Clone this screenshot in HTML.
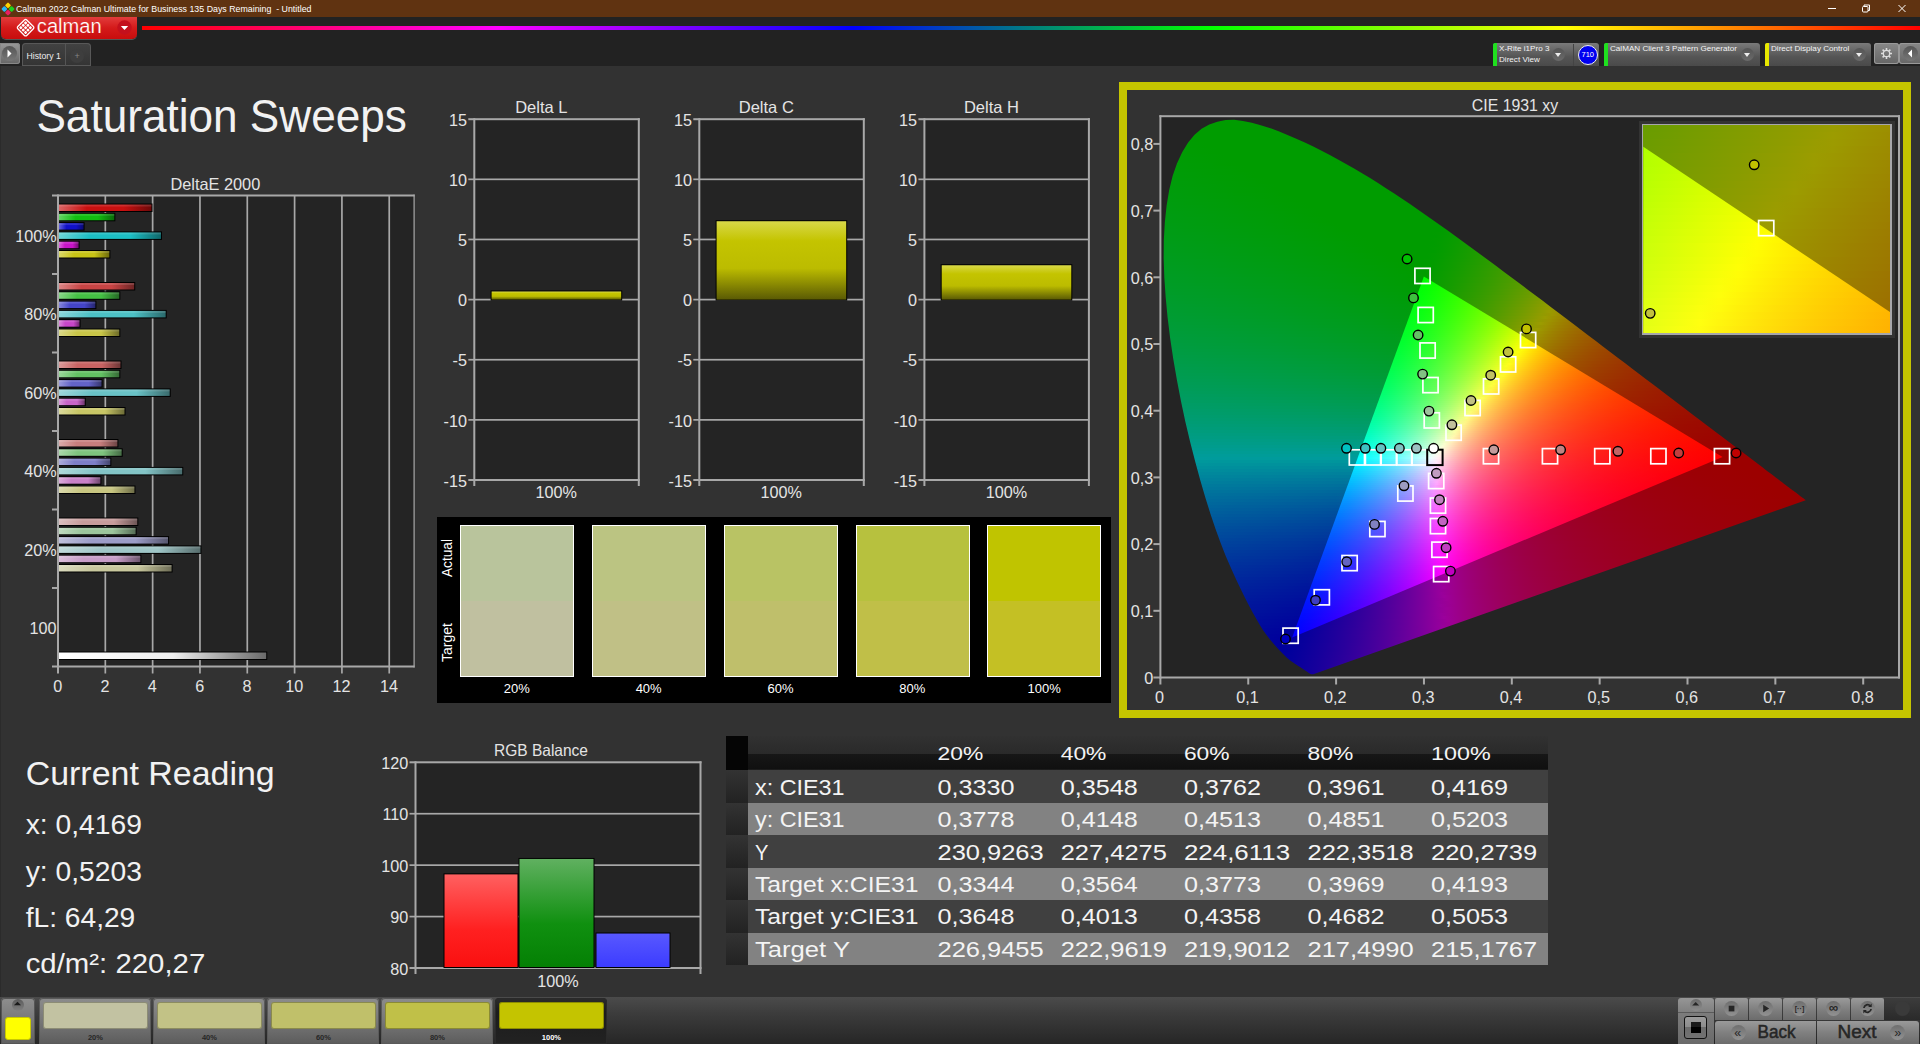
<!DOCTYPE html>
<html lang="en"><head><meta charset="utf-8"><title>Calman 2022 - Saturation Sweeps</title>
<style>
*{box-sizing:border-box;margin:0;padding:0}
html,body{width:1920px;height:1044px;overflow:hidden;background:#323232}
body{position:relative;font-family:"Liberation Sans",sans-serif;color:#eee}
.a{position:absolute}
.t{position:absolute;white-space:nowrap;line-height:1}
svg{position:absolute;left:0;top:0;overflow:visible}
svg text{font-family:"Liberation Sans",sans-serif}
#titlebar{left:0;top:0;width:1920px;height:17px;background:#603311}
#toolbar{left:0;top:17px;width:1920px;height:49px;background:#222}
#rainbow{left:142px;top:26px;width:1778px;height:4px;background:linear-gradient(90deg,#f00,#f0f,#00f,#0f0,#ff0,#f00)}
#calbtn{left:1px;top:17px;width:136px;height:22px;border-radius:0 0 5px 5px;background:linear-gradient(#e23c3c,#d41a1a 50%,#c80d0d);box-shadow:0 1px 0 #555}
.dd{position:absolute;top:43px;height:23px;border-radius:3px 3px 0 0;background:linear-gradient(#7a7a7a,#555 60%,#4a4a4a)}
.dd i{position:absolute;left:0;top:0;bottom:0;width:4px;border-radius:2px 0 0 0}
.dd b{position:absolute;top:5px;width:13px;height:13px;border-radius:7px;background:linear-gradient(#555,#6a6a6a)}
.dd b:after{content:"";position:absolute;left:3px;top:5px;border:3.5px solid transparent;border-top:4px solid #eee;border-bottom:0}
.dd span{position:absolute;left:6px;font-size:8.1px;color:#f4f4f4;white-space:nowrap;line-height:1}

.cl{position:absolute;overflow:hidden}
.cl i{display:block;height:3px}
.cl+.cl i{height:2px}
.cl.ins i{height:6.924px}</style></head>
<body>

<div class="a" id="titlebar"></div>
<svg width="14" height="14" style="left:1px;top:2px" viewBox="0 0 14 14"><g transform="rotate(45 7 7)"><rect x="2.2" y="2.2" width="4.5" height="4.5" rx="1" fill="#ffd400"/><rect x="7.3" y="2.2" width="4.5" height="4.500" rx="1" fill="#1fd11f"/><rect x="2.2" y="7.3" width="4.5" height="4.5" rx="1" fill="#29b6f6"/><rect x="7.3" y="7.3" width="4.5" height="4.5" rx="1" fill="#e91e63"/></g></svg>
<svg width="400" height="17"><text x="16" y="12" font-size="9.300" fill="#fff" textLength="295.500" lengthAdjust="spacingAndGlyphs" xml:space="preserve">Calman 2022 Calman Ultimate for Business 135 Days Remaining  - Untitled</text></svg>
<svg width="1920" height="17"><g stroke="#fff" stroke-width="1" fill="none"><path d="M1828 8.5h8"/><rect x="1862.500" y="6.500" width="5.500" height="5.500" rx="1"/><path d="M1864 6.500v-1.500h5.500v5.500h-1.500"/><path d="M1898.500 5l7 7m0-7l-7 7"/></g></svg>
<div class="a" id="toolbar"></div>
<div class="a" style="left:0;top:66px;width:1.300px;height:931px;background:#2b2b2b"></div>
<div class="a" id="rainbow"></div>
<div class="a" id="calbtn"></div>
<svg width="140" height="40"><g transform="translate(25.600 27.700) rotate(45)" fill="#fff"><rect x="-6.300" y="-6.300" width="12.600" height="12.600" rx="1.600" fill="none" stroke="#fff" stroke-width="1.300"/><rect x="-4.7" y="-4.7" width="2.700" height="2.700" rx=".9"/><rect x="-1.35" y="-4.7" width="2.700" height="2.700" rx=".9"/><rect x="2" y="-4.7" width="2.700" height="2.700" rx=".9"/><rect x="-4.7" y="-1.35" width="2.700" height="2.700" rx=".9"/><rect x="-1.35" y="-1.35" width="2.700" height="2.700" rx=".9"/><rect x="2" y="-1.35" width="2.700" height="2.700" rx=".9"/><rect x="-4.7" y="2" width="2.700" height="2.700" rx=".9"/><rect x="-1.35" y="2" width="2.700" height="2.700" rx=".9"/><rect x="2" y="2" width="2.700" height="2.700" rx=".9"/></g>
<text x="36.800" y="32.700" font-size="20" fill="#fff" stroke="#dc2222" stroke-width=".22" textLength="65" lengthAdjust="spacingAndGlyphs">calman</text>
<circle cx="124.500" cy="27.500" r="7.200" fill="#c4101c"/><path d="M120.800 26h7.400l-3.700 4z" fill="#fff"/></svg>
<div class="a" style="left:0;top:43px;width:20px;height:21px;border-radius:0 3px 3px 0;background:linear-gradient(#999,#666);box-shadow:0 0 0 1px #888 inset"></div>
<div class="a" style="left:2px;top:46px;width:15px;height:15px;border-radius:8px;background:linear-gradient(#555,#777)"></div>
<svg width="30" height="70"><path d="M7.500 49.500v8l4-4z" fill="#fff"/></svg>
<div class="a" style="left:22px;top:43px;width:69px;height:23px;border-radius:4px 4px 0 0;background:linear-gradient(#424242,#343434);box-shadow:0 0 0 1px #585858 inset"></div>
<div class="a" style="left:65px;top:44px;width:1px;height:22px;background:#555"></div>
<div class="a" style="left:70px;top:49px;width:14px;height:14px;border-radius:7px;background:#3e3e3e"></div>
<div class="t" style="left:74.600px;top:52.300px;font-size:9px;color:#858585">+</div>
<div class="t" style="left:26.500px;top:51.700px;font-size:8.700px;color:#eee">History 1</div>

<div class="dd" style="left:1493px;width:106px"><i style="background:#1fe01f"></i><span style="top:2px">X-Rite i1Pro 3</span><span style="top:13px">Direct View</span><b style="left:59px"></b><em style="position:absolute;left:80px;top:1px;width:1px;height:22px;background:#444"></em></div>
<div class="a" style="left:1578px;top:45px;width:20px;height:20px;border-radius:10px;background:#0000f0;border:1px solid #eee"></div>
<div class="t" style="left:1581.500px;top:51px;font-size:7.500px;color:#fff">710</div>
<div class="dd" style="left:1604px;width:156px"><i style="background:#1fe01f"></i><span style="top:2px">CalMAN Client 3 Pattern Generator</span><b style="left:137px"></b></div>
<div class="dd" style="left:1765px;width:106px"><i style="background:#e8e800"></i><span style="top:2px">Direct Display Control</span><b style="left:88px"></b></div>
<div class="a" style="left:1874px;top:43px;width:25px;height:21px;border-radius:3px;background:linear-gradient(#888,#666);box-shadow:0 0 0 1px #999 inset"></div>
<div class="a" style="left:1899px;top:43px;width:22px;height:21px;border-radius:3px 0 0 3px;background:linear-gradient(#888,#666);box-shadow:0 0 0 1px #999 inset"></div>
<div class="a" style="left:1903px;top:46px;width:15px;height:15px;border-radius:8px;background:linear-gradient(#555,#777)"></div>
<svg width="1920" height="70"><path d="M1912 49.500v8l-4-4z" fill="#fff"/><g transform="translate(1886.500 53.500)" fill="none" stroke="#ddd"><circle r="3.200" stroke-width="1.300"/><g stroke-width="1.600"><path d="M0 -5.500v2M0 5.500v-2M-5.500 0h2M5.500 0h-2M-3.900 -3.900l1.400 1.400M3.900 3.900l-1.400 -1.400M-3.900 3.900l1.400 -1.400M3.900 -3.900l-1.400 1.400"/></g></g></svg>

<svg width="440" height="1000"><text x="36.4" y="132" font-size="46.6" fill="#f2f2f2" textLength="370.5" lengthAdjust="spacingAndGlyphs">Saturation Sweeps</text><text x="25.7" y="785" font-size="33.6" fill="#f2f2f2" textLength="249" lengthAdjust="spacingAndGlyphs">Current Reading</text><text x="25.7" y="834.2" font-size="28" fill="#f2f2f2" textLength="116.2" lengthAdjust="spacingAndGlyphs">x: 0,4169</text><text x="25.7" y="880.6" font-size="28" fill="#f2f2f2" textLength="116.2" lengthAdjust="spacingAndGlyphs">y: 0,5203</text><text x="25.7" y="927" font-size="28" fill="#f2f2f2" textLength="109.6" lengthAdjust="spacingAndGlyphs">fL: 64,29</text><text x="25.7" y="973.3" font-size="28" fill="#f2f2f2" textLength="179.6" lengthAdjust="spacingAndGlyphs">cd/m²: 220,27</text></svg>
<svg width="440" height="720"><defs><linearGradient id="b00"><stop offset="0" stop-color="#db6464"/><stop offset=".3" stop-color="#c81010"/><stop offset=".7" stop-color="#c81010"/><stop offset="1" stop-color="#6e0909"/></linearGradient><linearGradient id="b01"><stop offset="0" stop-color="#64d564"/><stop offset=".3" stop-color="#10be10"/><stop offset=".7" stop-color="#10be10"/><stop offset="1" stop-color="#096909"/></linearGradient><linearGradient id="b02"><stop offset="0" stop-color="#6464db"/><stop offset=".3" stop-color="#1010c8"/><stop offset=".7" stop-color="#1010c8"/><stop offset="1" stop-color="#09096e"/></linearGradient><linearGradient id="b03"><stop offset="0" stop-color="#6bd5d9"/><stop offset=".3" stop-color="#1cbec4"/><stop offset=".7" stop-color="#1cbec4"/><stop offset="1" stop-color="#0f696c"/></linearGradient><linearGradient id="b04"><stop offset="0" stop-color="#db66db"/><stop offset=".3" stop-color="#c814c8"/><stop offset=".7" stop-color="#c814c8"/><stop offset="1" stop-color="#6e0b6e"/></linearGradient><linearGradient id="b05"><stop offset="0" stop-color="#dbd968"/><stop offset=".3" stop-color="#c8c416"/><stop offset=".7" stop-color="#c8c416"/><stop offset="1" stop-color="#6e6c0c"/></linearGradient><linearGradient id="b10"><stop offset="0" stop-color="#db8585"/><stop offset=".3" stop-color="#c84444"/><stop offset=".7" stop-color="#c84444"/><stop offset="1" stop-color="#6e2525"/></linearGradient><linearGradient id="b11"><stop offset="0" stop-color="#85d785"/><stop offset=".3" stop-color="#44c144"/><stop offset=".7" stop-color="#44c144"/><stop offset="1" stop-color="#256a25"/></linearGradient><linearGradient id="b12"><stop offset="0" stop-color="#8585db"/><stop offset=".3" stop-color="#4444c8"/><stop offset=".7" stop-color="#4444c8"/><stop offset="1" stop-color="#25256e"/></linearGradient><linearGradient id="b13"><stop offset="0" stop-color="#8bd7d9"/><stop offset=".3" stop-color="#4cc1c5"/><stop offset=".7" stop-color="#4cc1c5"/><stop offset="1" stop-color="#2a6a6c"/></linearGradient><linearGradient id="b14"><stop offset="0" stop-color="#db87db"/><stop offset=".3" stop-color="#c846c8"/><stop offset=".7" stop-color="#c846c8"/><stop offset="1" stop-color="#6e266e"/></linearGradient><linearGradient id="b15"><stop offset="0" stop-color="#dbd988"/><stop offset=".3" stop-color="#c8c548"/><stop offset=".7" stop-color="#c8c548"/><stop offset="1" stop-color="#6e6c28"/></linearGradient><linearGradient id="b20"><stop offset="0" stop-color="#db9a9a"/><stop offset=".3" stop-color="#c86363"/><stop offset=".7" stop-color="#c86363"/><stop offset="1" stop-color="#6e3636"/></linearGradient><linearGradient id="b21"><stop offset="0" stop-color="#9ad79a"/><stop offset=".3" stop-color="#63c263"/><stop offset=".7" stop-color="#63c263"/><stop offset="1" stop-color="#366b36"/></linearGradient><linearGradient id="b22"><stop offset="0" stop-color="#9a9adb"/><stop offset=".3" stop-color="#6363c8"/><stop offset=".7" stop-color="#6363c8"/><stop offset="1" stop-color="#36366e"/></linearGradient><linearGradient id="b23"><stop offset="0" stop-color="#9ed7da"/><stop offset=".3" stop-color="#69c2c6"/><stop offset=".7" stop-color="#69c2c6"/><stop offset="1" stop-color="#3a6b6d"/></linearGradient><linearGradient id="b24"><stop offset="0" stop-color="#db9bdb"/><stop offset=".3" stop-color="#c865c8"/><stop offset=".7" stop-color="#c865c8"/><stop offset="1" stop-color="#6e386e"/></linearGradient><linearGradient id="b25"><stop offset="0" stop-color="#dbda9c"/><stop offset=".3" stop-color="#c8c666"/><stop offset=".7" stop-color="#c8c666"/><stop offset="1" stop-color="#6e6d38"/></linearGradient><linearGradient id="b30"><stop offset="0" stop-color="#dbabab"/><stop offset=".3" stop-color="#c87e7e"/><stop offset=".7" stop-color="#c87e7e"/><stop offset="1" stop-color="#6e4545"/></linearGradient><linearGradient id="b31"><stop offset="0" stop-color="#abd9ab"/><stop offset=".3" stop-color="#7ec47e"/><stop offset=".7" stop-color="#7ec47e"/><stop offset="1" stop-color="#456c45"/></linearGradient><linearGradient id="b32"><stop offset="0" stop-color="#ababdb"/><stop offset=".3" stop-color="#7e7ec8"/><stop offset=".7" stop-color="#7e7ec8"/><stop offset="1" stop-color="#45456e"/></linearGradient><linearGradient id="b33"><stop offset="0" stop-color="#aed9da"/><stop offset=".3" stop-color="#83c4c6"/><stop offset=".7" stop-color="#83c4c6"/><stop offset="1" stop-color="#486c6d"/></linearGradient><linearGradient id="b34"><stop offset="0" stop-color="#dbacdb"/><stop offset=".3" stop-color="#c880c8"/><stop offset=".7" stop-color="#c880c8"/><stop offset="1" stop-color="#6e466e"/></linearGradient><linearGradient id="b35"><stop offset="0" stop-color="#dbdaad"/><stop offset=".3" stop-color="#c8c681"/><stop offset=".7" stop-color="#c8c681"/><stop offset="1" stop-color="#6e6d47"/></linearGradient><linearGradient id="b40"><stop offset="0" stop-color="#dbbfbf"/><stop offset=".3" stop-color="#c89c9c"/><stop offset=".7" stop-color="#c89c9c"/><stop offset="1" stop-color="#6e5656"/></linearGradient><linearGradient id="b41"><stop offset="0" stop-color="#bfdabf"/><stop offset=".3" stop-color="#9cc69c"/><stop offset=".7" stop-color="#9cc69c"/><stop offset="1" stop-color="#566d56"/></linearGradient><linearGradient id="b42"><stop offset="0" stop-color="#bfbfdb"/><stop offset=".3" stop-color="#9c9cc8"/><stop offset=".7" stop-color="#9c9cc8"/><stop offset="1" stop-color="#56566e"/></linearGradient><linearGradient id="b43"><stop offset="0" stop-color="#c1dadb"/><stop offset=".3" stop-color="#9fc6c7"/><stop offset=".7" stop-color="#9fc6c7"/><stop offset="1" stop-color="#576d6d"/></linearGradient><linearGradient id="b44"><stop offset="0" stop-color="#dbbfdb"/><stop offset=".3" stop-color="#c89dc8"/><stop offset=".7" stop-color="#c89dc8"/><stop offset="1" stop-color="#6e566e"/></linearGradient><linearGradient id="b45"><stop offset="0" stop-color="#dbdbbf"/><stop offset=".3" stop-color="#c8c79d"/><stop offset=".7" stop-color="#c8c79d"/><stop offset="1" stop-color="#6e6d56"/></linearGradient><linearGradient id="bw"><stop offset="0" stop-color="#fff"/><stop offset=".55" stop-color="#eee"/><stop offset="1" stop-color="#6a6a6a"/></linearGradient></defs><rect x="58" y="195.5" width="356.1" height="471" fill="#242424"/><rect x="104.47" y="195.5" width="1.700" height="478" fill="#a8a8a8"/><rect x="151.79" y="195.5" width="1.700" height="478" fill="#a8a8a8"/><rect x="199.11" y="195.5" width="1.700" height="478" fill="#a8a8a8"/><rect x="246.43" y="195.5" width="1.700" height="478" fill="#a8a8a8"/><rect x="293.75" y="195.5" width="1.700" height="478" fill="#a8a8a8"/><rect x="341.07" y="195.5" width="1.700" height="478" fill="#a8a8a8"/><rect x="388.39" y="195.5" width="1.700" height="478" fill="#a8a8a8"/><rect x="57" y="194.5" width="2" height="479" fill="#a8a8a8"/><rect x="413.5" y="194.5" width="1.200" height="473" fill="#a8a8a8"/><rect x="52" y="194.5" width="362.6" height="2" fill="#a8a8a8"/><rect x="52" y="665.5" width="362.6" height="2" fill="#a8a8a8"/><rect x="52" y="273" width="6" height="2" fill="#a8a8a8"/><rect x="52" y="351.5" width="6" height="2" fill="#a8a8a8"/><rect x="52" y="430" width="6" height="2" fill="#a8a8a8"/><rect x="52" y="508.5" width="6" height="2" fill="#a8a8a8"/><rect x="52" y="587" width="6" height="2" fill="#a8a8a8"/><text x="57.7" y="692.200" font-size="16.200" fill="#e4e4e4" text-anchor="middle">0</text><text x="105.02" y="692.200" font-size="16.200" fill="#e4e4e4" text-anchor="middle">2</text><text x="152.34" y="692.200" font-size="16.200" fill="#e4e4e4" text-anchor="middle">4</text><text x="199.66" y="692.200" font-size="16.200" fill="#e4e4e4" text-anchor="middle">6</text><text x="246.98" y="692.200" font-size="16.200" fill="#e4e4e4" text-anchor="middle">8</text><text x="294.3" y="692.200" font-size="16.200" fill="#e4e4e4" text-anchor="middle">10</text><text x="341.62" y="692.200" font-size="16.200" fill="#e4e4e4" text-anchor="middle">12</text><text x="388.94" y="692.200" font-size="16.200" fill="#e4e4e4" text-anchor="middle">14</text><text x="56.600" y="241.95" font-size="16.200" fill="#e4e4e4" text-anchor="end">100%</text><text x="56.600" y="320.45" font-size="16.200" fill="#e4e4e4" text-anchor="end">80%</text><text x="56.600" y="398.95" font-size="16.200" fill="#e4e4e4" text-anchor="end">60%</text><text x="56.600" y="477.45" font-size="16.200" fill="#e4e4e4" text-anchor="end">40%</text><text x="56.600" y="555.95" font-size="16.200" fill="#e4e4e4" text-anchor="end">20%</text><text x="56.600" y="634.45" font-size="16.200" fill="#e4e4e4" text-anchor="end">100</text><text x="170.400" y="190" font-size="16.500" fill="#e4e4e4" textLength="89.900" lengthAdjust="spacingAndGlyphs">DeltaE 2000</text><rect x="59" y="203.5" width="93.48" height="8.500" fill="#000"/><rect x="59" y="204.5" width="92.48" height="6.500" fill="url(#b00)"/><rect x="59" y="204.5" width="92.48" height="2" fill="#fff" opacity=".13"/><rect x="59" y="212.8" width="56.34" height="8.500" fill="#000"/><rect x="59" y="213.8" width="55.34" height="6.500" fill="url(#b01)"/><rect x="59" y="213.8" width="55.34" height="2" fill="#fff" opacity=".13"/><rect x="59" y="222.1" width="25.58" height="8.500" fill="#000"/><rect x="59" y="223.1" width="24.58" height="6.500" fill="url(#b02)"/><rect x="59" y="223.1" width="24.58" height="2" fill="#fff" opacity=".13"/><rect x="59" y="231.4" width="102.95" height="8.500" fill="#000"/><rect x="59" y="232.4" width="101.95" height="6.500" fill="url(#b03)"/><rect x="59" y="232.4" width="101.95" height="2" fill="#fff" opacity=".13"/><rect x="59" y="240.7" width="20.61" height="8.500" fill="#000"/><rect x="59" y="241.7" width="19.61" height="6.500" fill="url(#b04)"/><rect x="59" y="241.7" width="19.61" height="2" fill="#fff" opacity=".13"/><rect x="59" y="250" width="51.37" height="8.500" fill="#000"/><rect x="59" y="251" width="50.37" height="6.500" fill="url(#b05)"/><rect x="59" y="251" width="50.37" height="2" fill="#fff" opacity=".13"/><rect x="59" y="282" width="76.21" height="8.500" fill="#000"/><rect x="59" y="283" width="75.21" height="6.500" fill="url(#b10)"/><rect x="59" y="283" width="75.21" height="2" fill="#fff" opacity=".13"/><rect x="59" y="291.3" width="61.31" height="8.500" fill="#000"/><rect x="59" y="292.3" width="60.31" height="6.500" fill="url(#b11)"/><rect x="59" y="292.3" width="60.31" height="2" fill="#fff" opacity=".13"/><rect x="59" y="300.6" width="37.41" height="8.500" fill="#000"/><rect x="59" y="301.6" width="36.41" height="6.500" fill="url(#b12)"/><rect x="59" y="301.6" width="36.41" height="2" fill="#fff" opacity=".13"/><rect x="59" y="309.9" width="107.68" height="8.500" fill="#000"/><rect x="59" y="310.9" width="106.68" height="6.500" fill="url(#b13)"/><rect x="59" y="310.9" width="106.68" height="2" fill="#fff" opacity=".13"/><rect x="59" y="319.2" width="21.56" height="8.500" fill="#000"/><rect x="59" y="320.2" width="20.56" height="6.500" fill="url(#b14)"/><rect x="59" y="320.2" width="20.56" height="2" fill="#fff" opacity=".13"/><rect x="59" y="328.5" width="61.31" height="8.500" fill="#000"/><rect x="59" y="329.5" width="60.31" height="6.500" fill="url(#b15)"/><rect x="59" y="329.5" width="60.31" height="2" fill="#fff" opacity=".13"/><rect x="59" y="360.5" width="62.49" height="8.500" fill="#000"/><rect x="59" y="361.5" width="61.49" height="6.500" fill="url(#b20)"/><rect x="59" y="361.5" width="61.49" height="2" fill="#fff" opacity=".13"/><rect x="59" y="369.8" width="61.31" height="8.500" fill="#000"/><rect x="59" y="370.8" width="60.31" height="6.500" fill="url(#b21)"/><rect x="59" y="370.8" width="60.31" height="2" fill="#fff" opacity=".13"/><rect x="59" y="379.1" width="43.56" height="8.500" fill="#000"/><rect x="59" y="380.1" width="42.56" height="6.500" fill="url(#b22)"/><rect x="59" y="380.1" width="42.56" height="2" fill="#fff" opacity=".13"/><rect x="59" y="388.4" width="111.7" height="8.500" fill="#000"/><rect x="59" y="389.4" width="110.7" height="6.500" fill="url(#b23)"/><rect x="59" y="389.4" width="110.7" height="2" fill="#fff" opacity=".13"/><rect x="59" y="397.7" width="26.76" height="8.500" fill="#000"/><rect x="59" y="398.7" width="25.76" height="6.500" fill="url(#b24)"/><rect x="59" y="398.7" width="25.76" height="2" fill="#fff" opacity=".13"/><rect x="59" y="407" width="66.51" height="8.500" fill="#000"/><rect x="59" y="408" width="65.51" height="6.500" fill="url(#b25)"/><rect x="59" y="408" width="65.51" height="2" fill="#fff" opacity=".13"/><rect x="59" y="439" width="59.41" height="8.500" fill="#000"/><rect x="59" y="440" width="58.41" height="6.500" fill="url(#b30)"/><rect x="59" y="440" width="58.41" height="2" fill="#fff" opacity=".13"/><rect x="59" y="448.3" width="63.67" height="8.500" fill="#000"/><rect x="59" y="449.3" width="62.67" height="6.500" fill="url(#b31)"/><rect x="59" y="449.3" width="62.67" height="2" fill="#fff" opacity=".13"/><rect x="59" y="457.6" width="52.32" height="8.500" fill="#000"/><rect x="59" y="458.6" width="51.32" height="6.500" fill="url(#b32)"/><rect x="59" y="458.6" width="51.32" height="2" fill="#fff" opacity=".13"/><rect x="59" y="466.9" width="124.24" height="8.500" fill="#000"/><rect x="59" y="467.9" width="123.24" height="6.500" fill="url(#b33)"/><rect x="59" y="467.9" width="123.24" height="2" fill="#fff" opacity=".13"/><rect x="59" y="476.2" width="42.38" height="8.500" fill="#000"/><rect x="59" y="477.2" width="41.38" height="6.500" fill="url(#b34)"/><rect x="59" y="477.2" width="41.38" height="2" fill="#fff" opacity=".13"/><rect x="59" y="485.5" width="76.45" height="8.500" fill="#000"/><rect x="59" y="486.5" width="75.45" height="6.500" fill="url(#b35)"/><rect x="59" y="486.5" width="75.45" height="2" fill="#fff" opacity=".13"/><rect x="59" y="517.5" width="79.29" height="8.500" fill="#000"/><rect x="59" y="518.5" width="78.29" height="6.500" fill="url(#b40)"/><rect x="59" y="518.5" width="78.29" height="2" fill="#fff" opacity=".13"/><rect x="59" y="526.8" width="77.63" height="8.500" fill="#000"/><rect x="59" y="527.8" width="76.63" height="6.500" fill="url(#b41)"/><rect x="59" y="527.8" width="76.63" height="2" fill="#fff" opacity=".13"/><rect x="59" y="536.1" width="110.05" height="8.500" fill="#000"/><rect x="59" y="537.1" width="109.05" height="6.500" fill="url(#b42)"/><rect x="59" y="537.1" width="109.05" height="2" fill="#fff" opacity=".13"/><rect x="59" y="545.4" width="142.46" height="8.500" fill="#000"/><rect x="59" y="546.4" width="141.46" height="6.500" fill="url(#b43)"/><rect x="59" y="546.4" width="141.46" height="2" fill="#fff" opacity=".13"/><rect x="59" y="554.7" width="82.36" height="8.500" fill="#000"/><rect x="59" y="555.7" width="81.36" height="6.500" fill="url(#b44)"/><rect x="59" y="555.7" width="81.36" height="2" fill="#fff" opacity=".13"/><rect x="59" y="564" width="113.59" height="8.500" fill="#000"/><rect x="59" y="565" width="112.59" height="6.500" fill="url(#b45)"/><rect x="59" y="565" width="112.59" height="2" fill="#fff" opacity=".13"/><rect x="59" y="651.500" width="208.23" height="8.500" fill="#000"/><rect x="59" y="652.500" width="207.23" height="6.500" fill="url(#bw)"/></svg>
<svg width="1120" height="520"><defs><linearGradient id="yb" x1="0" y1="0" x2="0" y2="1"><stop offset="0" stop-color="#d8d848"/><stop offset=".25" stop-color="#c4c400"/><stop offset=".6" stop-color="#bcbc00"/><stop offset="1" stop-color="#5a5a04"/></linearGradient></defs><rect x="474.3" y="119.2" width="164.5" height="360.8" fill="#242424"/><rect x="468.3" y="178.48" width="170.5" height="1.700" fill="#a8a8a8"/><rect x="468.3" y="238.62" width="170.5" height="1.700" fill="#a8a8a8"/><rect x="468.3" y="298.75" width="170.5" height="1.700" fill="#a8a8a8"/><rect x="468.3" y="358.88" width="170.5" height="1.700" fill="#a8a8a8"/><rect x="468.3" y="419.02" width="170.5" height="1.700" fill="#a8a8a8"/><rect x="468.3" y="118.2" width="171.5" height="2" fill="#a8a8a8"/><rect x="468.3" y="479" width="171.5" height="2" fill="#a8a8a8"/><rect x="473.3" y="118.2" width="2" height="367.8" fill="#a8a8a8"/><rect x="637.8" y="118.2" width="2" height="367.8" fill="#a8a8a8"/><text x="467" y="125.9" font-size="16.200" fill="#e4e4e4" text-anchor="end">15</text><text x="467" y="186.03" font-size="16.200" fill="#e4e4e4" text-anchor="end">10</text><text x="467" y="246.17" font-size="16.200" fill="#e4e4e4" text-anchor="end">5</text><text x="467" y="306.3" font-size="16.200" fill="#e4e4e4" text-anchor="end">0</text><text x="467" y="366.43" font-size="16.200" fill="#e4e4e4" text-anchor="end">-5</text><text x="467" y="426.57" font-size="16.200" fill="#e4e4e4" text-anchor="end">-10</text><text x="467" y="486.7" font-size="16.200" fill="#e4e4e4" text-anchor="end">-15</text><text x="541.3" y="112.500" font-size="16.500" fill="#e4e4e4" text-anchor="middle">Delta L</text><text x="556.25" y="498" font-size="16.200" fill="#e4e4e4" text-anchor="middle">100%</text><rect x="490.6" y="290.46" width="131.6" height="10.14" fill="#000"/><rect x="491.6" y="291.46" width="129.6" height="8.14" fill="url(#yb)"/><rect x="699.3" y="119.2" width="164.5" height="360.8" fill="#242424"/><rect x="693.3" y="178.48" width="170.5" height="1.700" fill="#a8a8a8"/><rect x="693.3" y="238.62" width="170.5" height="1.700" fill="#a8a8a8"/><rect x="693.3" y="298.75" width="170.5" height="1.700" fill="#a8a8a8"/><rect x="693.3" y="358.88" width="170.5" height="1.700" fill="#a8a8a8"/><rect x="693.3" y="419.02" width="170.5" height="1.700" fill="#a8a8a8"/><rect x="693.3" y="118.2" width="171.5" height="2" fill="#a8a8a8"/><rect x="693.3" y="479" width="171.5" height="2" fill="#a8a8a8"/><rect x="698.3" y="118.2" width="2" height="367.8" fill="#a8a8a8"/><rect x="862.8" y="118.2" width="2" height="367.8" fill="#a8a8a8"/><text x="692" y="125.9" font-size="16.200" fill="#e4e4e4" text-anchor="end">15</text><text x="692" y="186.03" font-size="16.200" fill="#e4e4e4" text-anchor="end">10</text><text x="692" y="246.17" font-size="16.200" fill="#e4e4e4" text-anchor="end">5</text><text x="692" y="306.3" font-size="16.200" fill="#e4e4e4" text-anchor="end">0</text><text x="692" y="366.43" font-size="16.200" fill="#e4e4e4" text-anchor="end">-5</text><text x="692" y="426.57" font-size="16.200" fill="#e4e4e4" text-anchor="end">-10</text><text x="692" y="486.7" font-size="16.200" fill="#e4e4e4" text-anchor="end">-15</text><text x="766.3" y="112.500" font-size="16.500" fill="#e4e4e4" text-anchor="middle">Delta C</text><text x="781.25" y="498" font-size="16.200" fill="#e4e4e4" text-anchor="middle">100%</text><rect x="715.6" y="220.22" width="131.6" height="80.38" fill="#000"/><rect x="716.6" y="221.22" width="129.6" height="78.38" fill="url(#yb)"/><rect x="924.4" y="119.2" width="164.5" height="360.8" fill="#242424"/><rect x="918.4" y="178.48" width="170.5" height="1.700" fill="#a8a8a8"/><rect x="918.4" y="238.62" width="170.5" height="1.700" fill="#a8a8a8"/><rect x="918.4" y="298.75" width="170.5" height="1.700" fill="#a8a8a8"/><rect x="918.4" y="358.88" width="170.5" height="1.700" fill="#a8a8a8"/><rect x="918.4" y="419.02" width="170.5" height="1.700" fill="#a8a8a8"/><rect x="918.4" y="118.2" width="171.5" height="2" fill="#a8a8a8"/><rect x="918.4" y="479" width="171.5" height="2" fill="#a8a8a8"/><rect x="923.4" y="118.2" width="2" height="367.8" fill="#a8a8a8"/><rect x="1087.9" y="118.2" width="2" height="367.8" fill="#a8a8a8"/><text x="917.1" y="125.9" font-size="16.200" fill="#e4e4e4" text-anchor="end">15</text><text x="917.1" y="186.03" font-size="16.200" fill="#e4e4e4" text-anchor="end">10</text><text x="917.1" y="246.17" font-size="16.200" fill="#e4e4e4" text-anchor="end">5</text><text x="917.1" y="306.3" font-size="16.200" fill="#e4e4e4" text-anchor="end">0</text><text x="917.1" y="366.43" font-size="16.200" fill="#e4e4e4" text-anchor="end">-5</text><text x="917.1" y="426.57" font-size="16.200" fill="#e4e4e4" text-anchor="end">-10</text><text x="917.1" y="486.7" font-size="16.200" fill="#e4e4e4" text-anchor="end">-15</text><text x="991.4" y="112.500" font-size="16.500" fill="#e4e4e4" text-anchor="middle">Delta H</text><text x="1006.35" y="498" font-size="16.200" fill="#e4e4e4" text-anchor="middle">100%</text><rect x="940.7" y="264.24" width="131.6" height="36.36" fill="#000"/><rect x="941.7" y="265.24" width="129.6" height="34.36" fill="url(#yb)"/></svg>
<div class="a" style="left:436.500px;top:516.500px;width:674.500px;height:186px;background:#000"></div><div class="a" style="left:460px;top:524.500px;width:114px;height:152px;border:1px solid #fff;background:linear-gradient(rgb(185,196,156) 50%,rgb(192,192,160) 50%)"></div><div class="a" style="left:591.85px;top:524.500px;width:114px;height:152px;border:1px solid #fff;background:linear-gradient(rgb(187,196,130) 50%,rgb(192,192,134) 50%)"></div><div class="a" style="left:723.7px;top:524.500px;width:114px;height:152px;border:1px solid #fff;background:linear-gradient(rgb(185,195,100) 50%,rgb(191,191,107) 50%)"></div><div class="a" style="left:855.55px;top:524.500px;width:114px;height:152px;border:1px solid #fff;background:linear-gradient(rgb(183,193,62) 50%,rgb(192,191,72) 50%)"></div><div class="a" style="left:987.4px;top:524.500px;width:114px;height:152px;border:1px solid #fff;background:linear-gradient(rgb(192,196,0) 50%,rgb(196,192,36) 50%)"></div><svg width="1120" height="710"><text x="516.8" y="692.8" font-size="13" fill="#fff" text-anchor="middle">20%</text><text x="648.65" y="692.8" font-size="13" fill="#fff" text-anchor="middle">40%</text><text x="780.5" y="692.8" font-size="13" fill="#fff" text-anchor="middle">60%</text><text x="912.35" y="692.8" font-size="13" fill="#fff" text-anchor="middle">80%</text><text x="1044.2" y="692.8" font-size="13" fill="#fff" text-anchor="middle">100%</text><text transform="translate(451.600 558) rotate(-90)" font-size="14" fill="#fff" text-anchor="middle" textLength="38" lengthAdjust="spacingAndGlyphs">Actual</text><text transform="translate(451.600 642.500) rotate(-90)" font-size="14" fill="#fff" text-anchor="middle" textLength="39" lengthAdjust="spacingAndGlyphs">Target</text></svg>
<svg width="720" height="1000"><defs><linearGradient id="gr" x1="0" y1="0" x2="0" y2="1"><stop offset="0" stop-color="#ff6060"/><stop offset=".6" stop-color="#ff2020"/><stop offset="1" stop-color="#fa1010"/></linearGradient><linearGradient id="gg" x1="0" y1="0" x2="0" y2="1"><stop offset="0" stop-color="#60b060"/><stop offset=".6" stop-color="#109010"/><stop offset="1" stop-color="#048004"/></linearGradient><linearGradient id="gb" x1="0" y1="0" x2="0" y2="1"><stop offset="0" stop-color="#5858ff"/><stop offset="1" stop-color="#3c3cff"/></linearGradient></defs><rect x="415.5" y="762.3" width="285" height="205.7" fill="#242424"/><rect x="409.5" y="812.87" width="291" height="1.700" fill="#a8a8a8"/><rect x="409.5" y="864.3" width="291" height="1.700" fill="#a8a8a8"/><rect x="409.5" y="915.73" width="291" height="1.700" fill="#a8a8a8"/><rect x="409.5" y="761.3" width="292" height="2" fill="#a8a8a8"/><rect x="409.5" y="967" width="292" height="2" fill="#a8a8a8"/><rect x="414.5" y="761.3" width="2" height="212.7" fill="#a8a8a8"/><rect x="699.5" y="761.3" width="2" height="212.7" fill="#a8a8a8"/><text x="408.2" y="769" font-size="16.200" fill="#e4e4e4" text-anchor="end">120</text><text x="408.2" y="820.42" font-size="16.200" fill="#e4e4e4" text-anchor="end">110</text><text x="408.2" y="871.85" font-size="16.200" fill="#e4e4e4" text-anchor="end">100</text><text x="408.2" y="923.28" font-size="16.200" fill="#e4e4e4" text-anchor="end">90</text><text x="408.2" y="974.7" font-size="16.200" fill="#e4e4e4" text-anchor="end">80</text><text x="541" y="756.100" font-size="16.500" fill="#e4e4e4" text-anchor="middle" textLength="94" lengthAdjust="spacingAndGlyphs">RGB Balance</text><text x="558" y="986.500" font-size="16.200" fill="#e4e4e4" text-anchor="middle">100%</text><rect x="443.5" y="873.38" width="75" height="94.62" fill="#000"/><rect x="444.5" y="874.38" width="73" height="92.62" fill="url(#gr)"/><rect x="518.5" y="857.95" width="76" height="110.05" fill="#000"/><rect x="519.5" y="858.95" width="74" height="108.05" fill="url(#gg)"/><rect x="595.5" y="932.52" width="75" height="35.48" fill="#000"/><rect x="596.5" y="933.52" width="73" height="33.48" fill="url(#gb)"/></svg>
<div class="a" style="left:725.6px;top:735.6px;width:22.3px;height:34.6px;background:#050505"></div><div class="a" style="left:747.9px;top:735.6px;width:799.7px;height:34.6px;background:linear-gradient(#313131 0,#2a2a2a 52%,#171717 52%,#101010 96%,#222 100%)"></div><div class="a" style="left:747.9px;top:770.2px;width:799.7px;height:32.47px;background:#404040"></div><div class="a" style="left:725.6px;top:770.2px;width:22.3px;height:32.47px;background:linear-gradient(#333,#222)"></div><div class="a" style="left:747.9px;top:802.67px;width:799.7px;height:32.47px;background:#828282"></div><div class="a" style="left:725.6px;top:802.67px;width:22.3px;height:32.47px;background:linear-gradient(#333,#222)"></div><div class="a" style="left:747.9px;top:835.14px;width:799.7px;height:32.47px;background:#404040"></div><div class="a" style="left:725.6px;top:835.14px;width:22.3px;height:32.47px;background:linear-gradient(#333,#222)"></div><div class="a" style="left:747.9px;top:867.61px;width:799.7px;height:32.47px;background:#828282"></div><div class="a" style="left:725.6px;top:867.61px;width:22.3px;height:32.47px;background:linear-gradient(#333,#222)"></div><div class="a" style="left:747.9px;top:900.08px;width:799.7px;height:32.47px;background:#404040"></div><div class="a" style="left:725.6px;top:900.08px;width:22.3px;height:32.47px;background:linear-gradient(#333,#222)"></div><div class="a" style="left:747.9px;top:932.55px;width:799.7px;height:32.47px;background:#828282"></div><div class="a" style="left:725.6px;top:932.55px;width:22.3px;height:32.47px;background:linear-gradient(#333,#222)"></div><svg width="1600" height="1000"><text x="937.5" y="760" font-size="18.6" fill="#f4f4f4" textLength="45.7" lengthAdjust="spacingAndGlyphs">20%</text><text x="1060.7" y="760" font-size="18.6" fill="#f4f4f4" textLength="45.7" lengthAdjust="spacingAndGlyphs">40%</text><text x="1183.9" y="760" font-size="18.6" fill="#f4f4f4" textLength="45.7" lengthAdjust="spacingAndGlyphs">60%</text><text x="1307.5" y="760" font-size="18.6" fill="#f4f4f4" textLength="45.7" lengthAdjust="spacingAndGlyphs">80%</text><text x="1431" y="760" font-size="18.6" fill="#f4f4f4" textLength="59.7" lengthAdjust="spacingAndGlyphs">100%</text><text x="755" y="794.6" font-size="21.5" fill="#f4f4f4" textLength="89.6" lengthAdjust="spacingAndGlyphs">x: CIE31</text><text x="937.5" y="794.6" font-size="21.5" fill="#f4f4f4" textLength="77" lengthAdjust="spacingAndGlyphs">0,3330</text><text x="1060.7" y="794.6" font-size="21.5" fill="#f4f4f4" textLength="77" lengthAdjust="spacingAndGlyphs">0,3548</text><text x="1183.9" y="794.6" font-size="21.5" fill="#f4f4f4" textLength="77" lengthAdjust="spacingAndGlyphs">0,3762</text><text x="1307.5" y="794.6" font-size="21.5" fill="#f4f4f4" textLength="77" lengthAdjust="spacingAndGlyphs">0,3961</text><text x="1431" y="794.6" font-size="21.5" fill="#f4f4f4" textLength="77" lengthAdjust="spacingAndGlyphs">0,4169</text><text x="755" y="827.07" font-size="21.5" fill="#f4f4f4" textLength="89.6" lengthAdjust="spacingAndGlyphs">y: CIE31</text><text x="937.5" y="827.07" font-size="21.5" fill="#f4f4f4" textLength="77" lengthAdjust="spacingAndGlyphs">0,3778</text><text x="1060.7" y="827.07" font-size="21.5" fill="#f4f4f4" textLength="77" lengthAdjust="spacingAndGlyphs">0,4148</text><text x="1183.9" y="827.07" font-size="21.5" fill="#f4f4f4" textLength="77" lengthAdjust="spacingAndGlyphs">0,4513</text><text x="1307.5" y="827.07" font-size="21.5" fill="#f4f4f4" textLength="77" lengthAdjust="spacingAndGlyphs">0,4851</text><text x="1431" y="827.07" font-size="21.5" fill="#f4f4f4" textLength="77" lengthAdjust="spacingAndGlyphs">0,5203</text><text x="755" y="859.54" font-size="21.5" fill="#f4f4f4" textLength="13.4" lengthAdjust="spacingAndGlyphs">Y</text><text x="937.5" y="859.54" font-size="21.5" fill="#f4f4f4" textLength="106.2" lengthAdjust="spacingAndGlyphs">230,9263</text><text x="1060.7" y="859.54" font-size="21.5" fill="#f4f4f4" textLength="106.2" lengthAdjust="spacingAndGlyphs">227,4275</text><text x="1183.9" y="859.54" font-size="21.5" fill="#f4f4f4" textLength="106.2" lengthAdjust="spacingAndGlyphs">224,6113</text><text x="1307.5" y="859.54" font-size="21.5" fill="#f4f4f4" textLength="106.2" lengthAdjust="spacingAndGlyphs">222,3518</text><text x="1431" y="859.54" font-size="21.5" fill="#f4f4f4" textLength="106.2" lengthAdjust="spacingAndGlyphs">220,2739</text><text x="755" y="892.01" font-size="21.5" fill="#f4f4f4" textLength="163.5" lengthAdjust="spacingAndGlyphs">Target x:CIE31</text><text x="937.5" y="892.01" font-size="21.5" fill="#f4f4f4" textLength="77" lengthAdjust="spacingAndGlyphs">0,3344</text><text x="1060.7" y="892.01" font-size="21.5" fill="#f4f4f4" textLength="77" lengthAdjust="spacingAndGlyphs">0,3564</text><text x="1183.9" y="892.01" font-size="21.5" fill="#f4f4f4" textLength="77" lengthAdjust="spacingAndGlyphs">0,3773</text><text x="1307.5" y="892.01" font-size="21.5" fill="#f4f4f4" textLength="77" lengthAdjust="spacingAndGlyphs">0,3969</text><text x="1431" y="892.01" font-size="21.5" fill="#f4f4f4" textLength="77" lengthAdjust="spacingAndGlyphs">0,4193</text><text x="755" y="924.48" font-size="21.5" fill="#f4f4f4" textLength="163.5" lengthAdjust="spacingAndGlyphs">Target y:CIE31</text><text x="937.5" y="924.48" font-size="21.5" fill="#f4f4f4" textLength="77" lengthAdjust="spacingAndGlyphs">0,3648</text><text x="1060.7" y="924.48" font-size="21.5" fill="#f4f4f4" textLength="77" lengthAdjust="spacingAndGlyphs">0,4013</text><text x="1183.9" y="924.48" font-size="21.5" fill="#f4f4f4" textLength="77" lengthAdjust="spacingAndGlyphs">0,4358</text><text x="1307.5" y="924.48" font-size="21.5" fill="#f4f4f4" textLength="77" lengthAdjust="spacingAndGlyphs">0,4682</text><text x="1431" y="924.48" font-size="21.5" fill="#f4f4f4" textLength="77" lengthAdjust="spacingAndGlyphs">0,5053</text><text x="755" y="956.95" font-size="21.5" fill="#f4f4f4" textLength="95" lengthAdjust="spacingAndGlyphs">Target Y</text><text x="937.5" y="956.95" font-size="21.5" fill="#f4f4f4" textLength="106.2" lengthAdjust="spacingAndGlyphs">226,9455</text><text x="1060.7" y="956.95" font-size="21.5" fill="#f4f4f4" textLength="106.2" lengthAdjust="spacingAndGlyphs">222,9619</text><text x="1183.9" y="956.95" font-size="21.5" fill="#f4f4f4" textLength="106.2" lengthAdjust="spacingAndGlyphs">219,9012</text><text x="1307.5" y="956.95" font-size="21.5" fill="#f4f4f4" textLength="106.2" lengthAdjust="spacingAndGlyphs">217,4990</text><text x="1431" y="956.95" font-size="21.5" fill="#f4f4f4" textLength="106.2" lengthAdjust="spacingAndGlyphs">215,1767</text></svg>
<div class="a" style="left:1119px;top:82px;width:791.500px;height:636px;border:8px solid #c4c400;background:#323232"></div><div class="a" style="left:1160.400px;top:116.200px;width:738.600px;height:561.300px;background:#242424"></div><div class="cl" style="left:1162px;top:118px;width:645px;height:558px;clip-path:polygon(151.31px 556.16px,151.27px 556.17px,151.21px 556.19px,151.13px 556.21px,151.05px 556.22px,150.96px 556.24px,150.85px 556.26px,150.74px 556.28px,150.61px 556.29px,150.48px 556.3px,150.34px 556.31px,150.18px 556.31px,149.99px 556.29px,149.79px 556.28px,149.57px 556.27px,149.29px 556.22px,148.94px 556.09px,148.51px 555.89px,148.02px 555.64px,147.44px 555.32px,146.74px 554.89px,145.95px 554.37px,145.06px 553.76px,144.03px 553.05px,142.79px 552.21px,141.38px 551.29px,139.81px 550.27px,138.02px 549.09px,135.94px 547.67px,133.62px 546.16px,131.07px 544.55px,128.19px 542.49px,124.88px 539.65px,120.85px 535.72px,116.24px 530.96px,111.58px 525.85px,107.4px 520.86px,103.96px 516.32px,100.94px 511.91px,97.97px 507.13px,94.66px 501.47px,90.97px 494.94px,87.07px 487.76px,82.95px 479.76px,78.59px 470.79px,73.91px 460.88px,68.94px 450.08px,63.83px 438.28px,58.74px 425.33px,53.64px 411.17px,48.47px 395.89px,43.32px 379.56px,38.27px 362.29px,33.24px 343.85px,28.22px 324.26px,23.41px 304.02px,19.04px 283.61px,15.05px 262.83px,11.35px 241.54px,8.15px 220.28px,5.6px 199.58px,3.68px 179.36px,2.32px 159.41px,1.66px 140.09px,1.83px 121.77px,2.83px 104.31px,4.61px 87.6px,7.19px 72.03px,10.61px 57.99px,14.96px 45.46px,20.19px 34.26px,26.13px 24.6px,32.57px 16.68px,39.6px 10.69px,47.29px 6.49px,55.39px 3.74px,63.66px 2.1px,72.13px 1.79px,80.9px 2.89px,89.81px 4.86px,98.7px 7.19px,107.6px 9.92px,116.58px 13.27px,125.51px 16.98px,134.27px 20.76px,142.83px 24.58px,151.26px 28.59px,159.58px 32.74px,167.82px 37px,175.99px 41.38px,184.05px 45.89px,192.06px 50.51px,200.06px 55.25px,208.05px 60.11px,216px 65.08px,223.94px 70.16px,231.85px 75.31px,239.74px 80.54px,247.6px 85.86px,255.45px 91.25px,263.3px 96.7px,271.14px 102.2px,278.97px 107.76px,286.81px 113.37px,294.65px 119.03px,302.51px 124.72px,310.38px 130.46px,318.24px 136.23px,326.09px 142.02px,333.93px 147.83px,341.75px 153.67px,349.56px 159.51px,357.36px 165.35px,365.16px 171.19px,372.96px 177.03px,380.73px 182.87px,388.45px 188.68px,396.14px 194.48px,403.78px 200.27px,411.39px 206.03px,418.93px 211.75px,426.42px 217.43px,433.86px 223.07px,441.24px 228.67px,448.53px 234.21px,455.75px 239.69px,462.89px 245.11px,469.95px 250.47px,476.9px 255.73px,483.75px 260.91px,490.5px 266.02px,497.13px 271.02px,503.6px 275.92px,509.92px 280.73px,516.11px 285.44px,522.12px 290.02px,527.93px 294.44px,533.5px 298.67px,538.87px 302.74px,544.06px 306.67px,549.09px 310.48px,554px 314.2px,558.76px 317.81px,563.34px 321.28px,567.71px 324.59px,571.87px 327.72px,575.82px 330.69px,579.59px 333.52px,583.17px 336.22px,586.58px 338.8px,589.79px 341.25px,592.84px 343.58px,595.73px 345.78px,598.46px 347.86px,601.02px 349.81px,603.44px 351.65px,605.74px 353.4px,607.92px 355.05px,609.97px 356.58px,611.9px 358.03px,613.74px 359.42px,615.48px 360.74px,617.11px 361.98px,618.66px 363.16px,620.15px 364.3px,621.58px 365.39px,622.95px 366.43px,624.26px 367.43px,625.51px 368.38px,626.69px 369.28px,627.82px 370.14px,628.88px 370.95px,629.9px 371.72px,630.86px 372.44px,631.76px 373.11px,632.61px 373.73px,633.41px 374.33px,634.11px 374.85px,634.73px 375.32px,635.35px 375.8px,636.05px 376.33px,636.9px 376.98px,637.86px 377.71px,638.78px 378.41px,639.56px 379px,640.13px 379.44px,640.58px 379.78px,640.95px 380.07px,641.32px 380.34px,641.66px 380.61px,641.97px 380.84px,642.26px 381.06px,642.55px 381.28px,642.86px 381.52px,643.19px 381.77px,643.48px 381.99px,643.69px 382.15px)"><i style="margin-left:57px;width:27px;background:linear-gradient(90deg,#009c00,#009c00,#009c00)"></i><i style="margin-left:46px;width:51px;background:linear-gradient(90deg,#009c00,#009c00,#009c00,#009c00,#009c00)"></i><i style="margin-left:40px;width:67px;background:linear-gradient(90deg,#009c00,#009c00,#009c00,#009c00,#009c00,#009c00,#009c00)"></i><i style="margin-left:36px;width:80px;background:linear-gradient(90deg,#009c00,#009c00,#009c00,#009c00,#009c00,#009c00,#009c00,#009c00)"></i><i style="margin-left:32px;width:91px;background:linear-gradient(90deg,#009c00,#009c00,#009c00,#009c00,#009c00,#009c00,#009c00,#009c00,#009c00)"></i><i style="margin-left:29px;width:101px;background:linear-gradient(90deg,#009c00,#009c00,#009c00,#009c00,#009c00,#009c00,#009c00,#009c00,#009c00)"></i><i style="margin-left:27px;width:110px;background:linear-gradient(90deg,#009c00,#009c00,#009c00,#009c00,#009c00,#009c00,#009c00,#009c00,#009c00,#009c00)"></i><i style="margin-left:24px;width:120px;background:linear-gradient(90deg,#009c01,#009c00,#009c00,#009c00,#009c00,#009c00,#009c00,#009c00,#009c00,#009c00,#009c00)"></i><i style="margin-left:22px;width:128px;background:linear-gradient(90deg,#009c02,#009c01,#009c00,#009c00,#009c00,#009c00,#009c00,#009c00,#009c00,#009c00,#009c00,#009c00)"></i><i style="margin-left:20px;width:137px;background:linear-gradient(90deg,#009c02,#009c01,#009c00,#009c00,#009c00,#009c00,#009c00,#009c00,#009c00,#009c00,#009c00,#009c00)"></i><i style="margin-left:18px;width:145px;background:linear-gradient(90deg,#009c03,#009c02,#009c01,#009c00,#009c00,#009c00,#009c00,#009c00,#009c00,#009c00,#009c00,#009c00,#009c00)"></i><i style="margin-left:17px;width:151px;background:linear-gradient(90deg,#009c03,#009c02,#009c01,#009c00,#009c00,#009c00,#009c00,#009c00,#009c00,#009c00,#009c00,#009c00,#009c00,#009c00)"></i><i style="margin-left:15px;width:159px;background:linear-gradient(90deg,#009c04,#009c03,#009c02,#009c01,#009c00,#009c00,#009c00,#009c00,#009c00,#009c00,#009c00,#009c00,#009c00,#009c00)"></i><i style="margin-left:14px;width:166px;background:linear-gradient(90deg,#009c05,#009c04,#009c03,#009c01,#009c00,#009c00,#009c00,#009c00,#009c00,#009c00,#009c00,#009c00,#009c00,#009c00,#009c00)"></i><i style="margin-left:13px;width:172px;background:linear-gradient(90deg,#009c05,#009c04,#009c03,#009c02,#009c01,#009c00,#009c00,#009c00,#009c00,#009c00,#009c00,#009c00,#009c00,#009c00,#009c00)"></i><i style="margin-left:12px;width:178px;background:linear-gradient(90deg,#009c06,#009c05,#009c04,#009c03,#009c01,#009c00,#009c00,#009c00,#009c00,#009c00,#009c00,#009c00,#009c00,#009c00,#009c00,#009c00)"></i><i style="margin-left:11px;width:184px;background:linear-gradient(90deg,#009c07,#009c05,#009c04,#009c03,#009c02,#009c01,#009c00,#009c00,#009c00,#009c00,#009c00,#009c00,#009c00,#009c00,#009c00,#009c00)"></i><i style="margin-left:9px;width:191px;background:linear-gradient(90deg,#009c07,#009c06,#009c05,#009c04,#009c03,#009c02,#009c00,#009c00,#009c00,#009c00,#009c00,#009c00,#009c00,#009c00,#009c00,#009c00,#009c00)"></i><i style="margin-left:8px;width:197px;background:linear-gradient(90deg,#009c08,#009c07,#009c06,#009c04,#009c03,#009c02,#009c01,#009c00,#009c00,#009c00,#009c00,#009c00,#009c00,#009c00,#009c00,#009c00,#009c00)"></i><i style="margin-left:8px;width:202px;background:linear-gradient(90deg,#009c09,#009c07,#009c06,#009c05,#009c04,#009c03,#009c02,#009c00,#009c00,#009c00,#009c00,#009c00,#009c00,#009c00,#009c00,#009c00,#009c00,#009c00)"></i><i style="margin-left:7px;width:208px;background:linear-gradient(90deg,#009c09,#009c08,#009c07,#009c06,#009c04,#009c03,#009c02,#009c01,#009c00,#009c00,#009c00,#009c00,#009c00,#009c00,#009c00,#009c00,#009c00,#009c00)"></i><i style="margin-left:6px;width:214px;background:linear-gradient(90deg,#009c0a,#009c09,#009c08,#009c06,#009c05,#009c04,#009c03,#009c02,#009c00,#009c00,#009c00,#009c00,#009c00,#009c00,#009c00,#009c00,#009c00,#009c00,#009c00)"></i><i style="margin-left:5px;width:220px;background:linear-gradient(90deg,#009c0b,#009c09,#009c08,#009c07,#009c06,#009c04,#009c03,#009c02,#009c01,#009c00,#009c00,#009c00,#009c00,#009c00,#009c00,#009c00,#009c00,#009c00,#009c00)"></i><i style="margin-left:5px;width:224px;background:linear-gradient(90deg,#009c0b,#009c0a,#009c09,#009c08,#009c06,#009c05,#009c04,#009c03,#009c02,#009c00,#009c00,#009c00,#009c00,#009c00,#009c00,#009c00,#009c00,#009c00,#009c00,#009c00)"></i><i style="margin-left:4px;width:230px;background:linear-gradient(90deg,#009c0c,#009c0b,#009c0a,#009c08,#009c07,#009c06,#009c04,#009c03,#009c02,#009c01,#009c00,#009c00,#009c00,#009c00,#009c00,#009c00,#009c00,#009c00,#009c00,#009c00)"></i><i style="margin-left:4px;width:234px;background:linear-gradient(90deg,#009c0d,#009c0c,#009c0a,#009c09,#009c08,#009c07,#009c05,#009c04,#009c03,#009c02,#009c00,#009c00,#009c00,#009c00,#009c00,#009c00,#009c00,#009c00,#009c00,#009c00,#009c00)"></i><i style="margin-left:3px;width:240px;background:linear-gradient(90deg,#009c0e,#009c0c,#009c0b,#009c0a,#009c08,#009c07,#009c06,#009c05,#009c03,#009c02,#009c01,#009c00,#009c00,#009c00,#009c00,#009c00,#009c00,#009c00,#009c00,#009c00,#009c00)"></i><i style="margin-left:3px;width:244px;background:linear-gradient(90deg,#009c0e,#009c0d,#009c0c,#009c0a,#009c09,#009c08,#009c06,#009c05,#009c04,#009c02,#009c01,#009c00,#009c00,#009c00,#009c00,#009c00,#009c00,#009c00,#009c00,#009c00,#009c00)"></i><i style="margin-left:2px;width:250px;background:linear-gradient(90deg,#009c0f,#009c0e,#009c0c,#009c0b,#009c0a,#009c09,#009c07,#009c06,#009c05,#009c03,#009c02,#009c01,#009c00,#009c00,#009c00,#009c00,#009c00,#009c00,#009c00,#009c00,#009c00,#009c00)"></i><i style="margin-left:2px;width:254px;background:linear-gradient(90deg,#009c10,#009c0e,#009c0d,#009c0c,#009c0a,#009c09,#009c08,#009c06,#009c05,#009c04,#009c02,#009c01,#009c00,#009c00,#009c00,#009c00,#009c00,#009c00,#009c00,#009c00,#009c00,#009c00)"></i><i style="margin-left:2px;width:258px;background:linear-gradient(90deg,#009c10,#009c0f,#009c0e,#009c0d,#009c0b,#009c0a,#009c09,#009c07,#009c06,#009c05,#009c03,#009c02,#009c01,#009c00,#009c00,#009c00,#009c00,#009c00,#009c00,#009c00,#009c00,#009c00,#009c00)"></i><i style="margin-left:1px;width:264px;background:linear-gradient(90deg,#009c11,#009c10,#009c0f,#009c0d,#009c0c,#009c0b,#009c09,#009c08,#009c07,#009c05,#009c04,#009c02,#009c01,#009c00,#009c00,#009c00,#009c00,#009c00,#009c00,#009c00,#009c00,#009c00,#009c00)"></i><i style="margin-left:1px;width:268px;background:linear-gradient(90deg,#009c12,#009c11,#009c0f,#009c0e,#009c0d,#009c0b,#009c0a,#009c08,#009c07,#009c06,#009c04,#009c03,#009c01,#009c00,#009c00,#009c00,#009c00,#009c00,#009c00,#009c00,#009c00,#009c00,#009c00)"></i><i style="margin-left:1px;width:272px;background:linear-gradient(90deg,#009c13,#009c11,#009c10,#009c0f,#009c0d,#009c0c,#009c0b,#009c09,#009c08,#009c07,#009c05,#009c04,#009c02,#009c01,#009c00,#009c00,#009c00,#009c00,#009c00,#009c00,#009c00,#009c00,#009c00,#009c00)"></i><i style="margin-left:0px;width:278px;background:linear-gradient(90deg,#009c14,#009c12,#009c11,#009c10,#009c0e,#009c0d,#009c0b,#009c0a,#009c09,#009c07,#009c06,#009c04,#009c03,#009c01,#009c00,#009c00,#009c00,#009c00,#009c00,#009c00,#009c00,#009c00,#009c00,#009c00)"></i><i style="margin-left:0px;width:282px;background:linear-gradient(90deg,#009c14,#009c13,#009c12,#009c10,#009c0f,#009c0e,#009c0c,#009c0b,#009c0a,#009c08,#009c07,#009c05,#009c04,#009c03,#009c01,#009c00,#009c00,#009c00,#009c00,#009c00,#009c00,#009c00,#009c00,#009c00,#009c00)"></i><i style="margin-left:0px;width:286px;background:linear-gradient(90deg,#009c15,#009c14,#009c12,#009c11,#009c10,#009c0e,#009c0d,#009c0c,#009c0a,#009c09,#009c07,#009c06,#009c04,#009c03,#009c02,#009c00,#009c00,#009c00,#009c00,#009c00,#009c00,#009c00,#009c00,#009c00,#039c00)"></i><i style="margin-left:0px;width:290px;background:linear-gradient(90deg,#009c16,#009c15,#009c13,#009c12,#009c10,#009c0f,#009c0e,#009c0c,#009c0b,#009c09,#009c08,#009c06,#009c05,#009c03,#009c02,#009c00,#009c00,#009c00,#009c00,#009c00,#009c00,#009c00,#009c00,#009c00,#069c00)"></i><i style="margin-left:0px;width:294px;background:linear-gradient(90deg,#009c17,#009c15,#009c14,#009c13,#009c11,#009c10,#009c0e,#009c0d,#009c0b,#009c0a,#009c08,#009c07,#009c05,#009c04,#009c02,#009c01,#009c00,#009c00,#009c00,#009c00,#009c00,#009c00,#009c00,#029c00,#099c00)"></i><i style="margin-left:0px;width:298px;background:linear-gradient(90deg,#009c17,#009c16,#009c15,#009c14,#009c12,#009c11,#009c0f,#009c0e,#009c0c,#009c0b,#009c0a,#009c08,#009c06,#009c05,#009c03,#009c02,#009c01,#009c00,#009c00,#009c00,#009c00,#009c00,#009c00,#009c00,#059c00,#0d9c00)"></i><i style="margin-left:0px;width:303px;background:linear-gradient(90deg,#009c18,#009c17,#009c16,#009c14,#009c13,#009c11,#009c10,#009c0f,#009c0d,#009c0c,#009c0a,#009c08,#009c07,#009c05,#009c04,#009c02,#009c01,#009c00,#009c00,#009c00,#009c00,#009c00,#009c00,#029c00,#099c00,#119c00)"></i><i style="margin-left:0px;width:307px;background:linear-gradient(90deg,#009c19,#009c18,#009c17,#009c15,#009c14,#009c12,#009c11,#009c10,#009c0e,#009c0d,#009c0b,#009c0a,#009c08,#009c07,#009c05,#009c04,#009c02,#009c01,#009c00,#009c00,#009c00,#009c00,#009c00,#009c00,#059c00,#0c9c00,#159c00)"></i><i style="margin-left:0px;width:311px;background:linear-gradient(90deg,#009c1a,#009c19,#009c17,#009c16,#009c15,#009c13,#009c12,#009c10,#009c0f,#009c0d,#009c0c,#009c0a,#009c09,#009c07,#009c06,#009c04,#009c02,#009c01,#009c00,#009c00,#009c00,#009c00,#009c00,#019c00,#089c00,#109c00,#189c00)"></i><i style="margin-left:0px;width:315px;background:linear-gradient(90deg,#009c1b,#009c1a,#009c18,#009c17,#009c15,#009c14,#009c13,#009c11,#009c10,#009c0e,#009c0c,#009c0b,#009c09,#009c08,#009c06,#009c04,#009c03,#009c01,#009c00,#009c00,#009c00,#009c00,#009c00,#039c00,#0b9c00,#149c00,#1d9c00)"></i><i style="margin-left:0px;width:319px;background:linear-gradient(90deg,#009c1c,#009c1a,#009c19,#009c18,#009c16,#009c15,#009c14,#009c12,#009c11,#009c0f,#009c0e,#009c0c,#009c0b,#009c09,#009c07,#009c06,#009c04,#009c02,#009c01,#009c00,#009c00,#009c00,#009c00,#009c00,#079c00,#0f9c00,#189c00,#219c00)"></i><i style="margin-left:0px;width:323px;background:linear-gradient(90deg,#009c1d,#009c1b,#009c1a,#009c19,#009c17,#009c16,#009c14,#009c13,#009c11,#009c10,#009c0e,#009c0d,#009c0b,#009c09,#009c08,#009c06,#009c05,#009c03,#009c01,#009c00,#009c00,#009c00,#009c00,#039c00,#0a9c00,#139c00,#1c9c00,#259c00)"></i><i style="margin-left:0px;width:327px;background:linear-gradient(90deg,#009c1e,#009c1c,#009c1b,#009c19,#009c18,#009c17,#009c15,#009c14,#009c12,#009c11,#009c0f,#009c0d,#009c0c,#009c0a,#009c08,#009c07,#009c05,#009c03,#009c02,#009c00,#009c00,#009c00,#009c00,#059c00,#0e9c00,#169c00,#209c00,#2a9c00)"></i><i style="margin-left:0px;width:331px;background:linear-gradient(90deg,#009c1f,#009c1d,#009c1c,#009c1b,#009c19,#009c18,#009c16,#009c15,#009c13,#009c12,#009c10,#009c0f,#009c0d,#009c0b,#009c0a,#009c08,#009c06,#009c05,#009c03,#009c01,#009c00,#009c00,#009c00,#029c00,#0a9c00,#129c00,#1b9c00,#259c00,#2f9c00)"></i><i style="margin-left:0px;width:335px;background:linear-gradient(90deg,#009c1f,#009c1e,#009c1d,#009c1b,#009c1a,#009c19,#009c17,#009c16,#009c14,#009c13,#009c11,#009c0f,#009c0e,#009c0c,#009c0a,#009c09,#009c07,#009c05,#009c03,#009c02,#009c00,#009c00,#009c00,#059c00,#0d9c00,#169c00,#1f9c00,#299c00,#349c00)"></i><i style="margin-left:0px;width:339px;background:linear-gradient(90deg,#009c20,#009c1f,#009c1e,#009c1c,#009c1b,#009c19,#009c18,#009c16,#009c15,#009c13,#009c12,#009c10,#009c0e,#009c0d,#009c0b,#009c09,#009c07,#009c06,#009c04,#009c02,#009c00,#009c00,#009c00,#089c00,#109c00,#1a9c00,#249c00,#2e9c00,#399c00)"></i><i style="margin-left:0px;width:343px;background:linear-gradient(90deg,#009c21,#009c20,#009c1f,#009c1d,#009c1c,#009c1b,#009c19,#009c18,#009c16,#009c15,#009c13,#009c11,#009c10,#009c0e,#009c0c,#009c0b,#009c09,#009c07,#009c05,#009c04,#009c02,#009c00,#009c00,#049c00,#0c9c00,#159c00,#1f9c00,#299c00,#349c00,#3f9c00)"></i><i style="margin-left:0px;width:347px;background:linear-gradient(90deg,#009c22,#009c21,#009c20,#009c1e,#009c1d,#009c1b,#009c1a,#009c18,#009c17,#009c15,#009c14,#009c12,#009c10,#009c0f,#009c0d,#009c0b,#009c09,#009c08,#009c06,#009c04,#009c02,#009c01,#009c00,#079c00,#109c00,#199c00,#239c00,#2e9c00,#399c00,#459c00)"></i><i style="margin-left:0px;width:351px;background:linear-gradient(90deg,#009c23,#009c22,#009c21,#009c1f,#009c1e,#009c1c,#009c1b,#009c19,#009c18,#009c16,#009c15,#009c13,#009c11,#009c0f,#009c0e,#009c0c,#009c0a,#009c08,#009c06,#009c04,#009c03,#009c01,#029c00,#0a9c00,#139c00,#1d9c00,#279c00,#329c00,#3e9c00,#4b9c00)"></i><i style="margin-left:0px;width:355px;background:linear-gradient(90deg,#009c24,#009c23,#009c22,#009c20,#009c1f,#009c1e,#009c1c,#009c1b,#009c19,#009c18,#009c16,#009c14,#009c13,#009c11,#009c0f,#009c0d,#009c0c,#009c0a,#009c08,#009c06,#009c04,#009c02,#009c01,#079c00,#0f9c00,#199c00,#239c00,#2d9c00,#389c00,#449c00,#519c00)"></i><i style="margin-left:0px;width:359px;background:linear-gradient(90deg,#009c26,#009c24,#009c23,#009c21,#009c20,#009c1f,#009c1d,#009c1c,#009c1a,#009c18,#009c17,#009c15,#009c13,#009c12,#009c10,#009c0e,#009c0c,#009c0a,#009c09,#009c07,#009c05,#009c03,#029c01,#0a9c00,#139c00,#1c9c00,#279c00,#329c00,#3e9c00,#4a9c00,#579c00)"></i><i style="margin-left:0px;width:363px;background:linear-gradient(90deg,#009c27,#009c25,#009c24,#009c22,#009c21,#009c20,#009c1e,#009c1c,#009c1b,#009c19,#009c18,#009c16,#009c14,#009c12,#009c11,#009c0f,#009c0d,#009c0b,#009c09,#009c07,#009c05,#009c03,#049c01,#0d9c00,#169c00,#219c00,#2c9c00,#379c00,#449c00,#519c00,#5e9c00)"></i><i style="margin-left:0px;width:367px;background:linear-gradient(90deg,#009c28,#009c26,#009c25,#009c24,#009c22,#009c21,#009c1f,#009c1e,#009c1c,#009c1b,#009c19,#009c17,#009c16,#009c14,#009c12,#009c10,#009c0f,#009c0d,#009c0b,#009c09,#009c07,#009c05,#019c03,#099c01,#129c00,#1c9c00,#279c00,#329c00,#3e9c00,#4a9c00,#579c00,#659c00)"></i><i style="margin-left:1px;width:370px;background:linear-gradient(90deg,#009c29,#009c27,#009c26,#009c25,#009c23,#009c22,#009c20,#009c1f,#009c1d,#009c1c,#009c1a,#009c18,#009c16,#009c15,#009c13,#009c11,#009c0f,#009c0d,#009c0b,#009c09,#009c07,#009c05,#049c03,#0d9c01,#169c00,#209c00,#2b9c00,#379c00,#439c00,#519c00,#5e9c00,#6d9c00)"></i><i style="margin-left:1px;width:374px;background:linear-gradient(90deg,#009c2a,#009c28,#009c27,#009c26,#009c24,#009c23,#009c21,#009c20,#009c1e,#009c1c,#009c1b,#009c19,#009c17,#009c16,#009c14,#009c12,#009c10,#009c0e,#009c0c,#009c0a,#009c08,#009c06,#079c04,#109c02,#1a9c00,#259c00,#309c00,#3c9c00,#499c00,#579c00,#659c00,#759c00)"></i><i style="margin-left:1px;width:378px;background:linear-gradient(90deg,#009c2b,#009c2a,#009c28,#009c27,#009c25,#009c24,#009c23,#009c21,#009c1f,#009c1e,#009c1c,#009c1b,#009c19,#009c17,#009c15,#009c14,#009c12,#009c10,#009c0e,#009c0c,#009c0a,#009c08,#049c06,#0c9c04,#169c02,#209c00,#2b9c00,#379c00,#449c00,#519c00,#5f9c00,#6d9c00,#7d9c00)"></i><i style="margin-left:1px;width:382px;background:linear-gradient(90deg,#009c2c,#009c2b,#009c29,#009c28,#009c27,#009c25,#009c24,#009c22,#009c21,#009c1f,#009c1d,#009c1c,#009c1a,#009c18,#009c16,#009c14,#009c13,#009c11,#009c0f,#009c0d,#009c0a,#009c08,#079c06,#109c04,#1a9c02,#259c00,#309c00,#3c9c00,#499c00,#579c00,#669c00,#759c00,#859c00)"></i><i style="margin-left:2px;width:385px;background:linear-gradient(90deg,#009c2d,#009c2c,#009c2a,#009c29,#009c28,#009c26,#009c25,#009c23,#009c21,#009c20,#009c1e,#009c1c,#009c1b,#009c19,#009c17,#009c15,#009c13,#009c11,#009c0f,#009c0d,#009c0b,#019c09,#0a9c07,#139c05,#1e9c02,#299c00,#359c00,#429c00,#509c00,#5e9c00,#6d9c00,#7d9c00,#8e9c00)"></i><i style="margin-left:2px;width:389px;background:linear-gradient(90deg,#009c2e,#009c2d,#009c2c,#009c2a,#009c29,#009c27,#009c26,#009c24,#009c23,#009c21,#009c1f,#009c1d,#009c1c,#009c1a,#009c18,#009c16,#009c14,#009c12,#009c10,#009c0e,#009c0c,#049c0a,#0d9c07,#179c05,#229c03,#2e9c01,#3a9c00,#489c00,#569c00,#659c00,#759c00,#869c00,#989c00)"></i><i style="margin-left:2px;width:393px;background:linear-gradient(90deg,#009c30,#009c2e,#009c2d,#009c2c,#009c2a,#009c29,#009c27,#009c26,#009c24,#009c22,#009c21,#009c1f,#009c1d,#009c1c,#009c1a,#009c18,#009c16,#009c14,#009c12,#009c10,#009c0e,#019c0c,#0a9c09,#139c07,#1e9c05,#299c03,#359c01,#429c00,#509c00,#5f9c00,#6e9c00,#7e9c00,#8f9c00,#9c9700)"></i><i style="margin-left:2px;width:397px;background:linear-gradient(90deg,#009c31,#009c30,#009c2e,#009c2d,#009c2b,#009c2a,#009c28,#009c27,#009c25,#009c24,#009c22,#009c20,#009c1e,#009c1d,#009c1b,#009c19,#009c17,#009c15,#009c13,#009c11,#009c0f,#039c0c,#0d9c0a,#179c08,#229c05,#2e9c03,#3b9c01,#489c00,#569c00,#669c00,#769c00,#879c00,#999c00,#9c8e00)"></i><i style="margin-left:3px;width:400px;background:linear-gradient(90deg,#009c32,#009c31,#009c2f,#009c2e,#009c2c,#009c2b,#009c29,#009c28,#009c26,#009c25,#009c23,#009c21,#009c1f,#009c1e,#009c1c,#009c1a,#009c18,#009c16,#009c14,#009c11,#009c0f,#069c0d,#109c0b,#1b9c08,#279c06,#339c03,#409c01,#4e9c00,#5d9c00,#6d9c00,#7e9c00,#909c00,#9c9600,#9c8500)"></i><i style="margin-left:3px;width:404px;background:linear-gradient(90deg,#009c33,#009c32,#009c31,#009c2f,#009c2e,#009c2c,#009c2b,#009c29,#009c28,#009c26,#009c25,#009c23,#009c21,#009c1f,#009c1d,#009c1c,#009c1a,#009c18,#009c16,#009c13,#009c11,#049c0f,#0d9c0d,#179c0b,#229c08,#2e9c06,#3b9c03,#499c01,#579c00,#679c00,#779c00,#889c00,#9a9c00,#9c8c00,#9c7e00)"></i><i style="margin-left:3px;width:408px;background:linear-gradient(90deg,#009c35,#009c33,#009c32,#009c31,#009c2f,#009c2e,#009c2c,#009c2b,#009c29,#009c27,#009c26,#009c24,#009c22,#009c20,#009c1f,#009c1d,#009c1b,#009c19,#009c17,#009c14,#009c12,#069c10,#109c0e,#1b9c0b,#279c09,#339c06,#419c04,#4f9c01,#5e9c00,#6e9c00,#7f9c00,#919c00,#9c9400,#9c8400,#9c7600)"></i><i style="margin-left:4px;width:411px;background:linear-gradient(90deg,#009c36,#009c35,#009c33,#009c32,#009c30,#009c2f,#009c2d,#009c2c,#009c2a,#009c29,#009c27,#009c25,#009c23,#009c21,#009c20,#009c1e,#009c1c,#009c1a,#009c17,#009c15,#019c13,#099c11,#149c0e,#1f9c0c,#2b9c09,#399c07,#479c04,#559c02,#659c00,#769c00,#889c00,#9b9c00,#9c8b00,#9c7c00,#9c6f00)"></i><i style="margin-left:4px;width:415px;background:linear-gradient(90deg,#009c37,#009c36,#009c35,#009c33,#009c32,#009c30,#009c2f,#009c2d,#009c2c,#009c2a,#009c29,#009c27,#009c25,#009c23,#009c21,#009c20,#009c1e,#009c1c,#009c1a,#009c17,#009c15,#079c13,#109c11,#1b9c0e,#279c0c,#349c09,#429c07,#509c04,#5f9c02,#6f9c00,#819c00,#939c00,#9c9200,#9c8200,#9c7500,#9c6900)"></i><i style="margin-left:4px;width:419px;background:linear-gradient(90deg,#009c39,#009c37,#009c36,#009c35,#009c33,#009c32,#009c30,#009c2f,#009c2d,#009c2c,#009c2a,#009c28,#009c26,#009c25,#009c23,#009c21,#009c1f,#009c1d,#009c1b,#009c18,#019c16,#099c14,#149c11,#1f9c0f,#2c9c0d,#399c0a,#479c07,#569c05,#669c02,#779c00,#899c00,#9c9c00,#9c8a00,#9c7b00,#9c6e00,#9c6300)"></i><i style="margin-left:5px;width:422px;background:linear-gradient(90deg,#009c3a,#009c39,#009c37,#009c36,#009c35,#009c33,#009c32,#009c30,#009c2e,#009c2d,#009c2b,#009c29,#009c28,#009c26,#009c24,#009c22,#009c20,#009c1e,#009c1c,#009c19,#039c17,#0d9c15,#189c12,#249c10,#319c0d,#3f9c0b,#4e9c08,#5d9c05,#6e9c03,#809c00,#939c00,#9c9200,#9c8100,#9c7300,#9c6800,#9c5d00)"></i><i style="margin-left:5px;width:426px;background:linear-gradient(90deg,#009c3b,#009c3a,#009c39,#009c37,#009c36,#009c35,#009c33,#009c32,#009c30,#009c2f,#009c2d,#009c2b,#009c29,#009c28,#009c26,#009c24,#009c22,#009c20,#009c1e,#009c1c,#019c19,#0a9c17,#159c15,#209c12,#2d9c10,#3a9c0d,#489c0b,#589c08,#689c05,#799c02,#8c9c00,#9c9900,#9c8700,#9c7900,#9c6c00,#9c6100,#9c5800)"></i><i style="margin-left:5px;width:430px;background:linear-gradient(90deg,#009c3d,#009c3c,#009c3a,#009c39,#009c38,#009c36,#009c35,#009c33,#009c32,#009c30,#009c2e,#009c2d,#009c2b,#009c29,#009c27,#009c25,#009c23,#009c21,#009c1f,#009c1d,#039c1b,#0d9c18,#189c16,#249c13,#319c11,#409c0e,#4f9c0b,#5e9c09,#6f9c06,#829c03,#959c00,#9c9000,#9c8000,#9c7200,#9c6600,#9c5c00,#9c5300)"></i><i style="margin-left:6px;width:433px;background:linear-gradient(90deg,#009c3e,#009c3d,#009c3c,#009c3a,#009c39,#009c38,#009c36,#009c34,#009c33,#009c31,#009c30,#009c2e,#009c2c,#009c2a,#009c28,#009c26,#009c24,#009c22,#009c20,#009c1e,#069c1c,#119c19,#1c9c17,#299c14,#379c12,#469c0f,#559c0c,#669c09,#789c06,#8b9c03,#9c9901,#9c8700,#9c7800,#9c6b00,#9c6000,#9c5700,#9c4e00)"></i><i style="margin-left:6px;width:437px;background:linear-gradient(90deg,#009c40,#009c3f,#009c3d,#009c3c,#009c3a,#009c39,#009c38,#009c36,#009c34,#009c33,#009c31,#009c2f,#009c2e,#009c2c,#009c2a,#009c28,#009c26,#009c24,#009c21,#009c1f,#099c1d,#149c1a,#209c18,#2e9c15,#3c9c13,#4b9c10,#5c9c0d,#6d9c0a,#809c07,#949c04,#9c9001,#9c7f00,#9c7100,#9c6500,#9c5b00,#9c5200,#9c4a00)"></i><i style="margin-left:7px;width:440px;background:linear-gradient(90deg,#009c41,#009c40,#009c3f,#009c3d,#009c3c,#009c3b,#009c39,#009c38,#009c36,#009c35,#009c33,#009c31,#009c2f,#009c2e,#009c2c,#009c2a,#009c28,#009c26,#009c24,#009c21,#079c1f,#119c1d,#1d9c1a,#2a9c18,#389c15,#479c13,#579c10,#689c0d,#7a9c0a,#8d9c07,#9c9704,#9c8501,#9c7600,#9c6900,#9c5e00,#9c5500,#9c4d00,#9c4600)"></i><i style="margin-left:7px;width:444px;background:linear-gradient(90deg,#009c43,#009c42,#009c40,#009c3f,#009c3e,#009c3c,#009c3b,#009c39,#009c38,#009c36,#009c34,#009c33,#009c31,#009c2f,#009c2d,#009c2b,#009c29,#009c27,#009c25,#009c23,#0a9c20,#159c1e,#219c1c,#2f9c19,#3d9c16,#4d9c14,#5e9c11,#6f9c0e,#829c0b,#979c08,#9c8e04,#9c7d01,#9c6f00,#9c6300,#9c5900,#9c5000,#9c4800,#9c4200)"></i><i style="margin-left:8px;width:447px;background:linear-gradient(90deg,#009c44,#009c43,#009c42,#009c41,#009c3f,#009c3e,#009c3c,#009c3b,#009c39,#009c38,#009c36,#009c34,#009c32,#009c31,#009c2f,#009c2d,#009c2b,#009c29,#009c26,#039c24,#0d9c22,#199c1f,#269c1d,#349c1a,#439c17,#549c15,#659c12,#789c0f,#8c9c0b,#9c9808,#9c8504,#9c7501,#9c6800,#9c5d00,#9c5400,#9c4b00,#9c4400,#9c3e00)"></i><i style="margin-left:8px;width:451px;background:linear-gradient(90deg,#009c46,#009c45,#009c44,#009c42,#009c41,#009c40,#009c3e,#009c3d,#009c3b,#009c3a,#009c38,#009c36,#009c35,#009c33,#009c31,#009c2f,#009c2d,#009c2b,#009c29,#019c27,#0a9c24,#169c22,#239c20,#309c1d,#3f9c1a,#4f9c18,#609c15,#729c12,#859c0f,#9a9c0c,#9c8a07,#9c7a04,#9c6c01,#9c6100,#9c5700,#9c4e00,#9c4700,#9c4000,#9c3a00)"></i><i style="margin-left:9px;width:454px;background:linear-gradient(90deg,#009c48,#009c47,#009c45,#009c44,#009c43,#009c41,#009c40,#009c3e,#009c3d,#009c3b,#009c3a,#009c38,#009c36,#009c34,#009c33,#009c31,#009c2f,#009c2c,#009c2a,#039c28,#0e9c26,#1a9c23,#279c21,#369c1e,#459c1c,#569c19,#689c16,#7a9c13,#8f9c10,#9c940c,#9c8207,#9c7304,#9c6601,#9c5b00,#9c5200,#9c4a00,#9c4300,#9c3c00,#9c3700)"></i><i style="margin-left:9px;width:458px;background:linear-gradient(90deg,#009c4a,#009c48,#009c47,#009c46,#009c44,#009c43,#009c42,#009c40,#009c3f,#009c3d,#009c3b,#009c3a,#009c38,#009c36,#009c34,#009c32,#009c30,#009c2e,#009c2c,#069c2a,#119c27,#1e9c25,#2c9c22,#3b9c20,#4b9c1d,#5c9c1a,#6f9c17,#839c14,#989c11,#9c8b0c,#9c7a08,#9c6c04,#9c6002,#9c5600,#9c4d00,#9c4500,#9c3f00,#9c3900,#9c3300)"></i><i style="margin-left:10px;width:461px;background:linear-gradient(90deg,#009c4b,#009c4a,#009c49,#009c47,#009c46,#009c45,#009c43,#009c42,#009c40,#009c3f,#009c3d,#009c3b,#009c3a,#009c38,#009c36,#009c34,#009c32,#009c30,#009c2d,#099c2b,#159c29,#239c26,#319c24,#419c21,#529c1e,#649c1b,#779c18,#8c9c15,#9c9611,#9c830c,#9c7308,#9c6604,#9c5a02,#9c5100,#9c4900,#9c4100,#9c3b00,#9c3500,#9c3000)"></i><i style="margin-left:10px;width:464px;background:linear-gradient(90deg,#009c4d,#009c4c,#009c4b,#009c49,#009c48,#009c47,#009c45,#009c44,#009c42,#009c41,#009c3f,#009c3e,#009c3c,#009c3a,#009c38,#009c36,#009c34,#009c32,#009c30,#069c2e,#129c2c,#1f9c29,#2d9c27,#3c9c24,#4c9c22,#5e9c1f,#719c1c,#859c19,#9b9c15,#9c8910,#9c780b,#9c6a07,#9c5e04,#9c5402,#9c4c00,#9c4400,#9c3d00,#9c3800,#9c3200,#9c2e00)"></i><i style="margin-left:11px;width:467px;background:linear-gradient(90deg,#009c4f,#009c4e,#009c4c,#009c4b,#009c4a,#009c48,#009c47,#009c46,#009c44,#009c43,#009c41,#009c3f,#009c3e,#009c3c,#009c3a,#009c38,#009c36,#009c34,#009c32,#0a9c30,#169c2d,#239c2b,#329c28,#429c26,#539c23,#669c20,#7a9c1d,#8f9c1a,#9c9315,#9c8010,#9c710b,#9c6408,#9c5905,#9c4f02,#9c4700,#9c4000,#9c3a00,#9c3400,#9c2f00,#9c2b00)"></i><i style="margin-left:11px;width:471px;background:linear-gradient(90deg,#009c51,#009c4f,#009c4e,#009c4d,#009c4c,#009c4a,#009c49,#009c48,#009c46,#009c45,#009c43,#009c41,#009c40,#009c3e,#009c3c,#009c3a,#009c38,#009c36,#029c34,#0d9c32,#1a9c2f,#289c2d,#379c2a,#489c27,#5a9c25,#6d9c22,#829c1f,#989c1b,#9c8a15,#9c7910,#9c6a0b,#9c5e08,#9c5405,#9c4b02,#9c4300,#9c3c00,#9c3600,#9c3100,#9c2c00,#9c2800)"></i><i style="margin-left:12px;width:474px;background:linear-gradient(90deg,#009c52,#009c51,#009c50,#009c4f,#009c4e,#009c4c,#009c4b,#009c4a,#009c48,#009c47,#009c45,#009c44,#009c42,#009c40,#009c3f,#009c3d,#009c3b,#009c39,#009c37,#0b9c34,#179c32,#259c30,#349c2d,#459c2b,#569c28,#699c25,#7d9c22,#939c1f,#9c8f19,#9c7d13,#9c6e0f,#9c610b,#9c5607,#9c4d04,#9c4502,#9c3e00,#9c3800,#9c3300,#9c2e00,#9c2900,#9c2500)"></i><i style="margin-left:12px;width:478px;background:linear-gradient(90deg,#009c54,#009c53,#009c52,#009c51,#009c50,#009c4e,#009c4d,#009c4c,#009c4a,#009c49,#009c47,#009c46,#009c44,#009c42,#009c41,#009c3f,#009c3d,#009c3b,#029c39,#0e9c36,#1b9c34,#2a9c32,#399c2f,#4b9c2d,#5d9c2a,#719c27,#869c24,#9c9b21,#9c8619,#9c7513,#9c670f,#9c5b0b,#9c5107,#9c4905,#9c4102,#9c3a00,#9c3500,#9c2f00,#9c2b00,#9c2700,#9c2300)"></i><i style="margin-left:13px;width:481px;background:linear-gradient(90deg,#009c56,#009c55,#009c54,#009c53,#009c52,#009c50,#009c4f,#009c4e,#009c4c,#009c4b,#009c49,#009c48,#009c46,#009c44,#009c43,#009c41,#009c3f,#009c3d,#069c3b,#129c38,#209c36,#2f9c34,#409c31,#519c2e,#659c2c,#799c29,#909c26,#9c9120,#9c7e19,#9c6e13,#9c610f,#9c560b,#9c4c07,#9c4405,#9c3d02,#9c3701,#9c3100,#9c2c00,#9c2800,#9c2400,#9c2100)"></i><i style="margin-left:13px;width:485px;background:linear-gradient(90deg,#009c58,#009c57,#009c56,#009c55,#009c54,#009c53,#009c51,#009c50,#009c4e,#009c4d,#009c4b,#009c4a,#009c48,#009c47,#009c45,#009c43,#009c41,#009c3f,#099c3d,#169c3b,#249c38,#349c36,#459c33,#589c30,#6c9c2e,#829c2b,#999c27,#9c8820,#9c7619,#9c6713,#9c5b0f,#9c510b,#9c4808,#9c4005,#9c3903,#9c3301,#9c2e00,#9c2a00,#9c2500,#9c2200,#9c1e00)"></i><i style="margin-left:14px;width:488px;background:linear-gradient(90deg,#009c5b,#009c59,#009c58,#009c57,#009c56,#009c55,#009c54,#009c52,#009c51,#009c4f,#009c4e,#009c4c,#009c4b,#009c49,#009c48,#009c46,#009c44,#009c42,#079c40,#139c3e,#229c3b,#319c39,#429c37,#559c34,#689c31,#7e9c2e,#959c2b,#9c8d24,#9c7a1d,#9c6a17,#9c5e12,#9c530e,#9c4a0a,#9c4207,#9c3b05,#9c3503,#9c3001,#9c2b00,#9c2700,#9c2300,#9c1f00,#9c1c00)"></i><i style="margin-left:15px;width:491px;background:linear-gradient(90deg,#009c5d,#009c5c,#009c5a,#009c59,#009c58,#009c57,#009c56,#009c54,#009c53,#009c52,#009c50,#009c4f,#009c4d,#009c4b,#009c4a,#009c48,#009c46,#009c44,#0a9c42,#189c40,#279c3e,#379c3b,#499c39,#5c9c36,#719c33,#879c31,#9c992d,#9c8324,#9c721c,#9c6417,#9c5812,#9c4e0e,#9c450a,#9c3e07,#9c3705,#9c3203,#9c2d01,#9c2800,#9c2400,#9c2000,#9c1d00,#9c1a00)"></i><i style="margin-left:15px;width:495px;background:linear-gradient(90deg,#009c5f,#009c5e,#009c5d,#009c5c,#009c5a,#009c59,#009c58,#009c57,#009c55,#009c54,#009c53,#009c51,#009c50,#009c4e,#009c4c,#009c4a,#009c49,#019c47,#0e9c45,#1c9c42,#2b9c40,#3d9c3e,#4f9c3b,#639c39,#799c36,#919c33,#9c8f2c,#9c7b23,#9c6b1c,#9c5e16,#9c5312,#9c490e,#9c410a,#9c3a07,#9c3405,#9c2e03,#9c2a01,#9c2500,#9c2200,#9c1e00,#9c1b00,#9c1800)"></i><i style="margin-left:16px;width:498px;background:linear-gradient(90deg,#009c61,#009c60,#009c5f,#009c5e,#009c5d,#009c5c,#009c5a,#009c59,#009c58,#009c57,#009c55,#009c54,#009c52,#009c51,#009c4f,#009c4d,#009c4c,#009c4a,#0c9c48,#1a9c46,#299c44,#3a9c41,#4c9c3f,#609c3c,#759c3a,#8c9c37,#9c9331,#9c7f28,#9c6e20,#9c601a,#9c5515,#9c4b10,#9c430d,#9c3c0a,#9c3507,#9c3005,#9c2b03,#9c2601,#9c2200,#9c1f00,#9c1c00,#9c1900,#9c1600)"></i><i style="margin-left:16px;width:502px;background:linear-gradient(90deg,#009c63,#009c62,#009c61,#009c60,#009c5f,#009c5e,#009c5d,#009c5c,#009c5a,#009c59,#009c58,#009c56,#009c55,#009c53,#009c52,#009c50,#009c4e,#029c4c,#0f9c4a,#1e9c48,#2e9c46,#3f9c44,#539c42,#679c3f,#7e9c3c,#969c3a,#9c8a30,#9c7727,#9c6720,#9c5b1a,#9c5015,#9c4710,#9c3f0d,#9c380a,#9c3207,#9c2d05,#9c2803,#9c2401,#9c2000,#9c1d00,#9c1a00,#9c1700,#9c1400)"></i><i style="margin-left:17px;width:505px;background:linear-gradient(90deg,#009c66,#009c65,#009c64,#009c63,#009c62,#009c61,#009c5f,#009c5e,#009c5d,#009c5c,#009c5a,#009c59,#009c57,#009c56,#009c54,#009c53,#009c51,#069c4f,#139c4d,#239c4b,#349c49,#469c47,#5a9c44,#709c42,#889c3f,#9c973a,#9c812f,#9c6f26,#9c611f,#9c5519,#9c4b15,#9c4210,#9c3b0d,#9c340a,#9c2f07,#9c2a05,#9c2503,#9c2101,#9c1e00,#9c1a00,#9c1800,#9c1500,#9c1300)"></i><i style="margin-left:17px;width:509px;background:linear-gradient(90deg,#009c68,#009c67,#009c66,#009c65,#009c64,#009c63,#009c62,#009c61,#009c60,#009c5e,#009c5d,#009c5c,#009c5a,#009c59,#009c57,#009c55,#009c54,#099c52,#179c50,#279c4e,#399c4c,#4c9c4a,#629c47,#789c45,#919c42,#9c8d39,#9c792f,#9c6826,#9c5b1f,#9c5019,#9c4615,#9c3e10,#9c370d,#9c310a,#9c2c07,#9c2705,#9c2303,#9c1f01,#9c1b00,#9c1800,#9c1600,#9c1300,#9c1100)"></i><i style="margin-left:18px;width:512px;background:linear-gradient(90deg,#009c6a,#009c6a,#009c69,#009c68,#009c67,#009c66,#009c65,#009c64,#009c62,#009c61,#009c60,#009c5f,#009c5d,#009c5c,#009c5a,#009c59,#009c57,#079c56,#159c54,#259c52,#379c50,#4a9c4e,#5e9c4b,#759c49,#8d9c46,#9c913f,#9c7c33,#9c6b2a,#9c5d23,#9c511d,#9c4818,#9c3f13,#9c380f,#9c320c,#9c2d09,#9c2807,#9c2305,#9c2003,#9c1c01,#9c1900,#9c1600,#9c1400,#9c1100,#9c0f00)"></i><i style="margin-left:19px;width:515px;background:linear-gradient(90deg,#009c6d,#009c6c,#009c6b,#009c6a,#009c69,#009c68,#009c67,#009c66,#009c65,#009c64,#009c63,#009c62,#009c60,#009c5f,#009c5d,#009c5c,#009c5a,#0b9c59,#1a9c57,#2b9c55,#3d9c53,#519c51,#679c4f,#7f9c4c,#989c4a,#9c873d,#9c7432,#9c642a,#9c5722,#9c4c1c,#9c4317,#9c3b13,#9c350f,#9c2f0c,#9c2a09,#9c2507,#9c2105,#9c1d03,#9c1a02,#9c1700,#9c1400,#9c1200,#9c1000,#9c0e00)"></i><i style="margin-left:19px;width:519px;background:linear-gradient(90deg,#009c70,#009c6f,#009c6e,#009c6d,#009c6c,#009c6b,#009c6a,#009c69,#009c68,#009c67,#009c66,#009c65,#009c63,#009c62,#009c60,#009c5f,#019c5d,#0e9c5c,#1e9c5a,#309c58,#439c56,#589c54,#6f9c52,#889c50,#9c954a,#9c7e3c,#9c6c32,#9c5e29,#9c5222,#9c471c,#9c3f17,#9c3813,#9c310f,#9c2c0c,#9c270a,#9c2207,#9c1e05,#9c1b03,#9c1802,#9c1500,#9c1300,#9c1000,#9c0e00,#9c0c00)"></i><i style="margin-left:20px;width:522px;background:linear-gradient(90deg,#009c72,#009c71,#009c71,#009c70,#009c6f,#009c6e,#009c6d,#009c6c,#009c6b,#009c6a,#009c69,#009c68,#009c67,#009c65,#009c64,#009c63,#009c61,#0d9c60,#1c9c5e,#2e9c5c,#419c5b,#559c59,#6c9c57,#859c54,#9c9950,#9c8142,#9c6f36,#9c602d,#9c5326,#9c4920,#9c401a,#9c3916,#9c3212,#9c2c0f,#9c270c,#9c2309,#9c1f07,#9c1c05,#9c1803,#9c1602,#9c1300,#9c1100,#9c0e00,#9c0d00,#9c0b00)"></i><i style="margin-left:21px;width:525px;background:linear-gradient(90deg,#009c75,#009c74,#009c73,#009c73,#009c72,#009c71,#009c70,#009c6f,#009c6e,#009c6d,#009c6c,#009c6b,#009c6a,#009c69,#009c67,#009c66,#039c65,#119c63,#229c62,#349c60,#489c5e,#5e9c5c,#759c5a,#8f9c58,#9c8e4e,#9c7840,#9c6735,#9c592c,#9c4e25,#9c441f,#9c3c1a,#9c3516,#9c2f12,#9c290f,#9c250c,#9c2009,#9c1d07,#9c1905,#9c1603,#9c1402,#9c1100,#9c0f00,#9c0d00,#9c0b00,#9c0900)"></i><i style="margin-left:21px;width:529px;background:linear-gradient(90deg,#009c78,#009c77,#009c76,#009c76,#009c75,#009c74,#009c73,#009c72,#009c71,#009c70,#009c6f,#009c6e,#009c6d,#009c6c,#009c6b,#009c6a,#069c68,#159c67,#269c65,#399c64,#4e9c62,#659c60,#7e9c5e,#9a9c5c,#9c854c,#9c713f,#9c6135,#9c542c,#9c4925,#9c401f,#9c381a,#9c3116,#9c2c12,#9c260f,#9c220c,#9c1e09,#9c1a07,#9c1705,#9c1403,#9c1202,#9c1001,#9c0d00,#9c0b00,#9c0a00,#9c0800)"></i><i style="margin-left:22px;width:532px;background:linear-gradient(90deg,#009c7b,#009c7a,#009c79,#009c79,#009c78,#009c77,#009c76,#009c76,#009c75,#009c74,#009c73,#009c72,#009c71,#009c70,#009c6f,#009c6d,#0a9c6c,#1a9c6b,#2c9c69,#409c68,#569c66,#6e9c64,#899c62,#9c935b,#9c7b4a,#9c693e,#9c5a34,#9c4e2b,#9c4424,#9c3b1f,#9c341a,#9c2e15,#9c2812,#9c240f,#9c1f0c,#9c1c09,#9c1807,#9c1505,#9c1303,#9c1002,#9c0e01,#9c0c00,#9c0a00,#9c0800,#9c0700)"></i><i style="margin-left:23px;width:535px;background:linear-gradient(90deg,#009c7e,#009c7d,#009c7c,#009c7c,#009c7b,#009c7a,#009c7a,#009c79,#009c78,#009c77,#009c77,#009c76,#009c75,#009c74,#009c73,#009c71,#099c70,#189c6f,#2a9c6e,#3e9c6c,#549c6b,#6c9c69,#869c68,#9c9662,#9c7e50,#9c6b43,#9c5c38,#9c4f2f,#9c4528,#9c3c22,#9c351d,#9c2f18,#9c2914,#9c2411,#9c200e,#9c1c0b,#9c1909,#9c1607,#9c1305,#9c1003,#9c0e02,#9c0c01,#9c0a00,#9c0900,#9c0700,#9c0600)"></i><i style="margin-left:24px;width:538px;background:linear-gradient(90deg,#009c81,#009c80,#009c80,#009c7f,#009c7e,#009c7e,#009c7d,#009c7c,#009c7c,#009c7b,#009c7a,#009c79,#009c78,#009c77,#009c77,#009c75,#0d9c74,#1e9c73,#309c72,#459c71,#5c9c6f,#769c6e,#919c6c,#9c8b5f,#9c754e,#9c6341,#9c5537,#9c4a2e,#9c4027,#9c3821,#9c311c,#9c2b18,#9c2614,#9c2111,#9c1d0e,#9c1a0b,#9c1709,#9c1407,#9c1105,#9c0f03,#9c0d02,#9c0b01,#9c0900,#9c0700,#9c0600,#9c0400)"></i><i style="margin-left:24px;width:541px;background:linear-gradient(90deg,#009c84,#009c83,#009c83,#009c82,#009c82,#009c81,#009c81,#009c80,#009c7f,#009c7f,#009c7e,#009c7d,#009c7c,#009c7c,#009c7b,#019c7a,#109c79,#229c78,#359c77,#4b9c75,#639c74,#7e9c73,#9b9c71,#9c835d,#9c6e4d,#9c5e41,#9c5037,#9c462e,#9c3c27,#9c3521,#9c2e1c,#9c2918,#9c2414,#9c1f11,#9c1b0e,#9c180b,#9c1509,#9c1207,#9c1005,#9c0d04,#9c0b02,#9c0901,#9c0800,#9c0600,#9c0500,#9c0300)"></i><i style="margin-left:25px;width:544px;background:linear-gradient(90deg,#009c87,#009c87,#009c86,#009c86,#009c85,#009c85,#009c84,#009c84,#009c83,#009c82,#009c82,#009c81,#009c80,#009c80,#009c7f,#059c7e,#159c7d,#279c7c,#3c9c7b,#539c7a,#6d9c79,#899c78,#9c916e,#9c795b,#9c664b,#9c573f,#9c4b36,#9c412e,#9c3827,#9c3121,#9c2b1c,#9c2518,#9c2114,#9c1d11,#9c190e,#9c160b,#9c1309,#9c1007,#9c0e05,#9c0c04,#9c0a02,#9c0801,#9c0600,#9c0500,#9c0400,#9c0200)"></i><i style="margin-left:26px;width:547px;background:linear-gradient(90deg,#009c8a,#009c8a,#009c8a,#009c89,#009c89,#009c88,#009c88,#009c88,#009c87,#009c87,#009c86,#009c86,#009c85,#009c84,#009c84,#049c83,#139c82,#269c81,#3b9c81,#529c80,#6b9c7f,#879c7e,#9c9476,#9c7b61,#9c6751,#9c5844,#9c4c3a,#9c4131,#9c392a,#9c3224,#9c2b1f,#9c261a,#9c2116,#9c1d13,#9c1910,#9c160d,#9c130b,#9c1009,#9c0e07,#9c0c05,#9c0a04,#9c0802,#9c0701,#9c0500,#9c0400,#9c0300,#9c0100)"></i><i style="margin-left:26px;width:551px;background:linear-gradient(90deg,#009c8e,#009c8d,#009c8d,#009c8d,#009c8d,#009c8c,#009c8c,#009c8c,#009c8b,#009c8b,#009c8a,#009c8a,#009c89,#009c89,#009c88,#079c88,#189c87,#2b9c87,#419c86,#599c85,#749c84,#919c83,#9c8a73,#9c725f,#9c614f,#9c5243,#9c4739,#9c3d31,#9c352a,#9c2e24,#9c281f,#9c231a,#9c1f16,#9c1b13,#9c1710,#9c140d,#9c110b,#9c0f09,#9c0c07,#9c0a05,#9c0904,#9c0702,#9c0501,#9c0400,#9c0300,#9c0200,#9c0100)"></i><i style="margin-left:27px;width:554px;background:linear-gradient(90deg,#009c91,#009c91,#009c91,#009c91,#009c90,#009c90,#009c90,#009c90,#009c8f,#009c8f,#009c8f,#009c8e,#009c8e,#009c8e,#009c8d,#0b9c8d,#1d9c8c,#329c8c,#499c8b,#629c8b,#7e9c8a,#9c9b88,#9c7f6f,#9c6a5c,#9c5a4e,#9c4c42,#9c4238,#9c3930,#9c3129,#9c2b23,#9c251e,#9c201a,#9c1c16,#9c1813,#9c1510,#9c120d,#9c0f0b,#9c0d09,#9c0b07,#9c0905,#9c0704,#9c0602,#9c0401,#9c0300,#9c0200,#9c0100,#9c0000)"></i><i style="margin-left:28px;width:557px;background:linear-gradient(90deg,#009c95,#009c95,#009c95,#009c95,#009c94,#009c94,#009c94,#009c94,#009c94,#009c94,#009c93,#009c93,#009c93,#009c93,#009c92,#109c92,#239c92,#399c92,#519c91,#6c9c91,#8a9c90,#9c8f84,#9c766c,#9c625a,#9c534c,#9c4740,#9c3d37,#9c342f,#9c2d29,#9c2723,#9c221e,#9c1e1a,#9c1a16,#9c1613,#9c1310,#9c100d,#9c0e0b,#9c0b09,#9c0907,#9c0705,#9c0604,#9c0403,#9c0301,#9c0200,#9c0100,#9c0000,#9c0000)"></i><i style="margin-left:29px;width:560px;background:linear-gradient(90deg,#009c99,#009c99,#009c99,#009c99,#009c99,#009c98,#009c98,#009c98,#009c98,#009c98,#009c98,#009c98,#009c98,#009c98,#009c98,#0f9c98,#229c98,#379c98,#509c97,#6a9c97,#889c97,#9c908c,#9c7773,#9c6360,#9c5451,#9c4745,#9c3d3b,#9c3533,#9c2e2c,#9c2826,#9c2221,#9c1e1c,#9c1a18,#9c1615,#9c1312,#9c100f,#9c0e0d,#9c0b0b,#9c0909,#9c0807,#9c0605,#9c0404,#9c0302,#9c0201,#9c0100,#9c0000,#9c0000,#9c0000)"></i><i style="margin-left:29px;width:564px;background:linear-gradient(90deg,#009c9c,#009c9c,#009b9c,#009b9c,#009b9c,#009b9c,#009b9c,#009b9c,#009b9c,#009b9c,#009b9c,#009b9c,#009b9c,#009b9c,#029b9c,#129b9c,#269a9c,#3d9a9c,#569a9c,#729a9c,#919a9c,#9c8688,#9c6f70,#9c5c5e,#9c4e50,#9c4344,#9c393a,#9c3132,#9c2a2b,#9c2526,#9c2021,#9c1b1c,#9c1718,#9c1415,#9c1112,#9c0e0f,#9c0c0d,#9c0a0b,#9c0809,#9c0607,#9c0505,#9c0304,#9c0203,#9c0101,#9c0000,#9c0000,#9c0000,#9c0000)"></i><i style="margin-left:30px;width:567px;background:linear-gradient(90deg,#00989c,#00989c,#00979c,#00979c,#00979c,#00979c,#00979c,#00979c,#00969c,#00969c,#00969c,#00969c,#00959c,#00959c,#05959c,#17959c,#2b949c,#42949c,#5b949c,#77939c,#97939c,#9c7c84,#9c666d,#9c555c,#9c484e,#9c3e43,#9c3539,#9c2d32,#9c272b,#9c2225,#9c1d20,#9c191c,#9c1518,#9c1215,#9c0f12,#9c0d0f,#9c0a0d,#9c080b,#9c0709,#9c0507,#9c0305,#9c0204,#9c0103,#9c0002,#9c0000,#9c0000,#9c0000,#9c0000)"></i><i style="margin-left:31px;width:570px;background:linear-gradient(90deg,#00949c,#00949c,#00939c,#00939c,#00939c,#00939c,#00929c,#00929c,#00929c,#00919c,#00919c,#00919c,#00909c,#00909c,#04909c,#158f9c,#298f9c,#3e8e9c,#578e9c,#718d9c,#8f8c9c,#9c7c8b,#9c6773,#9c5661,#9c4953,#9c3e47,#9c353d,#9c2d35,#9c272e,#9c2228,#9c1d23,#9c191e,#9c151a,#9c1217,#9c0f14,#9c0d11,#9c0a0f,#9c080c,#9c070a,#9c0508,#9c0307,#9c0205,#9c0104,#9c0003,#9c0001,#9c0001,#9c0000,#9c0000,#9c0000)"></i><i style="margin-left:32px;width:573px;background:linear-gradient(90deg,#00909c,#00909c,#008f9c,#008f9c,#008f9c,#008e9c,#008e9c,#008e9c,#008d9c,#008d9c,#008c9c,#008c9c,#008b9c,#008b9c,#088a9c,#198a9c,#2d899c,#43889c,#5c879c,#77879c,#94869c,#9c7287,#9c5f70,#9c4f5f,#9c4351,#9c3946,#9c313c,#9c2a34,#9c242d,#9c1f28,#9c1a23,#9c161e,#9c131a,#9c1017,#9c0d14,#9c0b11,#9c090f,#9c070c,#9c050a,#9c0408,#9c0207,#9c0105,#9c0004,#9c0003,#9c0002,#9c0001,#9c0000,#9c0000,#9c0000)"></i><i style="margin-left:33px;width:576px;background:linear-gradient(90deg,#008c9c,#008c9c,#008c9c,#008b9c,#008b9c,#008a9c,#008a9c,#00899c,#00899c,#00889c,#00889c,#00879c,#00869c,#00869c,#0c859c,#1e849c,#32839c,#48829c,#61819c,#7c809c,#9a7f9c,#9c6982,#9c576d,#9c495d,#9c3e4f,#9c3544,#9c2d3b,#9c2633,#9c212d,#9c1c27,#9c1822,#9c141e,#9c111a,#9c0e17,#9c0c14,#9c0911,#9c070f,#9c060c,#9c040a,#9c0308,#9c0107,#9c0005,#9c0004,#9c0003,#9c0002,#9c0001,#9c0000,#9c0000,#9c0000)"></i><i style="margin-left:34px;width:579px;background:linear-gradient(90deg,#00899c,#00889c,#00889c,#00879c,#00879c,#00869c,#00869c,#00859c,#00849c,#00849c,#00839c,#00829c,#00819c,#01819c,#10809c,#227f9c,#367e9c,#4d7d9c,#667c9c,#817a9c,#9c7799,#9c617f,#9c506a,#9c435b,#9c394e,#9c3043,#9c293a,#9c2333,#9c1e2c,#9c1927,#9c1522,#9c121e,#9c0f1a,#9c0c17,#9c0a14,#9c0811,#9c060e,#9c040c,#9c030a,#9c0109,#9c0007,#9c0005,#9c0004,#9c0003,#9c0002,#9c0001,#9c0000,#9c0000,#9c0000)"></i><i style="margin-left:34px;width:583px;background:linear-gradient(90deg,#00859c,#00859c,#00849c,#00849c,#00839c,#00829c,#00829c,#00819c,#00809c,#00809c,#007f9c,#007e9c,#007d9c,#007c9c,#0e7b9c,#1f7a9c,#33799c,#48789c,#60769c,#7a759c,#96739c,#9c6286,#9c5171,#9c4460,#9c3953,#9c3147,#9c293e,#9c2336,#9c1e30,#9c192a,#9c1525,#9c1220,#9c0f1c,#9c0c19,#9c0a16,#9c0813,#9c0610,#9c040e,#9c030c,#9c010a,#9c0008,#9c0007,#9c0005,#9c0004,#9c0003,#9c0002,#9c0001,#9c0000,#9c0000,#9c0000)"></i><i style="margin-left:35px;width:586px;background:linear-gradient(90deg,#00829c,#00819c,#00819c,#00809c,#007f9c,#007e9c,#007e9c,#007d9c,#007c9c,#007b9c,#007a9c,#00799c,#00789c,#03779c,#12769c,#23759c,#37749c,#4d729c,#65719c,#7f6f9c,#9b6e9c,#9c5a82,#9c4b6e,#9c3e5e,#9c3551,#9c2c46,#9c263d,#9c2035,#9c1b2f,#9c1729,#9c1324,#9c1020,#9c0d1c,#9c0b19,#9c0815,#9c0613,#9c0510,#9c030e,#9c020c,#9c000a,#9c0008,#9c0007,#9c0005,#9c0004,#9c0003,#9c0002,#9c0001,#9c0000,#9c0000,#9c0000)"></i><i style="margin-left:36px;width:589px;background:linear-gradient(90deg,#007e9c,#007e9c,#007d9c,#007c9c,#007b9c,#007b9c,#007a9c,#00799c,#00789c,#00779c,#00769c,#00759c,#00749c,#06739c,#15719c,#27709c,#3b6f9c,#516d9c,#696b9c,#846a9c,#9c6598,#9c537f,#9c446b,#9c395c,#9c304f,#9c2945,#9c223c,#9c1d35,#9c182e,#9c1429,#9c1124,#9c0e20,#9c0b1c,#9c0918,#9c0715,#9c0513,#9c0310,#9c020e,#9c010c,#9c000a,#9c0008,#9c0007,#9c0005,#9c0004,#9c0003,#9c0002,#9c0001,#9c0000,#9c0000,#9c0000)"></i><i style="margin-left:37px;width:592px;background:linear-gradient(90deg,#007b9c,#007a9c,#00799c,#00799c,#00789c,#00779c,#00769c,#00759c,#00749c,#00739c,#00729c,#00719c,#006f9c,#096e9c,#196d9c,#2b6b9c,#406a9c,#56689c,#6e669c,#89649c,#9c5c93,#9c4c7b,#9c3f69,#9c345a,#9c2c4e,#9c2544,#9c1f3b,#9c1a34,#9c162e,#9c1228,#9c0f24,#9c0c1f,#9c091c,#9c0718,#9c0515,#9c0413,#9c0210,#9c010e,#9c000c,#9c000a,#9c0008,#9c0007,#9c0005,#9c0004,#9c0003,#9c0002,#9c0001,#9c0000,#9c0000,#9c0000)"></i><i style="margin-left:38px;width:595px;background:linear-gradient(90deg,#00789c,#00779c,#00769c,#00759c,#00749c,#00739c,#00729c,#00719c,#00709c,#006f9c,#006e9c,#006d9c,#006b9c,#096a9c,#18689c,#2a679c,#3d659c,#52639c,#6a629c,#83609c,#9c5c9a,#9c4b81,#9c3e6e,#9c345f,#9c2c52,#9c2547,#9c1f3f,#9c1a37,#9c1631,#9c122b,#9c0f26,#9c0c22,#9c091e,#9c071a,#9c0517,#9c0314,#9c0212,#9c0110,#9c000d,#9c000b,#9c000a,#9c0008,#9c0007,#9c0005,#9c0004,#9c0003,#9c0002,#9c0001,#9c0000,#9c0000,#9c0000)"></i><i style="margin-left:39px;width:598px;background:linear-gradient(90deg,#00749c,#00739c,#00739c,#00729c,#00719c,#00709c,#006f9c,#006d9c,#006c9c,#006b9c,#006a9c,#00689c,#00679c,#0c659c,#1c649c,#2e629c,#41609c,#575e9c,#6e5c9c,#885a9c,#9c5495,#9c457e,#9c396b,#9c305d,#9c2850,#9c2146,#9c1c3e,#9c1736,#9c1330,#9c102b,#9c0d26,#9c0a21,#9c081e,#9c061a,#9c0417,#9c0214,#9c0112,#9c000f,#9c000d,#9c000c,#9c000a,#9c0008,#9c0007,#9c0005,#9c0004,#9c0003,#9c0002,#9c0001,#9c0000,#9c0000,#9c0000)"></i><i style="margin-left:39px;width:602px;background:linear-gradient(90deg,#00719c,#00709c,#006f9c,#006e9c,#006d9c,#006c9c,#006b9c,#006a9c,#00699c,#00679c,#00669c,#00649c,#01639c,#0f619c,#1f609c,#305e9c,#445c9c,#5a5a9c,#71589c,#8b559c,#9c4e92,#9c407c,#9c346a,#9c2c5b,#9c2450,#9c1e46,#9c193d,#9c1536,#9c1130,#9c0e2a,#9c0b25,#9c0821,#9c061d,#9c041a,#9c0217,#9c0114,#9c0012,#9c0010,#9c000d,#9c000c,#9c000a,#9c0008,#9c0007,#9c0005,#9c0004,#9c0003,#9c0002,#9c0001,#9c0000,#9c0000,#9c0000)"></i><i style="margin-left:40px;width:605px;background:linear-gradient(90deg,#006e9c,#006d9c,#006c9c,#006b9c,#006a9c,#00699c,#00679c,#00669c,#00659c,#00639c,#00629c,#00609c,#045f9c,#125d9c,#225b9c,#34599c,#48579c,#5e559c,#76539c,#8f509c,#9c478e,#9c3a79,#9c3068,#9c285a,#9c214e,#9c1b45,#9c163c,#9c1235,#9c0f2f,#9c0c2a,#9c0925,#9c0721,#9c051d,#9c031a,#9c0117,#9c0014,#9c0012,#9c000f,#9c000d,#9c000c,#9c000a,#9c0008,#9c0007,#9c0005,#9c0004,#9c0003,#9c0002,#9c0001,#9c0000,#9c0000,#9c0000)"></i><i style="margin-left:41px;width:604px;background:linear-gradient(90deg,#006b9c,#006a9c,#00699c,#00689c,#00669c,#00659c,#00649c,#00639c,#00619c,#00609c,#005e9c,#005d9c,#065b9c,#14599c,#24579c,#36559c,#4a539c,#60519c,#774e9c,#904c9c,#9c428d,#9c3678,#9c2d68,#9c255a,#9c1e4f,#9c1945,#9c143d,#9c1036,#9c0d30,#9c0a2a,#9c0826,#9c0522,#9c041e,#9c021a,#9c0017,#9c0015,#9c0012,#9c0010,#9c000e,#9c000c,#9c000a,#9c0009,#9c0007,#9c0006,#9c0005,#9c0004,#9c0002,#9c0002,#9c0001,#9c0000,#9c0000)"></i><i style="margin-left:42px;width:599px;background:linear-gradient(90deg,#00689c,#00679c,#00669c,#00649c,#00639c,#00629c,#00619c,#005f9c,#005e9c,#005c9c,#005b9c,#00599c,#07579c,#15559c,#25539c,#36519c,#4a4f9c,#5f4d9c,#764a9c,#8e489c,#9c4090,#9c347b,#9c2b6a,#9c235c,#9c1d51,#9c1847,#9c133f,#9c0f38,#9c0c31,#9c092c,#9c0727,#9c0523,#9c031f,#9c011c,#9c0019,#9c0016,#9c0013,#9c0011,#9c000f,#9c000d,#9c000b,#9c000a,#9c0008,#9c0007,#9c0005,#9c0004,#9c0003,#9c0002,#9c0001,#9c0000,#9c0000)"></i><i style="margin-left:43px;width:589px;background:linear-gradient(90deg,#00659c,#00649c,#00629c,#00619c,#00609c,#005f9c,#005d9c,#005c9c,#005a9c,#00599c,#00579c,#00559c,#09539c,#18519c,#284f9c,#3a4d9c,#4d4b9c,#62489c,#79469c,#92439c,#9c3a8d,#9c2f79,#9c2768,#9c205b,#9c1a50,#9c1546,#9c113e,#9c0d37,#9c0a31,#9c082c,#9c0527,#9c0323,#9c021f,#9c001c,#9c0019,#9c0016,#9c0013,#9c0011,#9c000f,#9c000d,#9c000b,#9c000a,#9c0008,#9c0007,#9c0006,#9c0004,#9c0003,#9c0002,#9c0001,#9c0001)"></i><i style="margin-left:44px;width:580px;background:linear-gradient(90deg,#00629c,#00619c,#005f9c,#005e9c,#005d9c,#005b9c,#005a9c,#00589c,#00579c,#00559c,#00539c,#00519c,#0c509c,#1b4d9c,#2b4b9c,#3d499c,#51479c,#66449c,#7d419c,#963f9c,#9c3489,#9c2b76,#9c2366,#9c1c59,#9c174e,#9c1245,#9c0e3d,#9c0b36,#9c0831,#9c062b,#9c0427,#9c0223,#9c001f,#9c001b,#9c0018,#9c0016,#9c0013,#9c0011,#9c000f,#9c000d,#9c000b,#9c000a,#9c0008,#9c0007,#9c0006,#9c0004,#9c0003,#9c0002,#9c0001)"></i><i style="margin-left:45px;width:570px;background:linear-gradient(90deg,#005f9c,#005e9c,#005c9c,#005b9c,#005a9c,#00589c,#00579c,#00559c,#00549c,#00529c,#00509c,#004e9c,#0c4c9c,#1a4a9c,#2a489c,#3b469c,#4e439c,#62419c,#783e9c,#903b9c,#9c3490,#9c2a7c,#9c226b,#9c1c5e,#9c1652,#9c1249,#9c0e41,#9c0b3a,#9c0834,#9c062e,#9c0429,#9c0225,#9c0021,#9c001e,#9c001b,#9c0018,#9c0015,#9c0013,#9c0011,#9c000f,#9c000d,#9c000b,#9c000a,#9c0008,#9c0007,#9c0006,#9c0004,#9c0003,#9c0002)"></i><i style="margin-left:46px;width:561px;background:linear-gradient(90deg,#005c9c,#005b9c,#00599c,#00589c,#00579c,#00559c,#00549c,#00529c,#00509c,#004e9c,#004d9c,#024b9c,#0f499c,#1d479c,#2d449c,#3f429c,#513f9c,#663d9c,#7c3a9c,#94379c,#9c2f8c,#9c2679,#9c1e69,#9c195c,#9c1451,#9c0f48,#9c0c40,#9c0939,#9c0633,#9c042e,#9c0229,#9c0125,#9c0021,#9c001d,#9c001a,#9c0018,#9c0015,#9c0013,#9c0011,#9c000f,#9c000d,#9c000b,#9c000a,#9c0008,#9c0007,#9c0006,#9c0004,#9c0003)"></i><i style="margin-left:47px;width:552px;background:linear-gradient(90deg,#00599c,#00589c,#00569c,#00559c,#00549c,#00529c,#00509c,#004f9c,#004d9c,#004b9c,#00499c,#05479c,#12459c,#20439c,#31419c,#423e9c,#553c9c,#6a399c,#80369c,#98339c,#9c2a89,#9c2276,#9c1b67,#9c155a,#9c1150,#9c0d47,#9c0a3f,#9c0738,#9c0432,#9c022d,#9c0128,#9c0024,#9c0021,#9c001d,#9c001a,#9c0017,#9c0015,#9c0013,#9c0010,#9c000f,#9c000d,#9c000b,#9c000a,#9c0008,#9c0007,#9c0006,#9c0005)"></i><i style="margin-left:48px;width:542px;background:linear-gradient(90deg,#00569c,#00559c,#00549c,#00529c,#00519c,#004f9c,#004d9c,#004c9c,#004a9c,#00489c,#00469c,#07449c,#14429c,#233f9c,#343d9c,#453a9c,#59389c,#6d359c,#84329c,#9c2f9c,#9c2586,#9c1e74,#9c1865,#9c1359,#9c0e4f,#9c0b46,#9c083e,#9c0538,#9c0332,#9c012d,#9c0028,#9c0024,#9c0020,#9c001d,#9c001a,#9c0017,#9c0015,#9c0013,#9c0011,#9c000f,#9c000d,#9c000b,#9c000a,#9c0008,#9c0007,#9c0006)"></i><i style="margin-left:49px;width:533px;background:linear-gradient(90deg,#00549c,#00529c,#00519c,#004f9c,#004e9c,#004c9c,#004a9c,#00489c,#00479c,#00459c,#00439c,#0a409c,#183e9c,#273c9c,#37399c,#49379c,#5c349c,#71319c,#882e9c,#9c2a98,#9c2183,#9c1a71,#9c1463,#9c1057,#9c0c4d,#9c0945,#9c063d,#9c0337,#9c0131,#9c002c,#9c0028,#9c0024,#9c0020,#9c001d,#9c001a,#9c0017,#9c0015,#9c0013,#9c0010,#9c000f,#9c000d,#9c000b,#9c000a,#9c0008,#9c0007)"></i><i style="margin-left:50px;width:523px;background:linear-gradient(90deg,#00519c,#004f9c,#004e9c,#004c9c,#004b9c,#00499c,#00479c,#00469c,#00449c,#00429c,#00409c,#0a3e9c,#173b9c,#25399c,#35379c,#46349c,#59319c,#6c2e9c,#822c9c,#99289c,#9c2189,#9c1a77,#9c1468,#9c0f5c,#9c0b52,#9c0849,#9c0541,#9c033a,#9c0134,#9c002f,#9c002b,#9c0026,#9c0023,#9c001f,#9c001c,#9c0019,#9c0017,#9c0014,#9c0012,#9c0010,#9c000e,#9c000d,#9c000b,#9c000a,#9c0008)"></i><i style="margin-left:51px;width:514px;background:linear-gradient(90deg,#004e9c,#004d9c,#004b9c,#004a9c,#00489c,#00469c,#00459c,#00439c,#00419c,#003f9c,#013d9c,#0c3a9c,#1a389c,#28369c,#38339c,#4a309c,#5c2e9c,#702b9c,#86289c,#9c249b,#9c1c86,#9c1674,#9c1166,#9c0d5a,#9c0950,#9c0648,#9c0440,#9c023a,#9c0034,#9c002f,#9c002a,#9c0026,#9c0022,#9c001f,#9c001c,#9c0019,#9c0017,#9c0014,#9c0012,#9c0010,#9c000e,#9c000d,#9c000b,#9c000a)"></i><i style="margin-left:52px;width:504px;background:linear-gradient(90deg,#004c9c,#004a9c,#00499c,#00479c,#00459c,#00439c,#00429c,#00409c,#003e9c,#003c9c,#03399c,#0f379c,#1c359c,#2b329c,#3b309c,#4d2d9c,#5f2a9c,#74279c,#89249c,#9c2098,#9c1983,#9c1373,#9c0e65,#9c0a59,#9c074f,#9c0447,#9c0240,#9c0039,#9c0033,#9c002e,#9c002a,#9c0026,#9c0022,#9c001f,#9c001c,#9c0019,#9c0017,#9c0014,#9c0012,#9c0010,#9c000e,#9c000d,#9c000b)"></i><i style="margin-left:53px;width:495px;background:linear-gradient(90deg,#00499c,#00489c,#00469c,#00449c,#00429c,#00419c,#003f9c,#003d9c,#003b9c,#00399c,#06369c,#12349c,#20329c,#2f2f9c,#3f2c9c,#502a9c,#63279c,#78249c,#8d219c,#9c1c94,#9c1580,#9c1070,#9c0b63,#9c0858,#9c054e,#9c0246,#9c003f,#9c0038,#9c0033,#9c002e,#9c0029,#9c0025,#9c0022,#9c001f,#9c001c,#9c0019,#9c0016,#9c0014,#9c0012,#9c0010,#9c000e,#9c000d)"></i><i style="margin-left:54px;width:485px;background:linear-gradient(90deg,#00479c,#00459c,#00439c,#00429c,#00409c,#003e9c,#003c9c,#003a9c,#00389c,#00369c,#08339c,#14319c,#222f9c,#312c9c,#42299c,#54269c,#67239c,#7b209c,#911d9c,#9c1891,#9c127e,#9c0d6e,#9c0961,#9c0656,#9c034d,#9c0145,#9c003e,#9c0038,#9c0032,#9c002d,#9c0029,#9c0025,#9c0022,#9c001e,#9c001b,#9c0019,#9c0016,#9c0014,#9c0012,#9c0010,#9c000e)"></i><i style="margin-left:55px;width:476px;background:linear-gradient(90deg,#00449c,#00429c,#00419c,#003f9c,#003d9c,#003b9c,#00399c,#00379c,#00359c,#00339c,#08319c,#142f9c,#212c9c,#302a9c,#3f279c,#50249c,#63219c,#761e9c,#8b1b9c,#9c1797,#9c1183,#9c0c73,#9c0866,#9c055b,#9c0351,#9c0149,#9c0041,#9c003b,#9c0035,#9c0030,#9c002c,#9c0028,#9c0024,#9c0021,#9c001e,#9c001b,#9c0018,#9c0016,#9c0014,#9c0012,#9c0010)"></i><i style="margin-left:57px;width:465px;background:linear-gradient(90deg,#00419c,#00409c,#003e9c,#003c9c,#003a9c,#00399c,#00379c,#00359c,#00329c,#00309c,#0b2e9c,#172c9c,#25299c,#33269c,#43249c,#54219c,#671e9c,#7a1b9c,#8f189c,#9c1393,#9c0e80,#9c0a71,#9c0664,#9c0359,#9c0150,#9c0048,#9c0041,#9c003a,#9c0035,#9c0030,#9c002b,#9c0027,#9c0024,#9c0020,#9c001d,#9c001b,#9c0018,#9c0016,#9c0014,#9c0012)"></i><i style="margin-left:58px;width:456px;background:linear-gradient(90deg,#003f9c,#003d9c,#003c9c,#003a9c,#00389c,#00369c,#00349c,#00329c,#00309c,#022d9c,#0d2b9c,#1a299c,#28269c,#37239c,#47219c,#581e9c,#6a1b9c,#7e189c,#93149c,#9c108f,#9c0b7d,#9c076e,#9c0462,#9c0157,#9c004e,#9c0046,#9c0040,#9c0039,#9c0034,#9c002f,#9c002b,#9c0027,#9c0023,#9c0020,#9c001d,#9c001a,#9c0018,#9c0016,#9c0014)"></i><i style="margin-left:59px;width:446px;background:linear-gradient(90deg,#003d9c,#003b9c,#00399c,#00379c,#00359c,#00339c,#00319c,#002f9c,#002d9c,#052b9c,#10289c,#1d269c,#2b239c,#3a209c,#4a1e9c,#5b1b9c,#6e189c,#82159c,#97119c,#9c0c8c,#9c087b,#9c056d,#9c0261,#9c0056,#9c004d,#9c0046,#9c003f,#9c0039,#9c0034,#9c002f,#9c002a,#9c0027,#9c0023,#9c0020,#9c001d,#9c001a,#9c0018,#9c0016)"></i><i style="margin-left:60px;width:437px;background:linear-gradient(90deg,#003a9c,#00389c,#00379c,#00359c,#00339c,#00319c,#002f9c,#002d9c,#002a9c,#07289c,#13259c,#20239c,#2e209c,#3d1e9c,#4d1b9c,#5f189c,#72159c,#86119c,#9b0e9c,#9c0989,#9c0578,#9c026a,#9c005f,#9c0055,#9c004c,#9c0044,#9c003e,#9c0038,#9c0033,#9c002e,#9c002a,#9c0026,#9c0023,#9c001f,#9c001d,#9c001a,#9c0018)"></i><i style="margin-left:61px;width:427px;background:linear-gradient(90deg,#00389c,#00369c,#00349c,#00339c,#00319c,#002f9c,#002d9c,#002a9c,#00289c,#07269c,#12239c,#1e219c,#2c1e9c,#3a1c9c,#4a199c,#5a169c,#6c139c,#7f109c,#940d9c,#9c0990,#9c057f,#9c0270,#9c0064,#9c005a,#9c0051,#9c0049,#9c0042,#9c003c,#9c0036,#9c0031,#9c002d,#9c0029,#9c0025,#9c0022,#9c001f,#9c001c,#9c001a)"></i><i style="margin-left:63px;width:417px;background:linear-gradient(90deg,#00369c,#00349c,#00329c,#00309c,#002e9c,#002c9c,#002a9c,#00289c,#00259c,#0a239c,#15219c,#221e9c,#2f1c9c,#3e199c,#4e169c,#5f139c,#71109c,#840d9c,#990a9c,#9c068c,#9c027b,#9c006d,#9c0062,#9c0058,#9c004f,#9c0047,#9c0041,#9c003b,#9c0035,#9c0031,#9c002c,#9c0028,#9c0025,#9c0022,#9c001f,#9c001c)"></i><i style="margin-left:64px;width:407px;background:linear-gradient(90deg,#00339c,#00319c,#00309c,#002e9c,#002c9c,#002a9c,#00279c,#00259c,#02239c,#0c219c,#181e9c,#241c9c,#32199c,#41169c,#51139c,#62109c,#740d9c,#870a9c,#9c079c,#9c0389,#9c0179,#9c006c,#9c0060,#9c0056,#9c004e,#9c0046,#9c0040,#9c003a,#9c0035,#9c0030,#9c002c,#9c0028,#9c0025,#9c0021,#9c001f)"></i><i style="margin-left:65px;width:398px;background:linear-gradient(90deg,#00319c,#002f9c,#002d9c,#002b9c,#00299c,#00279c,#00259c,#00239c,#04209c,#0e1e9c,#1a1b9c,#27199c,#35169c,#44139c,#54119c,#660e9c,#780b9c,#8b079c,#9c0498,#9c0186,#9c0076,#9c0069,#9c005e,#9c0055,#9c004c,#9c0045,#9c003f,#9c0039,#9c0034,#9c002f,#9c002b,#9c0028,#9c0024,#9c0021)"></i><i style="margin-left:66px;width:388px;background:linear-gradient(90deg,#002f9c,#002d9c,#002b9c,#00299c,#00279c,#00259c,#00239c,#00209c,#061e9c,#111c9c,#1d199c,#2a169c,#38149c,#47119c,#570e9c,#690b9c,#7b089c,#8f059c,#9c0295,#9c0083,#9c0074,#9c0068,#9c005d,#9c0054,#9c004b,#9c0044,#9c003e,#9c0038,#9c0033,#9c002f,#9c002b,#9c0027,#9c0024)"></i><i style="margin-left:68px;width:378px;background:linear-gradient(90deg,#002d9c,#002b9c,#00299c,#00279c,#00259c,#00239c,#00219c,#001e9c,#061c9c,#111a9c,#1d179c,#29159c,#37129c,#450f9c,#550c9c,#650a9c,#77079c,#89049c,#9c019b,#9c0089,#9c007a,#9c006d,#9c0062,#9c0058,#9c0050,#9c0048,#9c0042,#9c003c,#9c0037,#9c0032,#9c002e,#9c002a,#9c0027)"></i><i style="margin-left:69px;width:368px;background:linear-gradient(90deg,#002a9c,#00299c,#00279c,#00259c,#00239c,#00209c,#001e9c,#001c9c,#081a9c,#13179c,#1f159c,#2c129c,#39109c,#480d9c,#570a9c,#68079c,#7a049c,#8c019c,#9c0098,#9c0086,#9c0078,#9c006b,#9c0060,#9c0057,#9c004f,#9c0047,#9c0041,#9c003b,#9c0036,#9c0032,#9c002d,#9c002a)"></i><i style="margin-left:71px;width:358px;background:linear-gradient(90deg,#00289c,#00269c,#00249c,#00229c,#00209c,#001e9c,#001c9c,#021a9c,#0b179c,#16159c,#22129c,#2f109c,#3d0d9c,#4c0a9c,#5c079c,#6c059c,#7e029c,#91009c,#9c0094,#9c0083,#9c0074,#9c0068,#9c005e,#9c0055,#9c004d,#9c0046,#9c0040,#9c003a,#9c0035,#9c0031,#9c002d)"></i><i style="margin-left:72px;width:348px;background:linear-gradient(90deg,#00269c,#00249c,#00229c,#00209c,#001e9c,#001c9c,#001a9c,#04179c,#0e159c,#19129c,#25109c,#320d9c,#400b9c,#4f089c,#5f059c,#6f029c,#81009c,#94009c,#9c0091,#9c0080,#9c0072,#9c0067,#9c005d,#9c0054,#9c004c,#9c0045,#9c003f,#9c003a,#9c0035,#9c0030)"></i><i style="margin-left:73px;width:339px;background:linear-gradient(90deg,#00249c,#00229c,#00209c,#001e9c,#001c9c,#001a9c,#00179c,#06159c,#10139c,#1b109c,#280e9c,#350b9c,#43089c,#52069c,#62039c,#73009c,#85009c,#99009c,#9c008d,#9c007d,#9c0070,#9c0064,#9c005b,#9c0052,#9c004a,#9c0044,#9c003e,#9c0039,#9c0034)"></i><i style="margin-left:75px;width:328px;background:linear-gradient(90deg,#00229c,#00209c,#001e9c,#001c9c,#001a9c,#00179c,#00159c,#08139c,#13109c,#1f0e9c,#2b0b9c,#38099c,#47069c,#56039c,#66019c,#77009c,#89009c,#9c009b,#9c0089,#9c007a,#9c006d,#9c0062,#9c0059,#9c0051,#9c0049,#9c0043,#9c003d,#9c0038)"></i><i style="margin-left:76px;width:319px;background:linear-gradient(90deg,#00209c,#001e9c,#001c9c,#001a9c,#00189c,#00169c,#00149c,#08119c,#120f9c,#1d0c9c,#290a9c,#36079c,#44059c,#52029c,#61009c,#72009c,#83009c,#95009c,#9c0091,#9c0081,#9c0074,#9c0068,#9c005e,#9c0056,#9c004e,#9c0047,#9c0041,#9c003c)"></i><i style="margin-left:78px;width:308px;background:linear-gradient(90deg,#001e9c,#001c9c,#001a9c,#00189c,#00169c,#00149c,#02119c,#0b0f9c,#150d9c,#200a9c,#2c089c,#39059c,#47039c,#55009c,#65009c,#75009c,#86009c,#99009c,#9c008d,#9c007e,#9c0071,#9c0066,#9c005d,#9c0054,#9c004d,#9c0046,#9c0040)"></i><i style="margin-left:79px;width:299px;background:linear-gradient(90deg,#001c9c,#001a9c,#00189c,#00169c,#00149c,#00129c,#040f9c,#0d0d9c,#180b9c,#23089c,#2f069c,#3c039c,#4a019c,#59009c,#68009c,#79009c,#8b009c,#9c009b,#9c008a,#9c007b,#9c006f,#9c0064,#9c005b,#9c0053,#9c004b,#9c0045)"></i><i style="margin-left:81px;width:288px;background:linear-gradient(90deg,#001a9c,#00189c,#00169c,#00149c,#00129c,#000f9c,#060d9c,#100b9c,#1a089c,#26069c,#32049c,#40019c,#4e009c,#5c009c,#6c009c,#7d009c,#8e009c,#9c0097,#9c0087,#9c0079,#9c006d,#9c0062,#9c0059,#9c0051,#9c004a)"></i><i style="margin-left:82px;width:279px;background:linear-gradient(90deg,#00189c,#00169c,#00149c,#00129c,#00109c,#000e9c,#080b9c,#12099c,#1d079c,#29049c,#35029c,#43009c,#51009c,#60009c,#70009c,#81009c,#93009c,#9c0093,#9c0083,#9c0075,#9c006a,#9c0060,#9c0057,#9c004f)"></i><i style="margin-left:84px;width:268px;background:linear-gradient(90deg,#00169c,#00149c,#00129c,#00109c,#000e9c,#020c9c,#0b099c,#15079c,#20059c,#2c029c,#39009c,#46009c,#55009c,#64009c,#74009c,#85009c,#97009c,#9c008f,#9c0080,#9c0073,#9c0068,#9c005e,#9c0056)"></i><i style="margin-left:85px;width:259px;background:linear-gradient(90deg,#00159c,#00139c,#00119c,#000e9c,#000c9c,#020a9c,#0a089c,#14069c,#1f049c,#2a019c,#36009c,#43009c,#50009c,#5f009c,#6e009c,#7e009c,#8f009c,#9c0098,#9c0088,#9c007a,#9c006f,#9c0064,#9c005c)"></i><i style="margin-left:87px;width:248px;background:linear-gradient(90deg,#00139c,#00119c,#000f9c,#000d9c,#000a9c,#04089c,#0d069c,#17049c,#21029c,#2d009c,#39009c,#46009c,#53009c,#62009c,#71009c,#81009c,#92009c,#9c0094,#9c0085,#9c0078,#9c006d,#9c0063)"></i><i style="margin-left:88px;width:239px;background:linear-gradient(90deg,#00119c,#000f9c,#000d9c,#000b9c,#00099c,#06069c,#0f049c,#19029c,#24009c,#30009c,#3c009c,#49009c,#57009c,#66009c,#75009c,#86009c,#97009c,#9c0090,#9c0081,#9c0075,#9c006a)"></i><i style="margin-left:90px;width:228px;background:linear-gradient(90deg,#000f9c,#000d9c,#000b9c,#00099c,#00079c,#08059c,#12039c,#1c019c,#27009c,#33009c,#3f009c,#4c009c,#5a009c,#69009c,#79009c,#89009c,#9b009c,#9c008d,#9c007f,#9c0072)"></i><i style="margin-left:92px;width:218px;background:linear-gradient(90deg,#000d9c,#000b9c,#00099c,#00079c,#02059c,#0b039c,#15019c,#1f009c,#2a009c,#36009c,#43009c,#51009c,#5f009c,#6e009c,#7e009c,#8e009c,#9c0098,#9c0088,#9c007b)"></i><i style="margin-left:94px;width:207px;background:linear-gradient(90deg,#000c9c,#000a9c,#00079c,#00059c,#05039c,#0d019c,#17009c,#22009c,#2d009c,#3a009c,#46009c,#54009c,#62009c,#72009c,#82009c,#92009c,#9c0094,#9c0085)"></i><i style="margin-left:95px;width:198px;background:linear-gradient(90deg,#000a9c,#00089c,#00069c,#00049c,#06029c,#10009c,#1a009c,#25009c,#30009c,#3d009c,#4a009c,#58009c,#67009c,#76009c,#87009c,#98009c,#9c008f)"></i><i style="margin-left:97px;width:187px;background:linear-gradient(90deg,#00089c,#00069c,#00049c,#00039c,#07019c,#0f009c,#19009c,#23009c,#2e009c,#39009c,#45009c,#52009c,#5f009c,#6e009c,#7c009c,#8c009c,#9c009c)"></i><i style="margin-left:99px;width:177px;background:linear-gradient(90deg,#00079c,#00059c,#00039c,#01019c,#09009c,#12009c,#1c009c,#26009c,#31009c,#3d009c,#49009c,#56009c,#64009c,#72009c,#81009c,#91009c)"></i><i style="margin-left:101px;width:166px;background:linear-gradient(90deg,#00059c,#00039c,#00019c,#03009c,#0b009c,#15009c,#1e009c,#29009c,#34009c,#40009c,#4c009c,#59009c,#67009c,#75009c,#85009c)"></i><i style="margin-left:103px;width:156px;background:linear-gradient(90deg,#00049c,#00029c,#00009c,#06009c,#0e009c,#17009c,#21009c,#2c009c,#37009c,#44009c,#50009c,#5e009c,#6c009c,#7a009c)"></i><i style="margin-left:106px;width:144px;background:linear-gradient(90deg,#00029c,#00009c,#01009c,#08009c,#11009c,#1a009c,#25009c,#2f009c,#3b009c,#47009c,#54009c,#61009c,#6f009c)"></i><i style="margin-left:108px;width:134px;background:linear-gradient(90deg,#00019c,#00009c,#03009c,#0b009c,#14009c,#1e009c,#28009c,#33009c,#3f009c,#4b009c,#58009c,#66009c)"></i><i style="margin-left:111px;width:122px;background:linear-gradient(90deg,#00009c,#00009c,#05009c,#0e009c,#17009c,#21009c,#2b009c,#37009c,#42009c,#4f009c,#5c009c)"></i><i style="margin-left:114px;width:111px;background:linear-gradient(90deg,#00009c,#00009c,#08009c,#11009c,#1a009c,#24009c,#2f009c,#3b009c,#47009c,#54009c)"></i><i style="margin-left:117px;width:100px;background:linear-gradient(90deg,#00009c,#03009c,#0b009c,#14009c,#1e009c,#28009c,#33009c,#3f009c,#4c009c)"></i><i style="margin-left:120px;width:88px;background:linear-gradient(90deg,#00009c,#05009c,#0e009c,#17009c,#21009c,#2c009c,#37009c,#43009c)"></i><i style="margin-left:123px;width:77px;background:linear-gradient(90deg,#00009c,#08009c,#11009c,#1b009c,#25009c,#30009c,#3c009c)"></i><i style="margin-left:126px;width:65px;background:linear-gradient(90deg,#03009c,#0b009c,#14009c,#1e009c,#29009c,#34009c)"></i><i style="margin-left:131px;width:52px;background:linear-gradient(90deg,#06009c,#0f009c,#18009c,#23009c,#2d009c)"></i><i style="margin-left:135px;width:39px;background:linear-gradient(90deg,#09009c,#12009c,#1c009c,#26009c)"></i><i style="margin-left:140px;width:26px;background:linear-gradient(90deg,#0d009c,#17009c,#21009c)"></i><i style="margin-left:144px;width:13px;background:linear-gradient(90deg,#11009c,#1a009c)"></i></div><div class="cl" style="left:1291px;top:275px;width:433px;height:364px;clip-path:polygon(431.51px 181.89px,132.89px 1.4px,1.14px 362.39px)"><i style="margin-left:130px;width:6px;background:linear-gradient(90deg,#00ff00,#03ff00)"></i><i style="margin-left:129px;width:11px;background:linear-gradient(90deg,#00ff01,#02ff00,#07ff00)"></i><i style="margin-left:129px;width:14px;background:linear-gradient(90deg,#00ff02,#04ff01,#0bff00)"></i><i style="margin-left:128px;width:18px;background:linear-gradient(90deg,#00ff03,#03ff02,#09ff00,#10ff00)"></i><i style="margin-left:127px;width:23px;background:linear-gradient(90deg,#00ff05,#04ff03,#0cff01,#16ff00)"></i><i style="margin-left:127px;width:26px;background:linear-gradient(90deg,#00ff05,#04ff04,#0bff02,#12ff00,#1aff00)"></i><i style="margin-left:126px;width:30px;background:linear-gradient(90deg,#00ff07,#05ff05,#0dff03,#16ff01,#1fff00)"></i><i style="margin-left:125px;width:35px;background:linear-gradient(90deg,#00ff08,#04ff06,#0bff04,#14ff02,#1dff01,#26ff00)"></i><i style="margin-left:124px;width:39px;background:linear-gradient(90deg,#00ff09,#03ff07,#0aff06,#12ff04,#1aff02,#22ff00,#2bff00)"></i><i style="margin-left:124px;width:42px;background:linear-gradient(90deg,#00ff0a,#04ff08,#0cff06,#15ff04,#1eff02,#27ff01,#31ff00)"></i><i style="margin-left:123px;width:46px;background:linear-gradient(90deg,#00ff0c,#04ff0a,#0bff08,#13ff06,#1bff04,#24ff02,#2dff01,#37ff00)"></i><i style="margin-left:122px;width:51px;background:linear-gradient(90deg,#00ff0d,#04ff0b,#0cff09,#15ff07,#1fff05,#29ff03,#34ff01,#3fff00)"></i><i style="margin-left:121px;width:55px;background:linear-gradient(90deg,#00ff0e,#03ff0c,#0bff0a,#14ff08,#1cff06,#26ff04,#30ff03,#3aff01,#45ff00)"></i><i style="margin-left:121px;width:58px;background:linear-gradient(90deg,#00ff10,#05ff0e,#0dff0b,#16ff09,#20ff07,#2aff05,#35ff03,#40ff01,#4bff00)"></i><i style="margin-left:120px;width:63px;background:linear-gradient(90deg,#00ff11,#04ff0f,#0cff0d,#15ff0b,#1eff09,#28ff07,#32ff05,#3dff03,#48ff01,#54ff00)"></i><i style="margin-left:119px;width:67px;background:linear-gradient(90deg,#00ff13,#03ff11,#0bff0f,#13ff0d,#1cff0b,#26ff09,#30ff06,#3aff04,#44ff02,#4fff01,#5bff00)"></i><i style="margin-left:118px;width:71px;background:linear-gradient(90deg,#00ff14,#04ff12,#0cff10,#15ff0e,#1eff0c,#29ff09,#33ff07,#3eff05,#4aff03,#56ff01,#62ff00)"></i><i style="margin-left:118px;width:75px;background:linear-gradient(90deg,#00ff15,#04ff13,#0cff11,#15ff0f,#1eff0d,#28ff0b,#32ff09,#3dff07,#48ff05,#53ff03,#5fff01,#6bff00)"></i><i style="margin-left:117px;width:79px;background:linear-gradient(90deg,#00ff17,#04ff15,#0dff13,#16ff10,#20ff0e,#2aff0c,#35ff0a,#41ff07,#4dff05,#59ff03,#66ff01,#73ff00)"></i><i style="margin-left:116px;width:83px;background:linear-gradient(90deg,#00ff19,#04ff17,#0cff14,#15ff12,#1eff10,#28ff0e,#33ff0c,#3eff09,#49ff07,#55ff05,#61ff03,#6eff01,#7bff00)"></i><i style="margin-left:116px;width:87px;background:linear-gradient(90deg,#00ff1a,#05ff18,#0eff16,#17ff13,#21ff11,#2cff0f,#37ff0c,#43ff0a,#4fff08,#5cff05,#69ff03,#77ff01,#85ff00)"></i><i style="margin-left:115px;width:91px;background:linear-gradient(90deg,#00ff1c,#04ff19,#0dff17,#16ff15,#20ff13,#2aff11,#35ff0e,#40ff0c,#4cff0a,#58ff07,#65ff05,#72ff03,#80ff01,#8eff00)"></i><i style="margin-left:114px;width:95px;background:linear-gradient(90deg,#00ff1d,#04ff1b,#0cff19,#15ff17,#1eff15,#28ff13,#33ff10,#3eff0e,#49ff0c,#55ff0a,#61ff07,#6eff05,#7bff03,#89ff01,#97ff00)"></i><i style="margin-left:113px;width:99px;background:linear-gradient(90deg,#00ff1f,#04ff1d,#0cff1b,#16ff18,#20ff16,#2bff14,#36ff12,#41ff0f,#4dff0d,#5aff0a,#67ff08,#74ff06,#82ff03,#91ff01,#a0ff00)"></i><i style="margin-left:113px;width:103px;background:linear-gradient(90deg,#00ff21,#05ff1e,#0dff1c,#16ff1a,#20ff18,#2aff16,#35ff13,#41ff11,#4cff0f,#59ff0c,#65ff0a,#72ff08,#80ff05,#8eff03,#9dff01,#acff00)"></i><i style="margin-left:112px;width:107px;background:linear-gradient(90deg,#00ff22,#05ff20,#0dff1e,#17ff1c,#21ff19,#2cff17,#38ff15,#44ff12,#50ff10,#5dff0d,#6bff0b,#79ff08,#87ff06,#96ff03,#a6ff01,#b6ff00)"></i><i style="margin-left:111px;width:111px;background:linear-gradient(90deg,#00ff24,#04ff22,#0dff20,#16ff1e,#20ff1b,#2bff19,#36ff17,#41ff14,#4eff12,#5aff10,#67ff0d,#75ff0b,#83ff08,#91ff06,#a0ff03,#b0ff01,#c0ff00)"></i><i style="margin-left:110px;width:116px;background:linear-gradient(90deg,#00ff26,#04ff24,#0cff22,#15ff20,#1fff1d,#2aff1b,#35ff19,#40ff16,#4cff14,#58ff12,#65ff0f,#73ff0d,#80ff0a,#8fff08,#9dff05,#adff03,#bdff01,#cdff00)"></i><i style="margin-left:110px;width:119px;background:linear-gradient(90deg,#00ff28,#05ff25,#0eff23,#17ff21,#22ff1f,#2dff1c,#38ff1a,#44ff17,#51ff15,#5dff13,#6bff10,#79ff0e,#87ff0b,#96ff08,#a6ff06,#b6ff03,#c7ff01,#d8ff00)"></i><i style="margin-left:109px;width:123px;background:linear-gradient(90deg,#00ff29,#04ff27,#0dff25,#16ff23,#21ff21,#2bff1e,#36ff1c,#42ff1a,#4eff17,#5bff15,#68ff12,#76ff10,#84ff0d,#92ff0b,#a2ff08,#b1ff06,#c1ff03,#d2ff01,#e4ff00)"></i><i style="margin-left:108px;width:128px;background:linear-gradient(90deg,#00ff2b,#04ff29,#0dff27,#17ff25,#22ff22,#2dff20,#39ff1d,#46ff1b,#52ff19,#60ff16,#6eff13,#7cff11,#8bff0e,#9bff0b,#abff09,#bcff06,#cdff03,#e0ff01,#f2ff00)"></i><i style="margin-left:108px;width:131px;background:linear-gradient(90deg,#00ff2d,#05ff2b,#0eff29,#18ff27,#22ff24,#2dff22,#39ff20,#45ff1d,#51ff1b,#5eff18,#6cff16,#7aff13,#89ff11,#98ff0e,#a7ff0b,#b8ff09,#c8ff06,#daff03,#ecff01,#ffff00)"></i><i style="margin-left:107px;width:135px;background:linear-gradient(90deg,#00ff2f,#05ff2d,#0eff2b,#18ff28,#23ff26,#2fff24,#3bff21,#47ff1f,#55ff1c,#62ff1a,#70ff17,#7fff14,#8fff12,#9fff0f,#afff0c,#c0ff09,#d2ff06,#e5ff04,#f8ff01,#fff300)"></i><i style="margin-left:106px;width:140px;background:linear-gradient(90deg,#00ff31,#04ff2f,#0eff2d,#18ff2a,#22ff28,#2eff26,#3aff23,#46ff21,#53ff1e,#61ff1c,#6fff19,#7dff17,#8cff14,#9cff11,#adff0f,#bdff0c,#cfff09,#e1ff06,#f4ff03,#fff701,#ffe500)"></i><i style="margin-left:105px;width:144px;background:linear-gradient(90deg,#00ff33,#04ff31,#0dff2f,#17ff2d,#21ff2a,#2dff28,#38ff26,#44ff23,#51ff21,#5eff1e,#6cff1c,#7aff19,#89ff17,#99ff14,#a9ff11,#b9ff0f,#caff0c,#dcff09,#efff06,#fffc03,#ffea01,#ffda00)"></i><i style="margin-left:105px;width:147px;background:linear-gradient(90deg,#00ff35,#05ff33,#0fff31,#19ff2e,#24ff2c,#2fff2a,#3bff27,#48ff25,#55ff22,#63ff20,#72ff1d,#80ff1a,#90ff18,#a0ff15,#b1ff12,#c2ff0f,#d4ff0c,#e7ff0a,#faff07,#fff104,#ffdf01,#ffd000)"></i><i style="margin-left:104px;width:152px;background:linear-gradient(90deg,#00ff37,#05ff35,#0eff33,#18ff31,#23ff2e,#2eff2c,#3bff2a,#47ff27,#54ff25,#62ff22,#70ff20,#7fff1d,#8eff1a,#9eff18,#afff15,#c0ff12,#d2ff0f,#e4ff0c,#f7ff09,#fff406,#ffe203,#ffd201,#ffc400)"></i><i style="margin-left:103px;width:156px;background:linear-gradient(90deg,#00ff39,#05ff37,#0eff35,#19ff33,#24ff30,#30ff2e,#3cff2b,#4aff29,#57ff26,#65ff24,#74ff21,#84ff1e,#94ff1c,#a5ff19,#b6ff16,#c8ff13,#dbff10,#eeff0d,#fffc0a,#ffe906,#ffd803,#ffc901,#ffbb00)"></i><i style="margin-left:102px;width:160px;background:linear-gradient(90deg,#00ff3c,#04ff39,#0eff37,#18ff35,#23ff33,#2fff30,#3bff2e,#48ff2b,#55ff29,#63ff26,#72ff24,#81ff21,#91ff1e,#a1ff1c,#b2ff19,#c4ff16,#d6ff13,#e9ff10,#fdff0d,#ffee09,#ffdd06,#ffcd03,#ffbf01,#ffb300)"></i><i style="margin-left:102px;width:163px;background:linear-gradient(90deg,#00ff3e,#05ff3b,#0fff39,#1aff37,#25ff34,#32ff32,#3eff30,#4cff2d,#5aff2a,#68ff28,#77ff25,#87ff22,#97ff20,#a9ff1d,#baff1a,#cdff17,#e0ff14,#f4ff11,#fff60d,#ffe309,#ffd306,#ffc403,#ffb701,#ffab00)"></i><i style="margin-left:101px;width:168px;background:linear-gradient(90deg,#00ff40,#05ff3e,#0fff3b,#19ff39,#25ff37,#31ff34,#3dff32,#4bff30,#58ff2d,#67ff2a,#76ff28,#85ff25,#96ff22,#a7ff20,#b8ff1d,#caff1a,#ddff17,#f1ff14,#fff910,#ffe60c,#ffd509,#ffc606,#ffb903,#ffad01,#ffa100)"></i><i style="margin-left:100px;width:172px;background:linear-gradient(90deg,#00ff42,#04ff40,#0eff3e,#18ff3c,#24ff39,#30ff37,#3cff35,#49ff32,#57ff30,#65ff2d,#74ff2b,#83ff28,#93ff25,#a4ff23,#b5ff20,#c7ff1d,#d9ff1a,#edff17,#fffd14,#ffea0f,#ffd90c,#ffca08,#ffbc05,#ffb003,#ffa401,#ff9a00)"></i><i style="margin-left:100px;width:175px;background:linear-gradient(90deg,#00ff44,#06ff42,#0fff40,#1aff3e,#26ff3b,#32ff39,#3fff36,#4dff34,#5bff32,#6aff2f,#79ff2c,#89ff2a,#9aff27,#abff24,#bdff21,#d0ff1e,#e3ff1b,#f7ff18,#fff214,#ffe00f,#ffd00c,#ffc108,#ffb405,#ffa803,#ff9d01,#ff9300)"></i><i style="margin-left:99px;width:180px;background:linear-gradient(90deg,#00ff47,#05ff44,#0fff42,#1aff40,#25ff3e,#32ff3b,#3eff39,#4cff37,#5aff34,#69ff32,#78ff2f,#88ff2c,#98ff2a,#a9ff27,#bbff24,#ceff21,#e1ff1e,#f5ff1b,#fff417,#ffe212,#ffd20e,#ffc30b,#ffb608,#ffaa05,#ff9f03,#ff9501,#ff8b00)"></i><i style="margin-left:98px;width:184px;background:linear-gradient(90deg,#00ff49,#05ff47,#0fff45,#1aff42,#26ff40,#33ff3e,#40ff3b,#4eff39,#5dff36,#6cff34,#7cff31,#8cff2e,#9dff2b,#afff29,#c2ff26,#d5ff23,#eaff1f,#ffff1c,#ffeb17,#ffd913,#ffc90f,#ffbb0b,#ffae08,#ffa205,#ff9803,#ff8e01,#ff8500)"></i><i style="margin-left:97px;width:188px;background:linear-gradient(90deg,#00ff4c,#05ff49,#0fff47,#1aff45,#25ff43,#32ff40,#3fff3e,#4dff3c,#5bff39,#6aff37,#7aff34,#8aff31,#9bff2f,#adff2c,#bfff29,#d2ff26,#e6ff23,#fbff20,#ffef1b,#ffdd16,#ffcd12,#ffbe0e,#ffb10b,#ffa508,#ff9a05,#ff9103,#ff8801,#ff7f00)"></i><i style="margin-left:97px;width:192px;background:linear-gradient(90deg,#00ff4e,#06ff4c,#10ff49,#1cff47,#28ff45,#35ff42,#43ff40,#51ff3e,#60ff3b,#70ff38,#80ff36,#91ff33,#a3ff30,#b5ff2d,#c8ff2a,#ddff27,#f1ff24,#fff720,#ffe31a,#ffd216,#ffc311,#ffb50e,#ffa80a,#ff9d07,#ff9205,#ff8902,#ff8001,#ff7800)"></i><i style="margin-left:96px;width:196px;background:linear-gradient(90deg,#00ff50,#05ff4e,#10ff4c,#1bff4a,#27ff48,#34ff45,#41ff43,#50ff40,#5eff3e,#6eff3b,#7eff39,#8fff36,#a0ff33,#b2ff30,#c5ff2e,#d9ff2b,#eeff27,#fffb24,#ffe71e,#ffd519,#ffc614,#ffb811,#ffab0d,#ff9f0a,#ff9507,#ff8b05,#ff8302,#ff7a01,#ff7300)"></i><i style="margin-left:95px;width:200px;background:linear-gradient(90deg,#00ff53,#05ff51,#0fff4f,#1aff4d,#26ff4a,#33ff48,#40ff46,#4eff43,#5dff41,#6cff3e,#7cff3c,#8dff39,#9eff37,#b0ff34,#c3ff31,#d6ff2e,#eaff2b,#fffe28,#ffea22,#ffd81c,#ffc818,#ffba14,#ffad10,#ffa20c,#ff970a,#ff8d07,#ff8504,#ff7c02,#ff7501,#ff6e00)"></i><i style="margin-left:94px;width:205px;background:linear-gradient(90deg,#00ff56,#05ff54,#0fff51,#1bff4f,#27ff4d,#34ff4b,#42ff48,#51ff46,#60ff43,#70ff41,#81ff3e,#92ff3b,#a4ff39,#b7ff36,#cbff33,#dfff30,#f5ff2d,#fff428,#ffe022,#ffcf1c,#ffc017,#ffb213,#ffa510,#ff9a0c,#ff9009,#ff8607,#ff7e04,#ff7602,#ff6f00,#ff6800)"></i><i style="margin-left:94px;width:208px;background:linear-gradient(90deg,#00ff58,#06ff56,#10ff54,#1cff52,#28ff50,#35ff4d,#43ff4b,#51ff49,#60ff46,#70ff44,#80ff41,#92ff3e,#a3ff3c,#b6ff39,#c9ff36,#deff33,#f3ff30,#fff62b,#ffe225,#ffd11f,#ffc11b,#ffb416,#ffa712,#ff9c0f,#ff920c,#ff8809,#ff8006,#ff7804,#ff7002,#ff6a01,#ff6300)"></i><i style="margin-left:93px;width:212px;background:linear-gradient(90deg,#00ff5b,#05ff59,#10ff57,#1cff54,#29ff52,#36ff50,#44ff4e,#53ff4b,#63ff49,#73ff46,#84ff43,#96ff41,#a9ff3e,#bcff3b,#d0ff38,#e5ff35,#fbff32,#ffed2c,#ffda25,#ffc920,#ffba1b,#ffad16,#ffa113,#ff960f,#ff8c0c,#ff8309,#ff7a07,#ff7304,#ff6b02,#ff6501,#ff5f00)"></i><i style="margin-left:92px;width:216px;background:linear-gradient(90deg,#00ff5e,#05ff5c,#10ff5a,#1bff57,#28ff55,#35ff53,#43ff51,#52ff4e,#61ff4c,#72ff49,#82ff47,#94ff44,#a6ff41,#b9ff3f,#cdff3c,#e2ff39,#f8ff36,#fff030,#ffdd29,#ffcc23,#ffbd1e,#ffaf1a,#ffa315,#ff9812,#ff8e0e,#ff840b,#ff7c09,#ff7406,#ff6d04,#ff6602,#ff6001,#ff5a00)"></i><i style="margin-left:91px;width:221px;background:linear-gradient(90deg,#00ff61,#05ff5f,#0fff5c,#1bff5a,#27ff58,#35ff56,#43ff54,#51ff51,#61ff4f,#71ff4d,#81ff4a,#93ff47,#a5ff45,#b8ff42,#ccff3f,#e1ff3c,#f7ff39,#fff233,#ffde2c,#ffcd26,#ffbe21,#ffb01c,#ffa418,#ff9814,#ff8e11,#ff850e,#ff7c0b,#ff7508,#ff6d06,#ff6704,#ff6102,#ff5b00,#ff5600)"></i><i style="margin-left:91px;width:224px;background:linear-gradient(90deg,#00ff63,#06ff61,#11ff5f,#1dff5d,#2aff5b,#37ff59,#46ff56,#55ff54,#65ff51,#76ff4f,#87ff4c,#99ff4a,#acff47,#c0ff44,#d5ff41,#eaff3e,#fffd3b,#ffe833,#ffd62c,#ffc526,#ffb621,#ffa91c,#ff9d18,#ff9214,#ff8811,#ff7f0e,#ff770b,#ff7008,#ff6906,#ff6204,#ff5c02,#ff5701,#ff5200)"></i><i style="margin-left:90px;width:228px;background:linear-gradient(90deg,#00ff66,#05ff64,#10ff62,#1cff60,#29ff5e,#37ff5c,#45ff59,#54ff57,#64ff55,#74ff52,#85ff50,#97ff4d,#aaff4b,#beff48,#d2ff45,#e7ff42,#feff3f,#ffeb37,#ffd830,#ffc72a,#ffb824,#ffab1f,#ff9f1b,#ff9417,#ff8a13,#ff8110,#ff790d,#ff710a,#ff6a08,#ff6306,#ff5d04,#ff5802,#ff5301,#ff4e00)"></i><i style="margin-left:89px;width:233px;background:linear-gradient(90deg,#00ff69,#05ff67,#10ff65,#1dff63,#2aff61,#38ff5f,#47ff5c,#56ff5a,#67ff58,#78ff55,#8aff53,#9dff50,#b0ff4d,#c5ff4a,#daff48,#f0ff45,#fff63f,#ffe237,#ffcf30,#ffbf2a,#ffb124,#ffa41f,#ff981b,#ff8d17,#ff8413,#ff7b10,#ff730d,#ff6b0a,#ff6508,#ff5e06,#ff5904,#ff5302,#ff4e00,#ff4900)"></i><i style="margin-left:89px;width:236px;background:linear-gradient(90deg,#00ff6c,#06ff6a,#11ff68,#1eff66,#2bff64,#39ff62,#48ff5f,#57ff5d,#67ff5b,#78ff58,#8aff56,#9dff53,#b0ff51,#c4ff4e,#daff4b,#f0ff48,#fff743,#ffe33b,#ffd034,#ffc02d,#ffb227,#ffa522,#ff991e,#ff8e19,#ff8516,#ff7c12,#ff740f,#ff6c0c,#ff660a,#ff5f08,#ff5906,#ff5404,#ff4f02,#ff4a00,#ff4600)"></i><i style="margin-left:88px;width:240px;background:linear-gradient(90deg,#00ff6f,#06ff6d,#11ff6b,#1eff69,#2cff67,#3aff65,#49ff62,#59ff60,#6aff5e,#7cff5b,#8eff59,#a1ff56,#b5ff54,#caff51,#e0ff4e,#f7ff4b,#fff044,#ffdb3b,#ffc934,#ffba2d,#ffab28,#ff9f22,#ff931e,#ff891a,#ff8016,#ff7712,#ff6f0f,#ff680d,#ff610a,#ff5b08,#ff5606,#ff5004,#ff4b02,#ff4701,#ff4200)"></i><i style="margin-left:87px;width:245px;background:linear-gradient(90deg,#00ff72,#05ff70,#11ff6e,#1eff6c,#2bff6a,#39ff68,#49ff66,#59ff64,#69ff61,#7bff5f,#8dff5d,#a0ff5a,#b4ff57,#c9ff55,#dfff52,#f6ff4f,#fff148,#ffdc3f,#ffca37,#ffba31,#ffac2b,#ff9f25,#ff9420,#ff8a1c,#ff8018,#ff7815,#ff7011,#ff680f,#ff620c,#ff5c09,#ff5607,#ff5005,#ff4c03,#ff4702,#ff4300,#ff3f00)"></i><i style="margin-left:86px;width:249px;background:linear-gradient(90deg,#00ff75,#05ff74,#10ff72,#1dff70,#2aff6e,#39ff6c,#48ff69,#57ff67,#68ff65,#79ff63,#8cff60,#9fff5e,#b3ff5b,#c7ff59,#ddff56,#f4ff53,#fff34c,#ffde43,#ffcc3b,#ffbc34,#ffae2e,#ffa128,#ff9524,#ff8b1f,#ff811b,#ff7917,#ff7114,#ff6911,#ff630e,#ff5c0c,#ff5709,#ff5107,#ff4c05,#ff4803,#ff4302,#ff3f00,#ff3b00)"></i><i style="margin-left:86px;width:252px;background:linear-gradient(90deg,#00ff78,#06ff77,#12ff75,#1fff73,#2dff71,#3cff6f,#4bff6d,#5bff6a,#6dff68,#7fff66,#91ff63,#a5ff61,#baff5e,#cfff5c,#e6ff59,#feff56,#ffea4c,#ffd643,#ffc43b,#ffb534,#ffa72e,#ff9b28,#ff8f23,#ff851f,#ff7c1b,#ff7417,#ff6c14,#ff6511,#ff5e0e,#ff580c,#ff5309,#ff4e07,#ff4905,#ff4403,#ff4002,#ff3c00,#ff3800)"></i><i style="margin-left:85px;width:257px;background:linear-gradient(90deg,#00ff7c,#06ff7a,#12ff78,#1eff76,#2cff74,#3bff72,#4aff70,#5bff6e,#6cff6c,#7eff69,#91ff67,#a4ff65,#b9ff62,#cfff60,#e5ff5d,#fdff5a,#ffea50,#ffd647,#ffc53f,#ffb537,#ffa731,#ff9b2b,#ff9026,#ff8622,#ff7c1d,#ff741a,#ff6c16,#ff6513,#ff5f10,#ff590d,#ff530b,#ff4e09,#ff4907,#ff4405,#ff4003,#ff3c02,#ff3800,#ff3500)"></i><i style="margin-left:84px;width:261px;background:linear-gradient(90deg,#00ff7f,#06ff7d,#12ff7c,#1fff7a,#2dff78,#3cff76,#4cff74,#5dff71,#6fff6f,#81ff6d,#95ff6b,#a9ff68,#beff66,#d5ff63,#ecff60,#fff95b,#ffe351,#ffd047,#ffbe3f,#ffaf38,#ffa231,#ff962c,#ff8b26,#ff8122,#ff781e,#ff6f1a,#ff6816,#ff6113,#ff5b10,#ff550e,#ff4f0b,#ff4a09,#ff4607,#ff4105,#ff3d03,#ff3902,#ff3600,#ff3200)"></i><i style="margin-left:83px;width:265px;background:linear-gradient(90deg,#00ff83,#05ff81,#11ff7f,#1eff7d,#2cff7b,#3bff79,#4bff77,#5cff75,#6dff73,#80ff71,#93ff6f,#a7ff6c,#bdff6a,#d3ff67,#eaff65,#fffc61,#ffe555,#ffd14c,#ffc043,#ffb13c,#ffa335,#ff972f,#ff8c2a,#ff8225,#ff7920,#ff701c,#ff6919,#ff6215,#ff5b12,#ff5510,#ff500d,#ff4b0b,#ff4609,#ff4207,#ff3e05,#ff3a03,#ff3602,#ff3300,#ff2f00)"></i><i style="margin-left:83px;width:268px;background:linear-gradient(90deg,#00ff86,#07ff84,#13ff82,#20ff81,#2fff7f,#3eff7d,#4fff7b,#60ff79,#72ff76,#85ff74,#99ff72,#aeff70,#c4ff6d,#dbff6b,#f3ff68,#fff260,#ffdc55,#ffc94b,#ffb943,#ffaa3b,#ff9d35,#ff912f,#ff8629,#ff7d25,#ff7420,#ff6c1c,#ff6419,#ff5e15,#ff5712,#ff5210,#ff4c0d,#ff470b,#ff4309,#ff3f07,#ff3b05,#ff3703,#ff3302,#ff3001,#ff2d00)"></i><i style="margin-left:82px;width:273px;background:linear-gradient(90deg,#00ff8a,#06ff88,#12ff86,#20ff84,#2eff83,#3eff81,#4eff7f,#5fff7d,#72ff7b,#85ff78,#99ff76,#aeff74,#c4ff71,#dbff6f,#f3ff6c,#fff365,#ffdd59,#ffca4f,#ffb946,#ffaa3f,#ff9d38,#ff9132,#ff862c,#ff7d27,#ff7423,#ff6c1f,#ff641b,#ff5e18,#ff5714,#ff5212,#ff4c0f,#ff470d,#ff430a,#ff3f08,#ff3b06,#ff3705,#ff3303,#ff3002,#ff2d00,#ff2a00)"></i><i style="margin-left:81px;width:277px;background:linear-gradient(90deg,#00ff8d,#06ff8c,#12ff8a,#1fff88,#2eff86,#3dff85,#4dff83,#5eff81,#70ff7f,#83ff7d,#97ff7a,#acff78,#c2ff76,#d9ff73,#f1ff71,#fff46a,#ffde5e,#ffcb54,#ffba4b,#ffab43,#ff9e3b,#ff9235,#ff872f,#ff7d2a,#ff7526,#ff6d21,#ff651d,#ff5e1a,#ff5817,#ff5214,#ff4d11,#ff480e,#ff430c,#ff3f0a,#ff3b08,#ff3706,#ff3405,#ff3003,#ff2d02,#ff2a00,#ff2700)"></i><i style="margin-left:81px;width:280px;background:linear-gradient(90deg,#00ff91,#07ff8f,#14ff8e,#21ff8c,#30ff8a,#40ff88,#51ff86,#63ff84,#75ff82,#89ff80,#9dff7e,#b3ff7c,#caff7a,#e1ff77,#faff75,#ffeb69,#ffd65d,#ffc353,#ffb34a,#ffa542,#ff983b,#ff8c35,#ff822f,#ff782a,#ff7026,#ff6821,#ff611d,#ff5a1a,#ff5417,#ff4f14,#ff4911,#ff450f,#ff400c,#ff3c0a,#ff3808,#ff3406,#ff3105,#ff2e03,#ff2b02,#ff2800,#ff2500)"></i><i style="margin-left:80px;width:285px;background:linear-gradient(90deg,#00ff95,#06ff93,#13ff92,#21ff90,#30ff8e,#40ff8c,#50ff8b,#62ff89,#75ff87,#88ff85,#9dff83,#b3ff80,#c9ff7e,#e1ff7c,#faff79,#ffeb6e,#ffd662,#ffc457,#ffb34e,#ffa546,#ff983e,#ff8c38,#ff8232,#ff782d,#ff7028,#ff6824,#ff6120,#ff5a1c,#ff5419,#ff4f16,#ff4913,#ff4510,#ff400e,#ff3c0c,#ff380a,#ff3408,#ff3106,#ff2e04,#ff2b03,#ff2802,#ff2500,#ff2200)"></i><i style="margin-left:79px;width:289px;background:linear-gradient(90deg,#00ff99,#06ff97,#13ff95,#21ff94,#31ff92,#41ff90,#52ff8f,#64ff8d,#78ff8b,#8cff89,#a1ff87,#b7ff84,#cfff82,#e7ff80,#fffd7c,#ffe56e,#ffd062,#ffbe57,#ffae4e,#ff9f46,#ff933f,#ff8838,#ff7d32,#ff742d,#ff6c28,#ff6424,#ff5d20,#ff571c,#ff5119,#ff4b16,#ff4613,#ff4110,#ff3d0e,#ff390c,#ff350a,#ff3208,#ff2e06,#ff2b04,#ff2803,#ff2502,#ff2300,#ff2000)"></i><i style="margin-left:78px;width:293px;background:linear-gradient(90deg,#00ff9d,#06ff9b,#12ff9a,#21ff98,#30ff96,#40ff95,#51ff93,#63ff91,#77ff8f,#8bff8d,#a0ff8b,#b6ff89,#cdff87,#e6ff85,#fffe82,#ffe674,#ffd167,#ffbf5c,#ffaf52,#ffa04a,#ff9442,#ff883c,#ff7e36,#ff7530,#ff6c2b,#ff6527,#ff5e22,#ff571f,#ff511b,#ff4c18,#ff4715,#ff4212,#ff3d10,#ff390e,#ff350b,#ff3209,#ff2e08,#ff2b06,#ff2804,#ff2603,#ff2302,#ff2000,#ff1e00)"></i><i style="margin-left:78px;width:297px;background:linear-gradient(90deg,#00ffa0,#07ff9f,#14ff9d,#23ff9c,#33ff9a,#44ff99,#55ff97,#68ff95,#7cff93,#91ff91,#a7ff8f,#beff8d,#d6ff8b,#f0ff89,#fff481,#ffdc72,#ffc866,#ffb75b,#ffa751,#ff9949,#ff8d42,#ff823b,#ff7835,#ff6f30,#ff672b,#ff6026,#ff5922,#ff531e,#ff4d1b,#ff4818,#ff4315,#ff3e12,#ff3a10,#ff360d,#ff320b,#ff2f09,#ff2c07,#ff2806,#ff2604,#ff2303,#ff2001,#ff1e00,#ff1c00)"></i><i style="margin-left:77px;width:301px;background:linear-gradient(90deg,#00ffa5,#07ffa3,#14ffa2,#22ffa0,#32ff9f,#43ff9d,#55ff9b,#67ff9a,#7bff98,#90ff96,#a6ff94,#bdff92,#d5ff90,#efff8e,#fff586,#ffdd78,#ffc96b,#ffb760,#ffa856,#ff9a4d,#ff8e45,#ff833e,#ff7938,#ff7033,#ff682e,#ff6029,#ff5925,#ff5321,#ff4d1d,#ff481a,#ff4317,#ff3f14,#ff3a12,#ff360f,#ff330d,#ff2f0b,#ff2c09,#ff2907,#ff2606,#ff2304,#ff2103,#ff1e01,#ff1c00,#ff1a00)"></i><i style="margin-left:76px;width:305px;background:linear-gradient(90deg,#00ffa9,#06ffa8,#13ffa6,#22ffa5,#31ffa3,#42ffa2,#54ffa0,#66ff9f,#7aff9d,#8fff9b,#a5ff99,#bcff97,#d4ff95,#edff93,#fff68c,#ffdf7d,#ffca70,#ffb864,#ffa95a,#ff9b51,#ff8e49,#ff8342,#ff793b,#ff7036,#ff6830,#ff612c,#ff5a27,#ff5323,#ff4e20,#ff481c,#ff4319,#ff3f16,#ff3a14,#ff3611,#ff330f,#ff2f0d,#ff2c0b,#ff2909,#ff2607,#ff2306,#ff2104,#ff1e03,#ff1c01,#ff1a00,#ff1800)"></i><i style="margin-left:75px;width:310px;background:linear-gradient(90deg,#00ffad,#06ffac,#13ffab,#22ffa9,#32ffa8,#44ffa6,#56ffa5,#69ffa3,#7effa1,#93ffa0,#aaff9e,#c2ff9c,#dbff9a,#f5ff98,#ffee8c,#ffd77d,#ffc370,#ffb264,#ffa35a,#ff9551,#ff8949,#ff7e42,#ff743b,#ff6c36,#ff6430,#ff5c2b,#ff5627,#ff5023,#ff4a1f,#ff451c,#ff4019,#ff3b16,#ff3713,#ff3311,#ff300f,#ff2c0d,#ff290b,#ff2609,#ff2307,#ff2105,#ff1e04,#ff1c03,#ff1a01,#ff1800,#ff1600)"></i><i style="margin-left:75px;width:313px;background:linear-gradient(90deg,#00ffb1,#07ffb0,#15ffaf,#24ffae,#34ffac,#45ffab,#57ffa9,#6bffa8,#7fffa6,#95ffa5,#abffa3,#c3ffa1,#dcff9f,#f7ff9e,#ffed91,#ffd681,#ffc273,#ffb168,#ffa25d,#ff9554,#ff894c,#ff7e45,#ff743e,#ff6b38,#ff6433,#ff5c2e,#ff562a,#ff5025,#ff4a22,#ff451e,#ff401b,#ff3b18,#ff3715,#ff3313,#ff3010,#ff2c0e,#ff290c,#ff260a,#ff2309,#ff2107,#ff1e05,#ff1c04,#ff1a03,#ff1801,#ff1600,#ff1400)"></i><i style="margin-left:74px;width:317px;background:linear-gradient(90deg,#00ffb6,#07ffb5,#15ffb3,#24ffb2,#35ffb1,#46ffb0,#59ffae,#6dffad,#82ffab,#98ffaa,#b0ffa8,#c8ffa6,#e2ffa5,#fdffa3,#ffe691,#ffd081,#ffbd74,#ffac68,#ff9d5e,#ff9054,#ff844c,#ff7a45,#ff703e,#ff6838,#ff6033,#ff592e,#ff522a,#ff4c26,#ff4722,#ff421e,#ff3d1b,#ff3918,#ff3515,#ff3113,#ff2d11,#ff2a0e,#ff270c,#ff240a,#ff2109,#ff1f07,#ff1c05,#ff1a04,#ff1803,#ff1601,#ff1400,#ff1200)"></i><i style="margin-left:73px;width:321px;background:linear-gradient(90deg,#00ffba,#06ffb9,#14ffb8,#23ffb7,#34ffb6,#46ffb5,#58ffb3,#6cffb2,#81ffb0,#97ffaf,#afffad,#c7ffac,#e1ffaa,#fcffa9,#ffe797,#ffd187,#ffbd79,#ffac6d,#ff9d62,#ff9059,#ff8450,#ff7a49,#ff7042,#ff683c,#ff6036,#ff5931,#ff532c,#ff4d28,#ff4724,#ff4221,#ff3d1d,#ff391a,#ff3517,#ff3115,#ff2d12,#ff2a10,#ff270e,#ff240c,#ff210a,#ff1f08,#ff1c07,#ff1a05,#ff1804,#ff1603,#ff1401,#ff1200,#ff1000)"></i><i style="margin-left:73px;width:325px;background:linear-gradient(90deg,#00ffbf,#08ffbe,#16ffbd,#26ffbc,#37ffbb,#49ffb9,#5dffb8,#71ffb7,#87ffb5,#9effb4,#b6ffb3,#d0ffb1,#ebffaf,#fff7a8,#ffde95,#ffc885,#ffb578,#ffa56c,#ff9761,#ff8a58,#ff7f4f,#ff7448,#ff6b41,#ff633b,#ff5c36,#ff5531,#ff4e2c,#ff4928,#ff4324,#ff3e20,#ff3a1d,#ff361a,#ff3217,#ff2e15,#ff2b12,#ff2710,#ff240e,#ff220c,#ff1f0a,#ff1c08,#ff1a07,#ff1805,#ff1604,#ff1403,#ff1201,#ff1000,#ff0f00)"></i><i style="margin-left:72px;width:329px;background:linear-gradient(90deg,#00ffc4,#07ffc3,#16ffc2,#25ffc1,#37ffc0,#49ffbf,#5cffbd,#71ffbc,#86ffbb,#9dffba,#b6ffb8,#cfffb7,#eaffb5,#fff8af,#ffde9b,#ffc98b,#ffb67d,#ffa570,#ff9765,#ff8a5c,#ff7f53,#ff754b,#ff6c44,#ff633e,#ff5c39,#ff5533,#ff4f2f,#ff492a,#ff4326,#ff3e23,#ff3a1f,#ff361c,#ff3219,#ff2e17,#ff2b14,#ff2712,#ff240f,#ff220d,#ff1f0c,#ff1d0a,#ff1a08,#ff1807,#ff1605,#ff1404,#ff1202,#ff1001,#ff0f00,#ff0d00)"></i><i style="margin-left:71px;width:333px;background:linear-gradient(90deg,#00ffc9,#07ffc8,#15ffc7,#25ffc6,#36ffc5,#48ffc4,#5bffc3,#70ffc2,#86ffc1,#9dffbf,#b5ffbe,#ceffbd,#e9ffbb,#fff9b5,#ffdfa1,#ffc990,#ffb682,#ffa675,#ff976a,#ff8b60,#ff7f57,#ff754f,#ff6c48,#ff6341,#ff5c3c,#ff5536,#ff4f31,#ff492d,#ff4329,#ff3f25,#ff3a22,#ff361e,#ff321b,#ff2e19,#ff2b16,#ff2713,#ff2411,#ff220f,#ff1f0d,#ff1d0b,#ff1a0a,#ff1808,#ff1606,#ff1405,#ff1204,#ff1002,#ff0f01,#ff0d00,#ff0b00)"></i><i style="margin-left:70px;width:338px;background:linear-gradient(90deg,#00ffce,#07ffcd,#15ffcc,#25ffcb,#37ffca,#4affc9,#5effc8,#73ffc7,#89ffc6,#a1ffc5,#baffc4,#d4ffc3,#f0ffc1,#fff1b5,#ffd8a1,#ffc290,#ffb082,#ffa075,#ff9269,#ff8560,#ff7a57,#ff704f,#ff6748,#ff5f41,#ff583b,#ff5136,#ff4b31,#ff452d,#ff4029,#ff3b25,#ff3721,#ff331e,#ff2f1b,#ff2b18,#ff2816,#ff2513,#ff2211,#ff1f0f,#ff1d0d,#ff1a0b,#ff1809,#ff1608,#ff1406,#ff1205,#ff1004,#ff0e02,#ff0d01,#ff0b00,#ff0a00)"></i><i style="margin-left:70px;width:341px;background:linear-gradient(90deg,#00ffd3,#08ffd2,#17ffd1,#27ffd0,#39ffd0,#4bffcf,#5fffce,#75ffcd,#8bffcc,#a3ffcb,#bcffca,#d7ffc9,#f3ffc8,#ffefba,#ffd6a6,#ffc194,#ffaf85,#ff9f78,#ff916d,#ff8563,#ff7a5a,#ff7052,#ff674a,#ff5f44,#ff573e,#ff5139,#ff4b34,#ff452f,#ff402b,#ff3b27,#ff3723,#ff3320,#ff2f1d,#ff2b1a,#ff2818,#ff2515,#ff2213,#ff1f11,#ff1d0f,#ff1a0d,#ff180b,#ff1609,#ff1408,#ff1206,#ff1005,#ff0e04,#ff0d02,#ff0b01,#ff0a00,#ff0800)"></i><i style="margin-left:69px;width:345px;background:linear-gradient(90deg,#00ffd8,#08ffd7,#17ffd7,#27ffd6,#39ffd5,#4dffd4,#61ffd4,#77ffd3,#8effd2,#a7ffd1,#c1ffd0,#dcffcf,#f9ffce,#ffe8bb,#ffd0a6,#ffbb95,#ffaa86,#ff9a79,#ff8c6d,#ff8063,#ff755a,#ff6c52,#ff634b,#ff5b44,#ff543e,#ff4e39,#ff4834,#ff422f,#ff3d2b,#ff3827,#ff3424,#ff3020,#ff2c1d,#ff291a,#ff2618,#ff2315,#ff2013,#ff1d11,#ff1b0f,#ff180d,#ff160b,#ff1409,#ff1208,#ff1006,#ff0e05,#ff0d04,#ff0b02,#ff0a01,#ff0800,#ff0700)"></i><i style="margin-left:68px;width:350px;background:linear-gradient(90deg,#00ffdd,#07ffdd,#16ffdc,#27ffdb,#39ffdb,#4cffda,#61ffd9,#77ffd9,#8effd8,#a7ffd7,#c1ffd6,#dcffd6,#faffd5,#ffe8c1,#ffd0ac,#ffbb9a,#ffa98a,#ff9a7d,#ff8c71,#ff8067,#ff755e,#ff6b55,#ff634e,#ff5b47,#ff5441,#ff4d3b,#ff4736,#ff4232,#ff3d2d,#ff3829,#ff3426,#ff3022,#ff2c1f,#ff291c,#ff2519,#ff2217,#ff1f14,#ff1d12,#ff1a10,#ff180e,#ff160c,#ff140b,#ff1209,#ff1007,#ff0e06,#ff0d05,#ff0b03,#ff0a02,#ff0801,#ff0700,#ff0600)"></i><i style="margin-left:67px;width:354px;background:linear-gradient(90deg,#00ffe3,#07ffe2,#16ffe2,#26ffe1,#38ffe1,#4cffe0,#60ffe0,#76ffdf,#8effde,#a6ffde,#c0ffdd,#dcffdc,#f9ffdc,#ffe8c7,#ffd0b2,#ffbb9f,#ffa990,#ff9a82,#ff8c76,#ff806b,#ff7561,#ff6b59,#ff6351,#ff5b4a,#ff5444,#ff4d3e,#ff4739,#ff4234,#ff3d30,#ff382c,#ff3428,#ff3024,#ff2c21,#ff281e,#ff251b,#ff2219,#ff1f16,#ff1d14,#ff1a12,#ff1810,#ff160e,#ff140c,#ff120a,#ff1009,#ff0e07,#ff0c06,#ff0b05,#ff0903,#ff0802,#ff0701,#ff0500,#ff0400)"></i><i style="margin-left:67px;width:357px;background:linear-gradient(90deg,#00ffe8,#08ffe8,#18ffe7,#29ffe7,#3cffe7,#50ffe6,#65ffe6,#7cffe5,#94ffe5,#adffe4,#c8ffe4,#e5ffe3,#fffbdf,#ffdfc6,#ffc8b0,#ffb49e,#ffa38f,#ff9481,#ff8675,#ff7b6a,#ff7061,#ff6759,#ff5e51,#ff574a,#ff5044,#ff4a3e,#ff4439,#ff3e34,#ff3a30,#ff352c,#ff3128,#ff2d24,#ff2921,#ff261e,#ff231b,#ff2019,#ff1d16,#ff1b14,#ff1812,#ff1610,#ff140e,#ff120c,#ff100a,#ff0e09,#ff0d07,#ff0b06,#ff0905,#ff0803,#ff0702,#ff0501,#ff0400,#ff0300)"></i><i style="margin-left:66px;width:362px;background:linear-gradient(90deg,#00ffee,#08ffee,#17ffed,#28ffed,#3bffed,#4fffec,#65ffec,#7bffec,#94ffeb,#adffeb,#c8ffeb,#e5ffea,#fffae5,#ffdfcc,#ffc7b6,#ffb3a3,#ffa293,#ff9385,#ff8679,#ff7a6e,#ff7064,#ff665c,#ff5e54,#ff564d,#ff4f46,#ff4941,#ff433b,#ff3e36,#ff3932,#ff352e,#ff302a,#ff2d26,#ff2923,#ff2620,#ff231d,#ff201a,#ff1d18,#ff1a15,#ff1813,#ff1611,#ff140f,#ff120d,#ff100c,#ff0e0a,#ff0c08,#ff0b07,#ff0906,#ff0804,#ff0603,#ff0502,#ff0401,#ff0300,#ff0200)"></i><i style="margin-left:65px;width:366px;background:linear-gradient(90deg,#00fff4,#07fff4,#17fff3,#29fff3,#3cfff3,#51fff3,#67fff3,#7efff2,#97fff2,#b1fff2,#cdfff2,#ebfff1,#fff4e7,#ffd9cd,#ffc2b7,#ffaea4,#ff9d94,#ff8e86,#ff8179,#ff766e,#ff6c65,#ff635c,#ff5a54,#ff534d,#ff4c47,#ff4641,#ff403b,#ff3b37,#ff3632,#ff322e,#ff2e2a,#ff2a26,#ff2723,#ff2420,#ff201d,#ff1e1a,#ff1b18,#ff1815,#ff1613,#ff1411,#ff120f,#ff100d,#ff0e0c,#ff0c0a,#ff0b09,#ff0907,#ff0806,#ff0604,#ff0503,#ff0402,#ff0301,#ff0200,#ff0100)"></i><i style="margin-left:64px;width:369px;background:linear-gradient(90deg,#00fffa,#07fffa,#16fffa,#28fffa,#3bfff9,#50fff9,#66fff9,#7dfff9,#96fff9,#b0fff9,#ccfff9,#eafff9,#fff5ef,#ffdad4,#ffc3be,#ffafaa,#ff9e9a,#ff8f8b,#ff827e,#ff7673,#ff6c69,#ff6360,#ff5b58,#ff5351,#ff4c4a,#ff4644,#ff413f,#ff3b3a,#ff3735,#ff3231,#ff2e2d,#ff2a29,#ff2725,#ff2422,#ff211f,#ff1e1c,#ff1b1a,#ff1917,#ff1615,#ff1413,#ff1211,#ff100f,#ff0e0d,#ff0c0c,#ff0b0a,#ff0909,#ff0807,#ff0606,#ff0505,#ff0403,#ff0302,#ff0201,#ff0100,#ff0000)"></i><i style="margin-left:64px;width:369px;background:linear-gradient(90deg,#00feff,#08feff,#18feff,#2afeff,#3efeff,#53feff,#69feff,#81feff,#9afeff,#b5feff,#d1fdff,#effdff,#ffeef0,#ffd4d5,#ffbdbf,#ffaaab,#ff999b,#ff8b8c,#ff7e80,#ff7374,#ff696a,#ff6061,#ff5859,#ff5152,#ff4a4b,#ff4445,#ff3f40,#ff393a,#ff3536,#ff3031,#ff2d2d,#ff292a,#ff2526,#ff2223,#ff1f20,#ff1c1d,#ff1a1b,#ff1718,#ff1516,#ff1314,#ff1112,#ff0f10,#ff0d0e,#ff0b0c,#ff0a0b,#ff0809,#ff0708,#ff0606,#ff0405,#ff0304,#ff0203,#ff0102,#ff0001,#ff0000)"></i><i style="margin-left:63px;width:366px;background:linear-gradient(90deg,#00f8ff,#08f8ff,#18f8ff,#2af8ff,#3df7ff,#52f7ff,#68f7ff,#80f7ff,#99f6ff,#b4f6ff,#d0f6ff,#eef6ff,#ffe8f1,#ffced6,#ffb8bf,#ffa5ac,#ff959b,#ff878d,#ff7a80,#ff6f75,#ff656b,#ff5d62,#ff5559,#ff4e52,#ff474b,#ff4145,#ff3c40,#ff373b,#ff3236,#ff2e32,#ff2a2e,#ff272a,#ff2326,#ff2023,#ff1d20,#ff1a1d,#ff181b,#ff1618,#ff1316,#ff1114,#ff0f12,#ff0d10,#ff0c0e,#ff0a0c,#ff080b,#ff0709,#ff0608,#ff0406,#ff0305,#ff0204,#ff0103,#ff0002,#ff0001)"></i><i style="margin-left:62px;width:362px;background:linear-gradient(90deg,#00f2ff,#07f2ff,#17f2ff,#28f1ff,#3bf1ff,#4ff1ff,#64f0ff,#7bf0ff,#94f0ff,#adefff,#c9efff,#e6eeff,#ffe9fa,#ffcfde,#ffb8c7,#ffa6b3,#ff95a1,#ff8792,#ff7b85,#ff6f79,#ff666f,#ff5d66,#ff555d,#ff4e56,#ff474f,#ff4149,#ff3c43,#ff373e,#ff3239,#ff2e34,#ff2a30,#ff272c,#ff2329,#ff2026,#ff1d22,#ff1b20,#ff181d,#ff161a,#ff1318,#ff1116,#ff0f14,#ff0d12,#ff0c10,#ff0a0e,#ff090c,#ff070b,#ff0609,#ff0408,#ff0306,#ff0205,#ff0104,#ff0003,#ff0002)"></i><i style="margin-left:62px;width:357px;background:linear-gradient(90deg,#00ecff,#09ecff,#18ecff,#2aebff,#3cebff,#51eaff,#66eaff,#7de9ff,#95e9ff,#afe8ff,#cae8ff,#e7e7ff,#ffe0f8,#ffc7dd,#ffb2c6,#ff9fb2,#ff90a1,#ff8292,#ff7685,#ff6b79,#ff626f,#ff5966,#ff515d,#ff4a56,#ff444f,#ff3e49,#ff3943,#ff343e,#ff3039,#ff2c35,#ff2830,#ff252d,#ff2129,#ff1e26,#ff1b23,#ff1920,#ff161d,#ff141a,#ff1218,#ff1016,#ff0e14,#ff0c12,#ff0a10,#ff090e,#ff070c,#ff060b,#ff0509,#ff0308,#ff0207,#ff0105,#ff0004,#ff0003)"></i><i style="margin-left:61px;width:354px;background:linear-gradient(90deg,#00e7ff,#08e6ff,#17e6ff,#28e5ff,#3ae5ff,#4ee4ff,#63e4ff,#79e3ff,#91e2ff,#aae2ff,#c4e1ff,#e0e0ff,#fedfff,#ffc7e4,#ffb2cc,#ff9fb8,#ff90a6,#ff8297,#ff768a,#ff6b7e,#ff6173,#ff596a,#ff5161,#ff4a59,#ff4452,#ff3e4c,#ff3946,#ff3441,#ff303c,#ff2c37,#ff2833,#ff242f,#ff212b,#ff1e28,#ff1b25,#ff1922,#ff161f,#ff141c,#ff121a,#ff1018,#ff0e15,#ff0c13,#ff0a11,#ff0910,#ff070e,#ff060c,#ff040b,#ff0309,#ff0208,#ff0107,#ff0005,#ff0004)"></i><i style="margin-left:60px;width:350px;background:linear-gradient(90deg,#00e1ff,#07e1ff,#16e0ff,#27dfff,#3adfff,#4ddeff,#62ddff,#78ddff,#90dcff,#a8dbff,#c3daff,#dfd9ff,#fcd8ff,#ffc2e6,#ffadce,#ff9bb9,#ff8ba8,#ff7e98,#ff728b,#ff687f,#ff5e74,#ff566a,#ff4e62,#ff485a,#ff4153,#ff3c4c,#ff3747,#ff3241,#ff2e3c,#ff2a38,#ff2633,#ff222f,#ff1f2c,#ff1c28,#ff1925,#ff1722,#ff141f,#ff121d,#ff101a,#ff0e18,#ff0c16,#ff0b14,#ff0912,#ff0710,#ff060e,#ff050c,#ff030b,#ff0209,#ff0108,#ff0007,#ff0006)"></i><i style="margin-left:59px;width:346px;background:linear-gradient(90deg,#00dcff,#07dbff,#16daff,#27daff,#39d9ff,#4cd8ff,#61d7ff,#77d6ff,#8ed6ff,#a7d5ff,#c1d4ff,#ddd3ff,#fad2ff,#ffbde7,#ffa8cf,#ff97ba,#ff87a9,#ff7a99,#ff6e8b,#ff647f,#ff5b75,#ff536b,#ff4b62,#ff455b,#ff3f53,#ff394d,#ff3447,#ff3042,#ff2b3d,#ff2738,#ff2434,#ff2030,#ff1d2c,#ff1a29,#ff1825,#ff1522,#ff1320,#ff111d,#ff0f1a,#ff0d18,#ff0b16,#ff0914,#ff0812,#ff0610,#ff050e,#ff040d,#ff020b,#ff010a,#ff0008,#ff0007)"></i><i style="margin-left:59px;width:341px;background:linear-gradient(90deg,#00d6ff,#08d6ff,#17d5ff,#27d4ff,#39d3ff,#4cd2ff,#60d1ff,#76d1ff,#8cd0ff,#a4cfff,#becdff,#d8ccff,#f5cbff,#ffbced,#ffa7d4,#ff96bf,#ff87ad,#ff799e,#ff6e90,#ff6484,#ff5b79,#ff526f,#ff4b66,#ff455e,#ff3f57,#ff3950,#ff344a,#ff2f45,#ff2b3f,#ff273b,#ff2436,#ff2032,#ff1d2e,#ff1a2b,#ff1828,#ff1525,#ff1322,#ff111f,#ff0f1c,#ff0d1a,#ff0b18,#ff0916,#ff0814,#ff0612,#ff0510,#ff040e,#ff020d,#ff010b,#ff000a,#ff0008)"></i><i style="margin-left:58px;width:338px;background:linear-gradient(90deg,#00d1ff,#07d1ff,#16d0ff,#27cfff,#38ceff,#4bcdff,#60ccff,#75cbff,#8ccaff,#a4c8ff,#bdc7ff,#d8c6ff,#f4c5ff,#ffb6ed,#ffa2d5,#ff91c0,#ff82ae,#ff759e,#ff6a90,#ff6084,#ff5779,#ff4f6f,#ff4866,#ff415e,#ff3c57,#ff3650,#ff314a,#ff2d44,#ff293f,#ff253b,#ff2136,#ff1e32,#ff1b2e,#ff182b,#ff1628,#ff1324,#ff1122,#ff0f1f,#ff0d1c,#ff0b1a,#ff0918,#ff0816,#ff0614,#ff0512,#ff0310,#ff020e,#ff010d,#ff000b,#ff000a)"></i><i style="margin-left:57px;width:334px;background:linear-gradient(90deg,#00ccff,#07cbff,#15caff,#25c9ff,#36c8ff,#49c7ff,#5cc6ff,#71c5ff,#87c4ff,#9ec3ff,#b7c1ff,#d0c0ff,#ecbfff,#ffb6f6,#ffa2dc,#ff91c7,#ff82b4,#ff75a4,#ff6a96,#ff6089,#ff577e,#ff4f73,#ff486a,#ff4262,#ff3c5b,#ff3654,#ff314e,#ff2d48,#ff2943,#ff253e,#ff2239,#ff1e35,#ff1b31,#ff182d,#ff162a,#ff1327,#ff1124,#ff0f21,#ff0d1f,#ff0b1c,#ff091a,#ff0818,#ff0615,#ff0514,#ff0412,#ff0210,#ff010e,#ff000d,#ff000b)"></i><i style="margin-left:56px;width:330px;background:linear-gradient(90deg,#00c7ff,#06c6ff,#14c5ff,#24c4ff,#36c3ff,#48c2ff,#5bc1ff,#70c0ff,#86beff,#9dbdff,#b6bcff,#cfbaff,#eab9ff,#ffb1f7,#ff9ede,#ff8dc8,#ff7eb5,#ff72a5,#ff6796,#ff5d89,#ff547e,#ff4c74,#ff456b,#ff3f63,#ff395b,#ff3454,#ff2f4e,#ff2b48,#ff2743,#ff233e,#ff2039,#ff1c35,#ff1931,#ff172e,#ff142a,#ff1227,#ff1024,#ff0d21,#ff0c1f,#ff0a1c,#ff081a,#ff0618,#ff0516,#ff0414,#ff0212,#ff0110,#ff000e,#ff000d)"></i><i style="margin-left:56px;width:325px;background:linear-gradient(90deg,#00c2ff,#08c1ff,#16c0ff,#26bfff,#37beff,#4abdff,#5dbbff,#72baff,#88b9ff,#9fb7ff,#b7b6ff,#d1b4ff,#ecb3ff,#ffaaf5,#ff97dc,#ff87c7,#ff79b4,#ff6da4,#ff6296,#ff5989,#ff507e,#ff4974,#ff426b,#ff3c62,#ff365b,#ff3154,#ff2c4e,#ff2848,#ff2443,#ff213e,#ff1d39,#ff1a35,#ff1731,#ff152e,#ff122a,#ff1027,#ff0e24,#ff0c21,#ff0a1f,#ff081c,#ff071a,#ff0518,#ff0416,#ff0314,#ff0112,#ff0010,#ff000e)"></i><i style="margin-left:55px;width:322px;background:linear-gradient(90deg,#00beff,#07bdff,#15bbff,#24baff,#35b9ff,#47b8ff,#5ab6ff,#6eb5ff,#84b3ff,#9ab2ff,#b2b0ff,#cbafff,#e5adff,#ffaafd,#ff97e3,#ff87cd,#ff79ba,#ff6da9,#ff629b,#ff588e,#ff5082,#ff4878,#ff426f,#ff3b66,#ff365e,#ff3157,#ff2c51,#ff284b,#ff2446,#ff2041,#ff1d3c,#ff1a38,#ff1734,#ff1530,#ff122d,#ff1029,#ff0e26,#ff0c23,#ff0a21,#ff081e,#ff071c,#ff051a,#ff0417,#ff0215,#ff0114,#ff0012,#ff0010)"></i><i style="margin-left:54px;width:318px;background:linear-gradient(90deg,#00b9ff,#06b8ff,#14b7ff,#24b5ff,#35b4ff,#46b3ff,#59b1ff,#6eb0ff,#83aeff,#99adff,#b1abff,#caa9ff,#e4a7ff,#ffa5fe,#ff92e4,#ff82ce,#ff75bb,#ff69aa,#ff5e9b,#ff558e,#ff4d83,#ff4578,#ff3f6f,#ff3966,#ff335f,#ff2e58,#ff2a51,#ff264b,#ff2246,#ff1e41,#ff1b3c,#ff1838,#ff1534,#ff1330,#ff102d,#ff0e2a,#ff0c26,#ff0a24,#ff0821,#ff071e,#ff051c,#ff041a,#ff0218,#ff0115,#ff0014,#ff0012)"></i><i style="margin-left:54px;width:313px;background:linear-gradient(90deg,#00b5ff,#08b3ff,#15b2ff,#24b1ff,#35afff,#46aeff,#59acff,#6cabff,#81a9ff,#96a8ff,#ada6ff,#c5a4ff,#dfa2ff,#faa0ff,#ff91ea,#ff82d4,#ff74c0,#ff68af,#ff5ea0,#ff5593,#ff4c87,#ff457d,#ff3e73,#ff396a,#ff3362,#ff2e5b,#ff2a55,#ff264f,#ff2249,#ff1e44,#ff1b3f,#ff183b,#ff1537,#ff1333,#ff102f,#ff0e2c,#ff0c29,#ff0a26,#ff0823,#ff0721,#ff051e,#ff041c,#ff031a,#ff0117,#ff0015,#ff0014)"></i><i style="margin-left:53px;width:309px;background:linear-gradient(90deg,#00b0ff,#07afff,#15adff,#24acff,#34abff,#46a9ff,#58a8ff,#6ba6ff,#80a4ff,#96a2ff,#ada1ff,#c59fff,#de9dff,#f99bff,#ff8deb,#ff7dd4,#ff70c1,#ff64b0,#ff5aa1,#ff5193,#ff4987,#ff427d,#ff3c73,#ff366b,#ff3163,#ff2c5c,#ff2755,#ff234f,#ff2049,#ff1c44,#ff193f,#ff163b,#ff1437,#ff1133,#ff0f2f,#ff0d2c,#ff0b29,#ff0926,#ff0723,#ff0521,#ff041e,#ff031c,#ff011a,#ff0018,#ff0016)"></i><i style="margin-left:52px;width:305px;background:linear-gradient(90deg,#00acff,#06abff,#14a9ff,#22a8ff,#32a6ff,#43a5ff,#55a3ff,#68a1ff,#7ca0ff,#919eff,#a79cff,#be9aff,#d698ff,#f096ff,#ff8df4,#ff7edc,#ff70c8,#ff65b6,#ff5ba7,#ff5299,#ff498d,#ff4282,#ff3c78,#ff366f,#ff3167,#ff2c60,#ff2859,#ff2353,#ff204d,#ff1c48,#ff1943,#ff163e,#ff143a,#ff1136,#ff0f32,#ff0d2f,#ff0b2c,#ff0929,#ff0726,#ff0623,#ff0420,#ff031e,#ff011c,#ff001a,#ff0018)"></i><i style="margin-left:51px;width:302px;background:linear-gradient(90deg,#00a8ff,#06a6ff,#13a5ff,#22a3ff,#32a2ff,#43a0ff,#559eff,#689dff,#7b9bff,#9199ff,#a797ff,#be95ff,#d693ff,#f091ff,#ff88f3,#ff79dc,#ff6cc8,#ff60b6,#ff56a6,#ff4e99,#ff468d,#ff3f82,#ff3978,#ff336f,#ff2e67,#ff295f,#ff2559,#ff2152,#ff1d4d,#ff1a47,#ff1742,#ff143e,#ff123a,#ff0f36,#ff0d32,#ff0b2e,#ff092b,#ff0728,#ff0625,#ff0423,#ff0320,#ff011e,#ff001b,#ff0019)"></i><i style="margin-left:51px;width:297px;background:linear-gradient(90deg,#00a3ff,#07a2ff,#15a0ff,#239fff,#339dff,#449bff,#569aff,#6998ff,#7d96ff,#9294ff,#a992ff,#c090ff,#d88eff,#f28bff,#ff82f1,#ff73da,#ff67c6,#ff5cb5,#ff52a6,#ff4a98,#ff428c,#ff3b81,#ff3577,#ff306e,#ff2b66,#ff265f,#ff2258,#ff1f52,#ff1b4c,#ff1847,#ff1542,#ff123e,#ff1039,#ff0d36,#ff0b32,#ff092e,#ff072b,#ff0628,#ff0425,#ff0323,#ff0120,#ff001e,#ff001b)"></i><i style="margin-left:50px;width:293px;background:linear-gradient(90deg,#009fff,#079eff,#149cff,#229bff,#3199ff,#4297ff,#5395ff,#6694ff,#7992ff,#8d90ff,#a38eff,#b98cff,#d189ff,#ea87ff,#ff82fa,#ff74e2,#ff67ce,#ff5cbc,#ff52ac,#ff4a9e,#ff4292,#ff3c86,#ff367c,#ff3073,#ff2b6b,#ff2763,#ff225c,#ff1f56,#ff1b50,#ff184b,#ff1546,#ff1241,#ff103d,#ff0d39,#ff0b35,#ff0931,#ff072e,#ff062b,#ff0428,#ff0325,#ff0122,#ff0020,#ff001e)"></i><i style="margin-left:49px;width:289px;background:linear-gradient(90deg,#009bff,#069aff,#1398ff,#2196ff,#3195ff,#4193ff,#5391ff,#658fff,#788dff,#8d8bff,#a289ff,#b987ff,#d085ff,#e982ff,#ff7efb,#ff6fe3,#ff63ce,#ff58bc,#ff4fac,#ff479e,#ff3f92,#ff3986,#ff337c,#ff2d73,#ff296b,#ff2463,#ff205c,#ff1c56,#ff1950,#ff164b,#ff1346,#ff1041,#ff0e3d,#ff0c39,#ff0a35,#ff0831,#ff062e,#ff042b,#ff0328,#ff0225,#ff0022,#ff0020)"></i><i style="margin-left:48px;width:286px;background:linear-gradient(90deg,#0098ff,#0696ff,#1294ff,#2093ff,#2f91ff,#3f8fff,#508dff,#628bff,#7589ff,#8987ff,#9d85ff,#b383ff,#ca80ff,#e27eff,#fb7cff,#ff6fea,#ff63d5,#ff58c2,#ff4fb2,#ff46a4,#ff3f97,#ff388b,#ff3281,#ff2d77,#ff286f,#ff2467,#ff2060,#ff1c59,#ff1953,#ff164e,#ff1349,#ff1044,#ff0e3f,#ff0c3b,#ff0a37,#ff0834,#ff0630,#ff042d,#ff032a,#ff0127,#ff0024,#ff0022)"></i><i style="margin-left:48px;width:281px;background:linear-gradient(90deg,#0094ff,#0792ff,#1390ff,#228eff,#318dff,#418bff,#5289ff,#6487ff,#7785ff,#8a82ff,#9f80ff,#b57eff,#cc7cff,#e479ff,#fd77ff,#ff6ae8,#ff5ed3,#ff53c1,#ff4ab1,#ff42a3,#ff3b96,#ff358a,#ff2f80,#ff2a77,#ff256e,#ff2167,#ff1d60,#ff1a59,#ff1753,#ff144e,#ff1148,#ff0e44,#ff0c3f,#ff0a3b,#ff0837,#ff0634,#ff0430,#ff032d,#ff012a,#ff0027,#ff0024)"></i><i style="margin-left:47px;width:277px;background:linear-gradient(90deg,#0090ff,#068eff,#128cff,#208bff,#2f89ff,#3e87ff,#4f85ff,#6083ff,#7281ff,#857fff,#9a7cff,#af7aff,#c578ff,#dc75ff,#f473ff,#ff6af1,#ff5edb,#ff54c8,#ff4bb8,#ff43a9,#ff3c9c,#ff3590,#ff2f86,#ff2a7c,#ff2673,#ff216b,#ff1d64,#ff1a5d,#ff1757,#ff1451,#ff114c,#ff0e47,#ff0c43,#ff0a3e,#ff083a,#ff0637,#ff0433,#ff0330,#ff022d,#ff002a,#ff0027)"></i><i style="margin-left:46px;width:273px;background:linear-gradient(90deg,#008cff,#068aff,#1289ff,#2087ff,#2e85ff,#3e83ff,#4e81ff,#607fff,#727dff,#857bff,#9978ff,#ae76ff,#c573ff,#dc71ff,#f46eff,#ff66f1,#ff5adb,#ff50c8,#ff47b8,#ff3fa9,#ff389c,#ff3290,#ff2d85,#ff287c,#ff2373,#ff1f6b,#ff1b64,#ff185d,#ff1557,#ff1251,#ff0f4c,#ff0d47,#ff0a42,#ff083e,#ff063a,#ff0536,#ff0333,#ff0230,#ff002d,#ff002a)"></i><i style="margin-left:46px;width:269px;background:linear-gradient(90deg,#0088ff,#0787ff,#1385ff,#2183ff,#3081ff,#407fff,#507dff,#627bff,#7478ff,#8876ff,#9c74ff,#b171ff,#c86fff,#df6cff,#f869ff,#ff60ee,#ff55d8,#ff4bc6,#ff42b5,#ff3ba7,#ff349a,#ff2e8e,#ff2984,#ff247a,#ff2072,#ff1c6a,#ff1863,#ff155c,#ff1256,#ff0f50,#ff0d4b,#ff0b46,#ff0842,#ff063d,#ff0539,#ff0336,#ff0232,#ff002f,#ff002c)"></i><i style="margin-left:45px;width:265px;background:linear-gradient(90deg,#0085ff,#0683ff,#1281ff,#207fff,#2e7dff,#3d7bff,#4d79ff,#5e77ff,#7075ff,#8373ff,#9670ff,#ab6eff,#c16bff,#d769ff,#ef66ff,#ff60f7,#ff55e1,#ff4bce,#ff43bd,#ff3bae,#ff35a0,#ff2f94,#ff2989,#ff2480,#ff2077,#ff1c6f,#ff1967,#ff1560,#ff125a,#ff0f54,#ff0d4f,#ff0b4a,#ff0845,#ff0641,#ff053d,#ff0339,#ff0235,#ff0032,#ff002f)"></i><i style="margin-left:44px;width:261px;background:linear-gradient(90deg,#0081ff,#0680ff,#127eff,#1f7cff,#2e7aff,#3d78ff,#4d76ff,#5e73ff,#7071ff,#836fff,#966cff,#ab6aff,#c167ff,#d765ff,#ef62ff,#ff5cf7,#ff51e1,#ff48cd,#ff3fbc,#ff38ad,#ff31a0,#ff2c94,#ff2689,#ff227f,#ff1e76,#ff1a6e,#ff1667,#ff1360,#ff105a,#ff0e54,#ff0b4f,#ff0949,#ff0745,#ff0540,#ff033c,#ff0239,#ff0035,#ff0032)"></i><i style="margin-left:43px;width:257px;background:linear-gradient(90deg,#007eff,#057cff,#117aff,#1e78ff,#2c76ff,#3b74ff,#4a72ff,#5b70ff,#6c6eff,#7e6bff,#9169ff,#a567ff,#ba64ff,#cf61ff,#e65fff,#fe5cff,#ff51e9,#ff48d5,#ff40c4,#ff38b4,#ff32a7,#ff2c9a,#ff278f,#ff2285,#ff1e7c,#ff1a73,#ff166c,#ff1365,#ff105e,#ff0e58,#ff0b52,#ff094d,#ff0748,#ff0544,#ff0340,#ff023c,#ff0038,#ff0035)"></i><i style="margin-left:43px;width:252px;background:linear-gradient(90deg,#007bff,#0679ff,#1277ff,#1f75ff,#2d73ff,#3c71ff,#4c6eff,#5c6cff,#6e6aff,#8067ff,#9365ff,#a762ff,#bc60ff,#d25dff,#e85aff,#ff57fe,#ff4ce7,#ff43d4,#ff3bc2,#ff34b3,#ff2ea5,#ff2999,#ff248e,#ff1f84,#ff1b7b,#ff1773,#ff146b,#ff1164,#ff0e5e,#ff0c58,#ff0952,#ff074d,#ff0548,#ff0344,#ff023f,#ff003c,#ff0038)"></i><i style="margin-left:42px;width:249px;background:linear-gradient(90deg,#0077ff,#0675ff,#1174ff,#1e72ff,#2c6fff,#3a6dff,#496bff,#5969ff,#6a67ff,#7c64ff,#8e62ff,#a25fff,#b65dff,#cb5aff,#e157ff,#f854ff,#ff4cef,#ff43db,#ff3bc9,#ff34b9,#ff2eab,#ff289e,#ff2393,#ff1f89,#ff1b7f,#ff1777,#ff146f,#ff1168,#ff0e61,#ff0b5b,#ff0955,#ff0750,#ff054b,#ff0347,#ff0242,#ff003e,#ff003b)"></i><i style="margin-left:41px;width:245px;background:linear-gradient(90deg,#0074ff,#0672ff,#1170ff,#1e6eff,#2b6cff,#3a6aff,#4968ff,#5965ff,#6a63ff,#7c61ff,#8e5eff,#a25cff,#b659ff,#cb56ff,#e153ff,#f950ff,#ff48ee,#ff3fda,#ff38c8,#ff31b9,#ff2bab,#ff259e,#ff2193,#ff1c88,#ff187f,#ff1576,#ff126f,#ff0f67,#ff0c61,#ff095b,#ff0755,#ff0550,#ff034b,#ff0246,#ff0042,#ff003e)"></i><i style="margin-left:40px;width:241px;background:linear-gradient(90deg,#0071ff,#056fff,#116dff,#1d6bff,#2b69ff,#3a67ff,#4964ff,#5962ff,#6a60ff,#7c5dff,#8f5aff,#a258ff,#b655ff,#cc52ff,#e24fff,#f94cff,#ff44ee,#ff3cd9,#ff34c8,#ff2eb8,#ff28aa,#ff239d,#ff1e92,#ff1a88,#ff167e,#ff1276,#ff0f6e,#ff0d67,#ff0a60,#ff085a,#ff0655,#ff044f,#ff024a,#ff0046,#ff0042)"></i><i style="margin-left:40px;width:236px;background:linear-gradient(90deg,#006eff,#066cff,#116aff,#1e68ff,#2b66ff,#3963ff,#4861ff,#585fff,#685cff,#795aff,#8b57ff,#9e55ff,#b152ff,#c64fff,#db4cff,#f24aff,#ff44f5,#ff3be1,#ff34cf,#ff2dbf,#ff28b0,#ff22a3,#ff1e98,#ff1a8d,#ff1684,#ff127b,#ff0f73,#ff0d6c,#ff0a65,#ff085f,#ff0659,#ff0453,#ff024e,#ff004a,#ff0045)"></i><i style="margin-left:39px;width:233px;background:linear-gradient(90deg,#006bff,#0669ff,#1167ff,#1e65ff,#2b62ff,#3960ff,#485eff,#585bff,#6959ff,#7a56ff,#8c54ff,#9f51ff,#b34eff,#c84bff,#dd49ff,#f446ff,#ff3ff3,#ff37df,#ff30cd,#ff2abd,#ff24ae,#ff1fa1,#ff1b96,#ff178c,#ff1382,#ff1079,#ff0d71,#ff0a6a,#ff0863,#ff065d,#ff0457,#ff0252,#ff004d,#ff0048)"></i><i style="margin-left:38px;width:229px;background:linear-gradient(90deg,#0068ff,#0566ff,#1064ff,#1c62ff,#2960ff,#375dff,#455bff,#5559ff,#6556ff,#7554ff,#8751ff,#994fff,#ac4cff,#c049ff,#d546ff,#ea43ff,#ff40fd,#ff37e8,#ff30d5,#ff2ac4,#ff24b6,#ff1fa8,#ff1b9d,#ff1792,#ff1388,#ff107f,#ff0d77,#ff0a6f,#ff0868,#ff0662,#ff045c,#ff0256,#ff0051,#ff004c)"></i><i style="margin-left:37px;width:225px;background:linear-gradient(90deg,#0065ff,#0563ff,#1061ff,#1c5fff,#295dff,#375aff,#4558ff,#5555ff,#6553ff,#7650ff,#874eff,#9a4bff,#ad48ff,#c145ff,#d643ff,#eb3fff,#ff3cfc,#ff34e7,#ff2dd4,#ff27c3,#ff21b5,#ff1ca8,#ff189c,#ff1491,#ff1187,#ff0e7e,#ff0b76,#ff086f,#ff0668,#ff0461,#ff025b,#ff0056,#ff0051)"></i><i style="margin-left:37px;width:220px;background:linear-gradient(90deg,#0062ff,#0660ff,#115eff,#1d5cff,#2b59ff,#3857ff,#4755ff,#5752ff,#6750ff,#784dff,#894aff,#9c47ff,#af45ff,#c342ff,#d83fff,#ee3cff,#ff37f9,#ff30e4,#ff29d2,#ff23c1,#ff1eb3,#ff19a6,#ff159a,#ff128f,#ff0e86,#ff0b7d,#ff0975,#ff066d,#ff0467,#ff0260,#ff005a,#ff0055)"></i><i style="margin-left:36px;width:217px;background:linear-gradient(90deg,#005fff,#055dff,#105bff,#1c59ff,#2957ff,#3654ff,#4552ff,#544fff,#634dff,#744aff,#8548ff,#9745ff,#a942ff,#bd3fff,#d13cff,#e639ff,#fd36ff,#ff2fec,#ff29d9,#ff23c8,#ff1eb9,#ff19ac,#ff15a0,#ff1195,#ff0e8b,#ff0b82,#ff087a,#ff0672,#ff046b,#ff0264,#ff005e,#ff0059)"></i><i style="margin-left:35px;width:213px;background:linear-gradient(90deg,#005dff,#055aff,#1058ff,#1c56ff,#2954ff,#3651ff,#454fff,#544cff,#644aff,#7447ff,#8545ff,#9742ff,#aa3fff,#be3cff,#d239ff,#e836ff,#fe33ff,#ff2cea,#ff25d8,#ff20c7,#ff1bb8,#ff16ab,#ff129f,#ff0f94,#ff0c8a,#ff0981,#ff0679,#ff0471,#ff026a,#ff0063,#ff005d)"></i><i style="margin-left:35px;width:208px;background:linear-gradient(90deg,#005aff,#0657ff,#1055ff,#1c53ff,#2951ff,#364fff,#444cff,#524aff,#6147ff,#7145ff,#8242ff,#933fff,#a53dff,#b83aff,#cc37ff,#e034ff,#f531ff,#ff2bf3,#ff25e0,#ff1fcf,#ff1bbf,#ff16b2,#ff12a5,#ff0f9a,#ff0c90,#ff0987,#ff067e,#ff0476,#ff026f,#ff0069,#ff0062)"></i><i style="margin-left:34px;width:204px;background:linear-gradient(90deg,#0057ff,#0655ff,#1053ff,#1c50ff,#284eff,#364cff,#4449ff,#5247ff,#6244ff,#7242ff,#823fff,#943cff,#a639ff,#b936ff,#cd33ff,#e130ff,#f72dff,#ff28f2,#ff22de,#ff1ccd,#ff18be,#ff13b0,#ff10a4,#ff0c99,#ff098f,#ff0786,#ff047d,#ff0275,#ff006e,#ff0067)"></i><i style="margin-left:33px;width:200px;background:linear-gradient(90deg,#0054ff,#0552ff,#0f50ff,#1a4eff,#274cff,#3349ff,#4147ff,#4f45ff,#5e42ff,#6d3fff,#7d3dff,#8e3aff,#9f37ff,#b235ff,#c532ff,#d82fff,#ed2cff,#ff28fc,#ff22e8,#ff1cd6,#ff18c7,#ff14b8,#ff10ac,#ff0ca0,#ff0996,#ff078c,#ff0483,#ff027b,#ff0174,#ff006d)"></i><i style="margin-left:32px;width:197px;background:linear-gradient(90deg,#0052ff,#0550ff,#0f4eff,#1b4bff,#2749ff,#3447ff,#4144ff,#5042ff,#5f3fff,#6e3cff,#7f3aff,#9037ff,#a234ff,#b431ff,#c72eff,#db2bff,#f028ff,#ff24f8,#ff1ee4,#ff19d3,#ff14c3,#ff10b5,#ff0da9,#ff0a9d,#ff0793,#ff048a,#ff0281,#ff0079,#ff0072)"></i><i style="margin-left:32px;width:192px;background:linear-gradient(90deg,#004fff,#064dff,#104bff,#1c48ff,#2846ff,#3544ff,#4341ff,#523fff,#613cff,#7139ff,#8137ff,#9234ff,#a431ff,#b72eff,#ca2bff,#de28ff,#f425ff,#ff20f5,#ff1ae1,#ff16d0,#ff11c1,#ff0eb3,#ff0aa7,#ff079b,#ff0591,#ff0288,#ff007f,#ff0077)"></i><i style="margin-left:31px;width:188px;background:linear-gradient(90deg,#004dff,#054bff,#0f48ff,#1a46ff,#2644ff,#3341ff,#403fff,#4e3cff,#5d3aff,#6c37ff,#7c35ff,#8c32ff,#9d2fff,#af2cff,#c229ff,#d526ff,#e923ff,#fe20ff,#ff1bec,#ff16da,#ff11ca,#ff0ebc,#ff0aaf,#ff07a3,#ff0598,#ff028f,#ff0186,#ff007e)"></i><i style="margin-left:30px;width:184px;background:linear-gradient(90deg,#004aff,#0548ff,#0f46ff,#1a44ff,#2641ff,#333fff,#413cff,#4f3aff,#5d37ff,#6d35ff,#7d32ff,#8d2fff,#9f2cff,#b129ff,#c426ff,#d723ff,#eb20ff,#ff1dfd,#ff17e9,#ff13d8,#ff0fc8,#ff0bb9,#ff08ad,#ff05a1,#ff0397,#ff018d,#ff0084)"></i><i style="margin-left:29px;width:181px;background:linear-gradient(90deg,#0048ff,#0446ff,#0e44ff,#1941ff,#253fff,#313dff,#3e3aff,#4c38ff,#5a35ff,#6933ff,#7830ff,#882dff,#992aff,#ab27ff,#bd25ff,#cf22ff,#e31eff,#f71bff,#ff17f2,#ff12e0,#ff0ecf,#ff0bc1,#ff08b4,#ff05a8,#ff029d,#ff0093,#ff008a)"></i><i style="margin-left:29px;width:176px;background:linear-gradient(90deg,#0045ff,#0543ff,#0f41ff,#1b3fff,#263cff,#333aff,#4037ff,#4e35ff,#5c32ff,#6b30ff,#7b2dff,#8b2aff,#9c27ff,#ad24ff,#c021ff,#d31eff,#e61bff,#fb18ff,#ff13ef,#ff0fdd,#ff0bcd,#ff08be,#ff05b1,#ff03a5,#ff009b,#ff0091)"></i><i style="margin-left:28px;width:172px;background:linear-gradient(90deg,#0043ff,#0541ff,#0e3fff,#193dff,#243aff,#3038ff,#3d35ff,#4a33ff,#5830ff,#662eff,#752bff,#8529ff,#9526ff,#a623ff,#b720ff,#c91dff,#dc1aff,#f017ff,#ff14fa,#ff0fe7,#ff0bd6,#ff08c7,#ff05ba,#ff03ae,#ff01a3,#ff0098)"></i><i style="margin-left:27px;width:168px;background:linear-gradient(90deg,#0041ff,#053fff,#0e3dff,#193aff,#2538ff,#3135ff,#3d33ff,#4b30ff,#592eff,#672bff,#7629ff,#8626ff,#9623ff,#a820ff,#b91dff,#cc1aff,#df17ff,#f314ff,#ff10f7,#ff0ce4,#ff09d4,#ff06c5,#ff03b8,#ff01ab,#ff00a0)"></i><i style="margin-left:27px;width:164px;background:linear-gradient(90deg,#003eff,#063cff,#103aff,#1b38ff,#2635ff,#3333ff,#4030ff,#4d2eff,#5c2bff,#6a28ff,#7a26ff,#8a23ff,#9b20ff,#ac1dff,#be1aff,#d117ff,#e414ff,#f911ff,#ff0df1,#ff09df,#ff06cf,#ff03c0,#ff00b3,#ff00a7)"></i><i style="margin-left:26px;width:160px;background:linear-gradient(90deg,#003cff,#053aff,#0f38ff,#1936ff,#2433ff,#3031ff,#3d2eff,#4a2cff,#5729ff,#6627ff,#7424ff,#8421ff,#941fff,#a41cff,#b519ff,#c716ff,#da13ff,#ed10ff,#ff0dfd,#ff09ea,#ff06d9,#ff03ca,#ff00bc,#ff00b0)"></i><i style="margin-left:25px;width:156px;background:linear-gradient(90deg,#003aff,#0538ff,#0e36ff,#1933ff,#2531ff,#312fff,#3d2cff,#4a29ff,#5827ff,#6724ff,#7621ff,#851fff,#951cff,#a619ff,#b816ff,#ca13ff,#dd10ff,#f00dff,#ff0af9,#ff06e7,#ff03d6,#ff01c7,#ff00b9)"></i><i style="margin-left:24px;width:152px;background:linear-gradient(90deg,#0038ff,#0436ff,#0d34ff,#1832ff,#232fff,#2e2dff,#3a2aff,#4728ff,#5425ff,#6223ff,#7020ff,#7f1dff,#8f1bff,#9f18ff,#af15ff,#c012ff,#d20fff,#e50cff,#f809ff,#ff06f2,#ff03e1,#ff01d1,#ff00c3)"></i><i style="margin-left:24px;width:147px;background:linear-gradient(90deg,#0036ff,#0534ff,#0f31ff,#192fff,#242dff,#302aff,#3c28ff,#4925ff,#5623ff,#6420ff,#731dff,#821bff,#9118ff,#a215ff,#b212ff,#c40fff,#d60dff,#e90aff,#fd07ff,#ff03ee,#ff01dd,#ff00ce)"></i><i style="margin-left:23px;width:144px;background:linear-gradient(90deg,#0034ff,#0532ff,#0e30ff,#182dff,#222bff,#2e29ff,#3a26ff,#4624ff,#5321ff,#601fff,#6e1cff,#7d19ff,#8c17ff,#9b14ff,#ab11ff,#bc0eff,#ce0cff,#e009ff,#f206ff,#ff03f9,#ff01e7,#ff00d7)"></i><i style="margin-left:22px;width:140px;background:linear-gradient(90deg,#0032ff,#0430ff,#0e2dff,#182bff,#2329ff,#2e26ff,#3a24ff,#4721ff,#541fff,#611cff,#701aff,#7e17ff,#8e14ff,#9e11ff,#ae0fff,#bf0cff,#d109ff,#e306ff,#f603ff,#ff01f4,#ff00e3)"></i><i style="margin-left:21px;width:136px;background:linear-gradient(90deg,#0030ff,#042eff,#0e2bff,#1829ff,#2327ff,#2f24ff,#3b22ff,#481fff,#551dff,#631aff,#7117ff,#8014ff,#9012ff,#a00fff,#b10cff,#c309ff,#d506ff,#e803ff,#fb01ff,#ff00f0)"></i><i style="margin-left:21px;width:131px;background:linear-gradient(90deg,#002eff,#052cff,#0e29ff,#1827ff,#2225ff,#2d22ff,#3920ff,#451eff,#521bff,#5f19ff,#6d16ff,#7b13ff,#8a11ff,#990eff,#a90bff,#b909ff,#ca06ff,#dc03ff,#ee01ff,#ff00fd)"></i><i style="margin-left:20px;width:128px;background:linear-gradient(90deg,#002cff,#052aff,#0e27ff,#1825ff,#2323ff,#2e20ff,#3a1eff,#471bff,#5419ff,#6116ff,#7013ff,#7e11ff,#8d0eff,#9d0bff,#ae09ff,#bf06ff,#d003ff,#e301ff,#f500ff)"></i><i style="margin-left:19px;width:124px;background:linear-gradient(90deg,#002aff,#0428ff,#0d26ff,#1724ff,#2121ff,#2c1fff,#371cff,#431aff,#4f18ff,#5c15ff,#6a13ff,#7810ff,#860dff,#950bff,#a408ff,#b406ff,#c503ff,#d601ff,#e800ff)"></i><i style="margin-left:18px;width:120px;background:linear-gradient(90deg,#0028ff,#0426ff,#0d24ff,#1722ff,#211fff,#2c1dff,#381aff,#4418ff,#5115ff,#5e13ff,#6c10ff,#7a0eff,#890bff,#9808ff,#a806ff,#b803ff,#c901ff,#db00ff)"></i><i style="margin-left:18px;width:115px;background:linear-gradient(90deg,#0026ff,#0524ff,#0e22ff,#181fff,#231dff,#2e1bff,#3a18ff,#4616ff,#5313ff,#6110ff,#6f0eff,#7d0bff,#8c09ff,#9c06ff,#ac03ff,#bd01ff,#ce00ff)"></i><i style="margin-left:17px;width:112px;background:linear-gradient(90deg,#0025ff,#0422ff,#0d20ff,#171eff,#211cff,#2c19ff,#3717ff,#4314ff,#4f12ff,#5c0fff,#6a0dff,#770aff,#8608ff,#9505ff,#a403ff,#b400ff,#c500ff)"></i><i style="margin-left:16px;width:108px;background:linear-gradient(90deg,#0023ff,#0421ff,#0d1eff,#171cff,#221aff,#2d17ff,#3815ff,#4512ff,#5110ff,#5e0dff,#6c0bff,#7a08ff,#8906ff,#9803ff,#a801ff,#b900ff)"></i><i style="margin-left:16px;width:103px;background:linear-gradient(90deg,#0021ff,#051fff,#0d1dff,#171aff,#2018ff,#2b16ff,#3614ff,#4111ff,#4d0fff,#5a0cff,#660aff,#7408ff,#8105ff,#9003ff,#9e01ff,#ae00ff)"></i><i style="margin-left:15px;width:99px;background:linear-gradient(90deg,#001fff,#051dff,#0d1bff,#1719ff,#2116ff,#2c14ff,#3712ff,#430fff,#4f0dff,#5c0aff,#6908ff,#7705ff,#8503ff,#9301ff,#a300ff)"></i><i style="margin-left:14px;width:95px;background:linear-gradient(90deg,#001eff,#041cff,#0c19ff,#1517ff,#1f15ff,#2913ff,#3311ff,#3e0eff,#4a0cff,#560aff,#6207ff,#6f05ff,#7c03ff,#8a01ff,#9800ff)"></i><i style="margin-left:13px;width:92px;background:linear-gradient(90deg,#001cff,#041aff,#0c18ff,#1615ff,#2013ff,#2a11ff,#350fff,#410cff,#4d0aff,#5907ff,#6605ff,#7403ff,#8201ff,#9000ff)"></i><i style="margin-left:13px;width:87px;background:linear-gradient(90deg,#001aff,#0518ff,#0e16ff,#1714ff,#2211ff,#2c0fff,#380cff,#440aff,#5008ff,#5d05ff,#6a03ff,#7801ff,#8600ff)"></i><i style="margin-left:12px;width:83px;background:linear-gradient(90deg,#0019ff,#0417ff,#0c15ff,#1512ff,#1f10ff,#290eff,#340cff,#3f09ff,#4a07ff,#5605ff,#6303ff,#7001ff,#7d00ff)"></i><i style="margin-left:11px;width:79px;background:linear-gradient(90deg,#0017ff,#0415ff,#0d13ff,#1611ff,#200eff,#2b0cff,#360aff,#4107ff,#4d05ff,#5903ff,#6601ff,#7400ff)"></i><i style="margin-left:10px;width:76px;background:linear-gradient(90deg,#0016ff,#0314ff,#0c12ff,#1410ff,#1e0dff,#280bff,#3209ff,#3d07ff,#4805ff,#5402ff,#6000ff,#6d00ff)"></i><i style="margin-left:10px;width:71px;background:linear-gradient(90deg,#0014ff,#0412ff,#0d10ff,#160eff,#200bff,#2a09ff,#3507ff,#4005ff,#4c03ff,#5801ff,#6400ff)"></i><i style="margin-left:9px;width:67px;background:linear-gradient(90deg,#0013ff,#0411ff,#0b0fff,#140dff,#1d0bff,#2608ff,#3006ff,#3b04ff,#4502ff,#5000ff,#5c00ff)"></i><i style="margin-left:8px;width:63px;background:linear-gradient(90deg,#0011ff,#040fff,#0c0dff,#150bff,#1e09ff,#2807ff,#3205ff,#3d03ff,#4801ff,#5400ff)"></i><i style="margin-left:8px;width:59px;background:linear-gradient(90deg,#0010ff,#050eff,#0e0bff,#1709ff,#2107ff,#2b05ff,#3603ff,#4200ff,#4e00ff)"></i><i style="margin-left:7px;width:55px;background:linear-gradient(90deg,#000eff,#040cff,#0c0aff,#1408ff,#1e06ff,#2704ff,#3102ff,#3c00ff,#4600ff)"></i><i style="margin-left:6px;width:51px;background:linear-gradient(90deg,#000dff,#040bff,#0c09ff,#1607ff,#1f05ff,#2903ff,#3401ff,#3f00ff)"></i><i style="margin-left:5px;width:47px;background:linear-gradient(90deg,#000cff,#030aff,#0b08ff,#1306ff,#1c04ff,#2502ff,#2e00ff,#3800ff)"></i><i style="margin-left:5px;width:42px;background:linear-gradient(90deg,#000aff,#0408ff,#0c06ff,#1504ff,#1e02ff,#2701ff,#3200ff)"></i><i style="margin-left:4px;width:39px;background:linear-gradient(90deg,#0009ff,#0307ff,#0b06ff,#1204ff,#1b02ff,#2300ff,#2c00ff)"></i><i style="margin-left:3px;width:35px;background:linear-gradient(90deg,#0008ff,#0406ff,#0b04ff,#1402ff,#1d00ff,#2600ff)"></i><i style="margin-left:2px;width:31px;background:linear-gradient(90deg,#0007ff,#0405ff,#0d03ff,#1601ff,#2000ff)"></i><i style="margin-left:2px;width:26px;background:linear-gradient(90deg,#0005ff,#0404ff,#0b02ff,#1200ff,#1a00ff)"></i><i style="margin-left:1px;width:23px;background:linear-gradient(90deg,#0004ff,#0402ff,#0d01ff,#1600ff)"></i><i style="margin-left:0px;width:19px;background:linear-gradient(90deg,#0003ff,#0302ff,#0a00ff,#1100ff)"></i><i style="margin-left:0px;width:14px;background:linear-gradient(90deg,#0002ff,#0400ff,#0c00ff)"></i><i style="margin-left:0px;width:9px;background:linear-gradient(90deg,#0001ff,#0700ff)"></i><i style="margin-left:0px;width:5px;background:linear-gradient(90deg,#0000ff,#0400ff)"></i></div><svg width="1920" height="730"><rect x="1159.400" y="115.200" width="2" height="563.300" fill="#a8a8a8"/><rect x="1898" y="115.200" width="2" height="563.300" fill="#a8a8a8"/><rect x="1159.400" y="115.200" width="740.600" height="2" fill="#a8a8a8"/><rect x="1153.400" y="676.500" width="746.600" height="2" fill="#a8a8a8"/><rect x="1159.4" y="677.500" width="2" height="7" fill="#a8a8a8"/><text x="1159.6" y="702.6" font-size="16.2" fill="#e4e4e4" text-anchor="middle">0</text><rect x="1247.25" y="677.500" width="2" height="7" fill="#a8a8a8"/><text x="1247.45" y="702.6" font-size="16.2" fill="#e4e4e4" text-anchor="middle">0,1</text><rect x="1153.400" y="609.8" width="7" height="2" fill="#a8a8a8"/><text x="1153.2" y="617.1" font-size="16.2" fill="#e4e4e4" text-anchor="end">0,1</text><rect x="1335.1" y="677.500" width="2" height="7" fill="#a8a8a8"/><text x="1335.3" y="702.6" font-size="16.2" fill="#e4e4e4" text-anchor="middle">0,2</text><rect x="1153.400" y="543.1" width="7" height="2" fill="#a8a8a8"/><text x="1153.2" y="550.4" font-size="16.2" fill="#e4e4e4" text-anchor="end">0,2</text><rect x="1422.95" y="677.500" width="2" height="7" fill="#a8a8a8"/><text x="1423.15" y="702.6" font-size="16.2" fill="#e4e4e4" text-anchor="middle">0,3</text><rect x="1153.400" y="476.4" width="7" height="2" fill="#a8a8a8"/><text x="1153.2" y="483.7" font-size="16.2" fill="#e4e4e4" text-anchor="end">0,3</text><rect x="1510.8" y="677.500" width="2" height="7" fill="#a8a8a8"/><text x="1511" y="702.6" font-size="16.2" fill="#e4e4e4" text-anchor="middle">0,4</text><rect x="1153.400" y="409.7" width="7" height="2" fill="#a8a8a8"/><text x="1153.2" y="417" font-size="16.2" fill="#e4e4e4" text-anchor="end">0,4</text><rect x="1598.65" y="677.500" width="2" height="7" fill="#a8a8a8"/><text x="1598.85" y="702.6" font-size="16.2" fill="#e4e4e4" text-anchor="middle">0,5</text><rect x="1153.400" y="343" width="7" height="2" fill="#a8a8a8"/><text x="1153.2" y="350.3" font-size="16.2" fill="#e4e4e4" text-anchor="end">0,5</text><rect x="1686.5" y="677.500" width="2" height="7" fill="#a8a8a8"/><text x="1686.7" y="702.6" font-size="16.2" fill="#e4e4e4" text-anchor="middle">0,6</text><rect x="1153.400" y="276.3" width="7" height="2" fill="#a8a8a8"/><text x="1153.2" y="283.6" font-size="16.2" fill="#e4e4e4" text-anchor="end">0,6</text><rect x="1774.35" y="677.500" width="2" height="7" fill="#a8a8a8"/><text x="1774.55" y="702.6" font-size="16.2" fill="#e4e4e4" text-anchor="middle">0,7</text><rect x="1153.400" y="209.6" width="7" height="2" fill="#a8a8a8"/><text x="1153.2" y="216.9" font-size="16.2" fill="#e4e4e4" text-anchor="end">0,7</text><rect x="1862.2" y="677.500" width="2" height="7" fill="#a8a8a8"/><text x="1862.4" y="702.6" font-size="16.2" fill="#e4e4e4" text-anchor="middle">0,8</text><rect x="1153.400" y="142.9" width="7" height="2" fill="#a8a8a8"/><text x="1153.2" y="150.2" font-size="16.2" fill="#e4e4e4" text-anchor="end">0,8</text><text x="1153.2" y="683.8" font-size="16.2" fill="#e4e4e4" text-anchor="end">0</text><text x="1471.8" y="110.6" font-size="16.5" fill="#e4e4e4" textLength="86.4" lengthAdjust="spacingAndGlyphs">CIE 1931 xy</text><rect x="1483.4" y="448.6" width="15.2" height="15.2" fill="none" stroke="#fff" stroke-width="1.7"/><rect x="1542.4" y="448.6" width="15.2" height="15.2" fill="none" stroke="#fff" stroke-width="1.7"/><rect x="1594.7" y="448.6" width="15.2" height="15.2" fill="none" stroke="#fff" stroke-width="1.7"/><rect x="1650.8" y="448.6" width="15.2" height="15.2" fill="none" stroke="#fff" stroke-width="1.7"/><rect x="1714.4" y="448.6" width="15.2" height="15.2" fill="none" stroke="#fff" stroke-width="1.7"/><rect x="1424.2" y="412.8" width="15.2" height="15.2" fill="none" stroke="#fff" stroke-width="1.7"/><rect x="1422.9" y="377.5" width="15.2" height="15.2" fill="none" stroke="#fff" stroke-width="1.7"/><rect x="1420" y="342.9" width="15.2" height="15.2" fill="none" stroke="#fff" stroke-width="1.7"/><rect x="1418.1" y="307.4" width="15.2" height="15.2" fill="none" stroke="#fff" stroke-width="1.7"/><rect x="1414.9" y="268.3" width="15.2" height="15.2" fill="none" stroke="#fff" stroke-width="1.7"/><rect x="1397.8" y="485.9" width="15.2" height="15.2" fill="none" stroke="#fff" stroke-width="1.7"/><rect x="1369.8" y="521.4" width="15.2" height="15.2" fill="none" stroke="#fff" stroke-width="1.7"/><rect x="1342" y="555.5" width="15.2" height="15.2" fill="none" stroke="#fff" stroke-width="1.7"/><rect x="1314.2" y="589.7" width="15.2" height="15.2" fill="none" stroke="#fff" stroke-width="1.7"/><rect x="1283" y="628.1" width="15.2" height="15.2" fill="none" stroke="#fff" stroke-width="1.7"/><rect x="1411.7" y="449.8" width="15.2" height="15.2" fill="none" stroke="#fff" stroke-width="1.7"/><rect x="1396.9" y="449.8" width="15.2" height="15.2" fill="none" stroke="#fff" stroke-width="1.7"/><rect x="1381.2" y="449.8" width="15.2" height="15.2" fill="none" stroke="#fff" stroke-width="1.7"/><rect x="1365.4" y="449.8" width="15.2" height="15.2" fill="none" stroke="#fff" stroke-width="1.7"/><rect x="1349.3" y="449.8" width="15.2" height="15.2" fill="none" stroke="#fff" stroke-width="1.7"/><rect x="1428.6" y="473.4" width="15.2" height="15.2" fill="none" stroke="#fff" stroke-width="1.7"/><rect x="1430.4" y="498" width="15.2" height="15.2" fill="none" stroke="#fff" stroke-width="1.7"/><rect x="1430.4" y="518.5" width="15.2" height="15.2" fill="none" stroke="#fff" stroke-width="1.7"/><rect x="1431.9" y="542.1" width="15.2" height="15.2" fill="none" stroke="#fff" stroke-width="1.7"/><rect x="1433.6" y="566.5" width="15.2" height="15.2" fill="none" stroke="#fff" stroke-width="1.7"/><rect x="1446" y="425.1" width="15.2" height="15.2" fill="none" stroke="#fff" stroke-width="1.7"/><rect x="1465" y="400.4" width="15.2" height="15.2" fill="none" stroke="#fff" stroke-width="1.7"/><rect x="1483.5" y="378.8" width="15.2" height="15.2" fill="none" stroke="#fff" stroke-width="1.7"/><rect x="1500.5" y="356.8" width="15.2" height="15.2" fill="none" stroke="#fff" stroke-width="1.7"/><rect x="1520.5" y="332.4" width="15.2" height="15.2" fill="none" stroke="#fff" stroke-width="1.7"/><rect x="1427.2" y="449.7" width="15.4" height="15.4" fill="none" stroke="#000" stroke-width="2"/><circle cx="1493.8" cy="449.8" r="4.75" fill="#c19c9c" stroke="#000" stroke-width="1.4"/><circle cx="1560.6" cy="449.8" r="4.75" fill="#c18282" stroke="#000" stroke-width="1.4"/><circle cx="1617.9" cy="451.3" r="4.75" fill="#c16464" stroke="#000" stroke-width="1.4"/><circle cx="1678.7" cy="453" r="4.75" fill="#c13e3e" stroke="#000" stroke-width="1.4"/><circle cx="1736.1" cy="453" r="4.75" fill="#c10000" stroke="#000" stroke-width="1.4"/><circle cx="1429" cy="411.1" r="4.75" fill="#9cc19c" stroke="#000" stroke-width="1.4"/><circle cx="1422.6" cy="374.1" r="4.75" fill="#82c182" stroke="#000" stroke-width="1.4"/><circle cx="1418.1" cy="335" r="4.75" fill="#64c164" stroke="#000" stroke-width="1.4"/><circle cx="1413.5" cy="297.9" r="4.75" fill="#3ec13e" stroke="#000" stroke-width="1.4"/><circle cx="1407.1" cy="259" r="4.75" fill="#00c100" stroke="#000" stroke-width="1.4"/><circle cx="1404" cy="485.8" r="4.75" fill="#9c9cc1" stroke="#000" stroke-width="1.4"/><circle cx="1374.5" cy="524.4" r="4.75" fill="#8282c1" stroke="#000" stroke-width="1.4"/><circle cx="1346.7" cy="561.8" r="4.75" fill="#6464c1" stroke="#000" stroke-width="1.4"/><circle cx="1315.5" cy="600.2" r="4.75" fill="#3e3ec1" stroke="#000" stroke-width="1.4"/><circle cx="1285.5" cy="639" r="4.75" fill="#0000c1" stroke="#000" stroke-width="1.4"/><circle cx="1416.4" cy="448.3" r="4.75" fill="#9cc1c1" stroke="#000" stroke-width="1.4"/><circle cx="1399.4" cy="448.3" r="4.75" fill="#82c1c1" stroke="#000" stroke-width="1.4"/><circle cx="1380.9" cy="448.3" r="4.75" fill="#64c1c1" stroke="#000" stroke-width="1.4"/><circle cx="1365.3" cy="448.3" r="4.75" fill="#3ec1c1" stroke="#000" stroke-width="1.4"/><circle cx="1346.5" cy="448.3" r="4.75" fill="#00c1c1" stroke="#000" stroke-width="1.4"/><circle cx="1436.4" cy="473.3" r="4.75" fill="#c19cc1" stroke="#000" stroke-width="1.4"/><circle cx="1439.5" cy="499.7" r="4.75" fill="#c182c1" stroke="#000" stroke-width="1.4"/><circle cx="1442.8" cy="521.3" r="4.75" fill="#c164c1" stroke="#000" stroke-width="1.4"/><circle cx="1446.1" cy="547.7" r="4.75" fill="#c13ec1" stroke="#000" stroke-width="1.4"/><circle cx="1450.4" cy="571.1" r="4.75" fill="#c100c1" stroke="#000" stroke-width="1.4"/><circle cx="1451.9" cy="424.8" r="4.75" fill="#c1c19c" stroke="#000" stroke-width="1.4"/><circle cx="1471" cy="400.5" r="4.75" fill="#c1c182" stroke="#000" stroke-width="1.4"/><circle cx="1490.7" cy="375.2" r="4.75" fill="#c1c164" stroke="#000" stroke-width="1.4"/><circle cx="1508.1" cy="352" r="4.75" fill="#c1c13e" stroke="#000" stroke-width="1.4"/><circle cx="1526.5" cy="328.9" r="4.75" fill="#c1c100" stroke="#000" stroke-width="1.4"/><circle cx="1433.6" cy="448.3" r="4.75" fill="#fff" stroke="#000" stroke-width="1.4"/></svg><div class="a" style="left:1639px;top:121.200px;width:255.700px;height:216.600px;background:#333"></div><div class="a" style="left:1641.900px;top:124px;width:250.300px;height:210.900px;background:#a6a6aa"></div><div class="cl ins" style="left:1643.3px;top:125.4px;width:247px;height:207.7px"><i style="background:linear-gradient(90deg,#699c00,#6d9c00,#729c00,#779c00,#7c9c00,#819c00,#869c00,#8b9c00,#909c00,#959c00,#9a9c00,#9c9800,#9c9300,#9c8f00)"></i><i style="background:linear-gradient(90deg,#6a9c00,#6e9c00,#739c00,#789c00,#7d9c00,#829c00,#879c00,#8c9c00,#919c00,#969c00,#9c9c00,#9c9700,#9c9200,#9c8d00)"></i><i style="background:linear-gradient(90deg,#6b9c00,#709c00,#749c00,#799c00,#7e9c00,#839c00,#889c00,#8d9c00,#929c00,#989c00,#9c9b00,#9c9600,#9c9100,#9c8c00)"></i><i style="background:linear-gradient(90deg,#6c9c00,#719c00,#759c00,#7a9c00,#7f9c00,#849c00,#899c00,#8e9c00,#949c00,#999c00,#9c9a00,#9c9400,#9c8f00,#9c8b00)"></i><i style="background:linear-gradient(90deg,#6d9c00,#729c00,#779c00,#7b9c00,#809c00,#859c00,#8b9c00,#909c00,#959c00,#9b9c00,#9c9800,#9c9300,#9c8e00,#9c8a00)"></i><i style="background:linear-gradient(90deg,#6e9c01,#739c00,#789c00,#7d9c00,#829c00,#879c00,#8c9c00,#919c00,#979c00,#9c9c00,#9c9700,#9c9200,#9c8d00,#9c8800)"></i><i style="background:linear-gradient(90deg,#6f9c01,#749c01,#799c00,#7e9c00,#839c00,#889c00,#8d9c00,#939c00,#989c00,#9c9b00,#9c9500,#9c9000,#9c8c00,#9c8700)"></i><i style="background:linear-gradient(90deg,#709c02,#759c01,#7a9c00,#7f9c00,#849c00,#899c00,#8f9c00,#949c00,#999c00,#9c9900,#9c9400,#9c8f00,#9c8a00,#9c8600)"></i><i style="background:linear-gradient(90deg,#719c02,#769c01,#7b9c01,#809c00,#859c00,#8b9c00,#909c00,#959c00,#9b9c00,#9c9800,#9c9300,#9c8e00,#9c8900,#9c8500)"></i><i style="background:linear-gradient(90deg,#739c02,#779c02,#7c9c01,#819c00,#879c00,#8c9c00,#919c00,#979c00,#9c9c00,#9c9600,#9c9100,#9c8c00,#9c8800,#9c8300)"></i><i style="background:linear-gradient(90deg,#749c03,#799c02,#7e9c01,#839c01,#889c00,#8d9c00,#939c00,#989c00,#9c9a00,#9c9500,#9c9000,#9c8b00,#9c8700,#9c8200)"></i><i style="background:linear-gradient(90deg,#759c03,#7a9c03,#7f9c02,#849c01,#899c00,#8f9c00,#949c00,#9a9c00,#9c9900,#9c9400,#9c8f00,#9c8a00,#9c8500,#9c8100)"></i><i style="background:linear-gradient(90deg,#769c04,#7b9c03,#809c02,#859c01,#8b9c01,#909c00,#959c00,#9b9c00,#9c9800,#9c9200,#9c8d00,#9c8900,#9c8400,#9c8000)"></i><i style="background:linear-gradient(90deg,#779c04,#7c9c03,#819c03,#879c02,#8c9c01,#919c00,#979c00,#9c9c00,#9c9600,#9c9100,#9c8c00,#9c8700,#9c8300,#9c7f00)"></i><i style="background:linear-gradient(90deg,#789c05,#7d9c04,#839c03,#889c02,#8d9c02,#939c01,#989c00,#9c9a00,#9c9500,#9c9000,#9c8b00,#9c8600,#9c8200,#9c7d00)"></i><i style="background:linear-gradient(90deg,#7a9c05,#7f9c04,#849c04,#899c03,#8f9c02,#949c01,#9a9c00,#9c9900,#9c9300,#9c8e00,#9c8900,#9c8500,#9c8000,#9c7c00)"></i><i style="background:linear-gradient(90deg,#7b9c06,#809c05,#859c04,#8b9c03,#909c02,#969c02,#9b9c01,#9c9700,#9c9200,#9c8d00,#9c8800,#9c8400,#9c7f00,#9c7b00)"></i><i style="background:linear-gradient(90deg,#7c9c06,#819c05,#879c05,#8c9c04,#919c03,#979c02,#9c9b01,#9c9601,#9c9100,#9c8c00,#9c8700,#9c8200,#9c7e00,#9c7a00)"></i><i style="background:linear-gradient(90deg,#7d9c07,#829c06,#889c05,#8d9c04,#939c03,#999c03,#9c9a02,#9c9401,#9c8f00,#9c8a00,#9c8600,#9c8100,#9c7d00,#9c7900)"></i><i style="background:linear-gradient(90deg,#7e9c07,#849c06,#899c06,#8f9c05,#949c04,#9a9c03,#9c9802,#9c9301,#9c8e01,#9c8900,#9c8400,#9c8000,#9c7c00,#9c7800)"></i><i style="background:linear-gradient(90deg,#809c08,#859c07,#8b9c06,#909c05,#969c04,#9b9c04,#9c9703,#9c9202,#9c8c01,#9c8800,#9c8300,#9c7f00,#9c7b00,#9c7700)"></i><i style="background:linear-gradient(90deg,#819c08,#869c07,#8c9c07,#929c06,#979c05,#9c9b04,#9c9603,#9c9002,#9c8b01,#9c8601,#9c8200,#9c7e00,#9c7900,#9c7500)"></i><i style="background:linear-gradient(90deg,#829c09,#889c08,#8d9c07,#939c06,#999c05,#9c9a04,#9c9403,#9c8f03,#9c8a02,#9c8501,#9c8100,#9c7c00,#9c7800,#9c7400)"></i><i style="background:linear-gradient(90deg,#849c09,#899c09,#8f9c08,#949c07,#9a9c06,#9c9805,#9c9304,#9c8d03,#9c8802,#9c8401,#9c7f01,#9c7b00,#9c7700,#9c7300)"></i><i style="background:linear-gradient(90deg,#859c0a,#8b9c09,#909c08,#969c07,#9c9c06,#9c9705,#9c9104,#9c8c03,#9c8703,#9c8302,#9c7e01,#9c7a00,#9c7600,#9c7200)"></i><i style="background:linear-gradient(90deg,#869c0b,#8c9c0a,#929c09,#979c08,#9c9b07,#9c9506,#9c9005,#9c8b04,#9c8603,#9c8102,#9c7d01,#9c7901,#9c7500,#9c7100)"></i><i style="background:linear-gradient(90deg,#889c0b,#8d9c0a,#939c09,#999c08,#9c9907,#9c9406,#9c8e05,#9c8904,#9c8503,#9c8003,#9c7c02,#9c7801,#9c7400,#9c7000)"></i><i style="background:linear-gradient(90deg,#899c0c,#8f9c0b,#959c0a,#9a9c09,#9c9808,#9c9207,#9c8d06,#9c8805,#9c8304,#9c7f03,#9c7b02,#9c7601,#9c7301,#9c6f00)"></i><i style="background:linear-gradient(90deg,#8b9c0c,#909c0b,#969c0b,#9c9c0a,#9c9608,#9c9107,#9c8c06,#9c8705,#9c8204,#9c7e03,#9c7903,#9c7502,#9c7101,#9c6e00)"></i><i style="background:linear-gradient(90deg,#8c9c0d,#929c0c,#989c0b,#9c9b0a,#9c9509,#9c8f08,#9c8a07,#9c8506,#9c8105,#9c7c04,#9c7803,#9c7402,#9c7001,#9c6d01)"></i></div><div class="cl ins" style="left:1643.3px;top:125.4px;width:247px;height:207.7px;clip-path:polygon(0 21.35px,247px 186.9px,247px 207.7px,0 207.7px)"><i style="background:linear-gradient(90deg,#abff00,#b3ff00,#baff00,#c2ff00,#caff00,#d2ff00,#daff00,#e2ff00,#ebff00,#f3ff00,#fcff00,#fff900,#fff100,#ffe900)"></i><i style="background:linear-gradient(90deg,#adff00,#b4ff00,#bcff00,#c4ff00,#ccff00,#d4ff00,#dcff00,#e5ff00,#edff00,#f6ff00,#feff00,#fff700,#ffef00,#ffe700)"></i><i style="background:linear-gradient(90deg,#afff00,#b6ff00,#beff00,#c6ff00,#ceff00,#d6ff00,#deff00,#e7ff00,#efff00,#f8ff00,#fffd00,#fff500,#ffed00,#ffe500)"></i><i style="background:linear-gradient(90deg,#b0ff00,#b8ff00,#c0ff00,#c8ff00,#d0ff00,#d8ff00,#e0ff00,#e9ff00,#f1ff00,#faff00,#fffb00,#fff200,#ffea00,#ffe300)"></i><i style="background:linear-gradient(90deg,#b2ff01,#baff00,#c2ff00,#caff00,#d2ff00,#daff00,#e2ff00,#ebff00,#f4ff00,#fdff00,#fff900,#fff000,#ffe800,#ffe100)"></i><i style="background:linear-gradient(90deg,#b4ff01,#bcff00,#c4ff00,#ccff00,#d4ff00,#dcff00,#e5ff00,#edff00,#f6ff00,#ffff00,#fff600,#ffee00,#ffe600,#ffdf00)"></i><i style="background:linear-gradient(90deg,#b6ff02,#bdff01,#c5ff00,#ceff00,#d6ff00,#deff00,#e7ff00,#efff00,#f8ff00,#fffd00,#fff400,#ffec00,#ffe400,#ffdd00)"></i><i style="background:linear-gradient(90deg,#b7ff03,#bfff01,#c7ff00,#d0ff00,#d8ff00,#e0ff00,#e9ff00,#f2ff00,#fbff00,#fffa00,#fff200,#ffea00,#ffe200,#ffdb00)"></i><i style="background:linear-gradient(90deg,#b9ff03,#c1ff02,#c9ff01,#d2ff00,#daff00,#e2ff00,#ebff00,#f4ff00,#fdff00,#fff800,#fff000,#ffe800,#ffe000,#ffd900)"></i><i style="background:linear-gradient(90deg,#bbff04,#c3ff03,#cbff02,#d4ff00,#dcff00,#e5ff00,#edff00,#f6ff00,#ffff00,#fff600,#ffed00,#ffe600,#ffde00,#ffd700)"></i><i style="background:linear-gradient(90deg,#bdff05,#c5ff03,#cdff02,#d6ff01,#deff00,#e7ff00,#f0ff00,#f9ff00,#fffc00,#fff400,#ffeb00,#ffe300,#ffdc00,#ffd500)"></i><i style="background:linear-gradient(90deg,#bfff05,#c7ff04,#cfff03,#d8ff02,#e0ff01,#e9ff00,#f2ff00,#fbff00,#fffa00,#fff100,#ffe900,#ffe100,#ffda00,#ffd300)"></i><i style="background:linear-gradient(90deg,#c1ff06,#c9ff05,#d1ff04,#daff02,#e2ff01,#ebff00,#f4ff00,#fdff00,#fff800,#ffef00,#ffe700,#ffdf00,#ffd800,#ffd100)"></i><i style="background:linear-gradient(90deg,#c3ff07,#cbff06,#d3ff04,#dcff03,#e5ff02,#edff01,#f7ff00,#fffe00,#fff500,#ffed00,#ffe500,#ffdd00,#ffd600,#ffcf00)"></i><i style="background:linear-gradient(90deg,#c5ff08,#cdff06,#d5ff05,#deff04,#e7ff03,#f0ff01,#f9ff00,#fffc00,#fff300,#ffeb00,#ffe300,#ffdb00,#ffd400,#ffcd00)"></i><i style="background:linear-gradient(90deg,#c7ff08,#cfff07,#d8ff06,#e0ff05,#e9ff03,#f2ff02,#fbff01,#fffa00,#fff100,#ffe800,#ffe100,#ffd900,#ffd200,#ffcb00)"></i><i style="background:linear-gradient(90deg,#c9ff09,#d1ff08,#daff07,#e2ff05,#ebff04,#f4ff03,#feff01,#fff700,#ffef00,#ffe600,#ffde00,#ffd700,#ffd000,#ffc900)"></i><i style="background:linear-gradient(90deg,#cbff0a,#d3ff09,#dcff07,#e5ff06,#eeff05,#f7ff03,#fffe02,#fff501,#ffec00,#ffe400,#ffdc00,#ffd500,#ffce00,#ffc700)"></i><i style="background:linear-gradient(90deg,#cdff0b,#d5ff0a,#deff08,#e7ff07,#f0ff06,#f9ff04,#fffb03,#fff202,#ffea00,#ffe200,#ffda00,#ffd300,#ffcc00,#ffc600)"></i><i style="background:linear-gradient(90deg,#cfff0c,#d7ff0a,#e0ff09,#e9ff08,#f2ff06,#fcff05,#fff904,#fff002,#ffe801,#ffe000,#ffd800,#ffd100,#ffca00,#ffc400)"></i><i style="background:linear-gradient(90deg,#d1ff0d,#d9ff0b,#e2ff0a,#ebff09,#f5ff07,#feff06,#fff704,#ffee03,#ffe602,#ffde00,#ffd600,#ffcf00,#ffc800,#ffc200)"></i><i style="background:linear-gradient(90deg,#d3ff0e,#dcff0c,#e5ff0b,#eeff09,#f7ff08,#fffd07,#fff405,#ffec04,#ffe302,#ffdc01,#ffd400,#ffcd00,#ffc600,#ffc000)"></i><i style="background:linear-gradient(90deg,#d5ff0e,#deff0d,#e7ff0c,#f0ff0a,#faff09,#fffb07,#fff206,#ffe904,#ffe103,#ffd902,#ffd201,#ffcb00,#ffc400,#ffbe00)"></i><i style="background:linear-gradient(90deg,#d7ff0f,#e0ff0e,#e9ff0d,#f3ff0b,#fcff0a,#fff908,#fff006,#ffe705,#ffdf04,#ffd702,#ffd001,#ffc900,#ffc300,#ffbc00)"></i><i style="background:linear-gradient(90deg,#d9ff10,#e2ff0f,#ecff0d,#f5ff0c,#feff0b,#fff609,#ffed07,#ffe506,#ffdd04,#ffd503,#ffce02,#ffc701,#ffc100,#ffbb00)"></i><i style="background:linear-gradient(90deg,#dcff11,#e5ff10,#eeff0e,#f7ff0d,#fffd0b,#fff40a,#ffeb08,#ffe306,#ffdb05,#ffd304,#ffcc02,#ffc501,#ffbf00,#ffb900)"></i><i style="background:linear-gradient(90deg,#deff12,#e7ff11,#f0ff0f,#faff0e,#fffb0c,#fff10a,#ffe909,#ffe007,#ffd906,#ffd104,#ffca03,#ffc302,#ffbd01,#ffb700)"></i><i style="background:linear-gradient(90deg,#e0ff13,#e9ff12,#f3ff10,#fcff0f,#fff80d,#ffef0b,#ffe609,#ffde08,#ffd706,#ffcf05,#ffc804,#ffc202,#ffbb01,#ffb500)"></i><i style="background:linear-gradient(90deg,#e2ff14,#ecff13,#f5ff11,#ffff10,#fff60e,#ffed0c,#ffe40a,#ffdc08,#ffd407,#ffcd05,#ffc604,#ffc003,#ffb902,#ffb301)"></i><i style="background:linear-gradient(90deg,#e5ff15,#eeff14,#f8ff12,#fffd11,#fff30f,#ffea0d,#ffe20b,#ffda09,#ffd208,#ffcb06,#ffc405,#ffbe03,#ffb802,#ffb201)"></i></div><svg width="1920" height="400"><defs><clipPath id="icp"><rect x="1643.3" y="125.4" width="247" height="207.7"/></clipPath></defs><rect x="1758.6" y="220.5" width="15.2" height="15.2" fill="none" stroke="#fff" stroke-width="1.7"/><circle cx="1754.2" cy="164.8" r="4.75" fill="#c1c100" stroke="#000" stroke-width="1.4"/><g clip-path="url(#icp)"><circle cx="1650.2" cy="313.34" r="4.75" fill="#c1c13e" stroke="#000" stroke-width="1.4"/></g></svg>
<div class="a" style="left:0;top:997px;width:1920px;height:47px;background:linear-gradient(#4b4b4b,#3c3c3c 35%,#262626 100%)"></div><div class="a" style="left:1px;top:997.500px;width:33.500px;height:46.500px;border-radius:4px 4px 0 0;background:linear-gradient(#8e8e8e,#787878 50%,#606060);box-shadow:0 0 0 1px #555 inset"></div><div class="a" style="left:11.500px;top:998.500px;width:12px;height:12px;border-radius:6px;background:linear-gradient(#5a5a5a,#808080)"></div><div class="a" style="left:4.500px;top:1017px;width:26.500px;height:23px;border-radius:3px;background:#ff0;border:1px solid #c8c800"></div><div class="a" style="left:39.2px;top:997.500px;width:112.200px;height:46.500px;border-radius:4px 4px 0 0;background:linear-gradient(#8c8c8c,#777 50%,#5c5c5c);box-shadow:0 0 0 1px #5a5a5a inset"></div><div class="a" style="left:43px;top:1001.500px;width:105px;height:27px;border-radius:3px;background:rgb(194,194,162);box-shadow:0 0 0 1px rgba(0,0,0,.28) inset"></div><div class="a" style="left:153.2px;top:997.500px;width:112.200px;height:46.500px;border-radius:4px 4px 0 0;background:linear-gradient(#8c8c8c,#777 50%,#5c5c5c);box-shadow:0 0 0 1px #5a5a5a inset"></div><div class="a" style="left:157px;top:1001.500px;width:105px;height:27px;border-radius:3px;background:rgb(194,194,134);box-shadow:0 0 0 1px rgba(0,0,0,.28) inset"></div><div class="a" style="left:267.2px;top:997.500px;width:112.200px;height:46.500px;border-radius:4px 4px 0 0;background:linear-gradient(#8c8c8c,#777 50%,#5c5c5c);box-shadow:0 0 0 1px #5a5a5a inset"></div><div class="a" style="left:271px;top:1001.500px;width:105px;height:27px;border-radius:3px;background:rgb(192,192,106);box-shadow:0 0 0 1px rgba(0,0,0,.28) inset"></div><div class="a" style="left:381.2px;top:997.500px;width:112.200px;height:46.500px;border-radius:4px 4px 0 0;background:linear-gradient(#8c8c8c,#777 50%,#5c5c5c);box-shadow:0 0 0 1px #5a5a5a inset"></div><div class="a" style="left:385px;top:1001.500px;width:105px;height:27px;border-radius:3px;background:rgb(192,192,72);box-shadow:0 0 0 1px rgba(0,0,0,.28) inset"></div><div class="a" style="left:495.2px;top:997.500px;width:112.200px;height:46.500px;border-radius:4px 4px 0 0;background:linear-gradient(#2c2c2c,#1c1c1c 30%,#222);box-shadow:0 0 0 1px #2a2a2a inset"></div><div class="a" style="left:499px;top:1001.500px;width:105px;height:27px;border-radius:3px;background:rgb(196,196,0);box-shadow:0 0 0 1px rgba(0,0,0,.28) inset"></div><svg width="700" height="1044"><path d="M17.500 1001.700l3.600 3.600h-7.200z" fill="#1a1a1a"/><text x="95.4" y="1040" font-size="7.5" fill="#262626" text-anchor="middle" font-weight="bold">20%</text><text x="209.4" y="1040" font-size="7.5" fill="#262626" text-anchor="middle" font-weight="bold">40%</text><text x="323.4" y="1040" font-size="7.5" fill="#262626" text-anchor="middle" font-weight="bold">60%</text><text x="437.4" y="1040" font-size="7.5" fill="#262626" text-anchor="middle" font-weight="bold">80%</text><text x="551.4" y="1040" font-size="7.5" fill="#fff" text-anchor="middle" font-weight="bold">100%</text></svg><div class="a" style="left:1678px;top:997.500px;width:36px;height:14.500px;border-radius:3px 3px 0 0;background:linear-gradient(#969696,#808080)"></div><div class="a" style="left:1678px;top:1012px;width:36px;height:32px;background:linear-gradient(#7c7c7c,#6a6a6a);border-top:1px solid #5a5a5a"></div><div class="a" style="left:1689.500px;top:998.500px;width:12.500px;height:12px;border-radius:6px;background:linear-gradient(#6a6a6a,#8c8c8c)"></div><div class="a" style="left:1684.300px;top:1015.800px;width:22.800px;height:22.800px;border-radius:3px;background:linear-gradient(#9c9c9c,#8c8c8c 50%,#6c6c6c 50%,#727272);border:1.500px solid #111"></div><div class="a" style="left:1690.500px;top:1022px;width:10.500px;height:10.500px;background:linear-gradient(#1a1a1a 50%,#000 50%)"></div><div class="a" style="left:1715px;top:997.500px;width:33px;height:22.500px;border-radius:2px 2px 0 0;background:linear-gradient(#9a9a9a,#808080 50%,#6c6c6c)"></div><div class="a" style="left:1724px;top:1001px;width:15px;height:15px;border-radius:8px;background:linear-gradient(#6e6e6e,#929292)"></div><div class="a" style="left:1749px;top:997.500px;width:33px;height:22.500px;border-radius:2px 2px 0 0;background:linear-gradient(#9a9a9a,#808080 50%,#6c6c6c)"></div><div class="a" style="left:1758px;top:1001px;width:15px;height:15px;border-radius:8px;background:linear-gradient(#6e6e6e,#929292)"></div><div class="a" style="left:1783px;top:997.500px;width:33px;height:22.500px;border-radius:2px 2px 0 0;background:linear-gradient(#9a9a9a,#808080 50%,#6c6c6c)"></div><div class="a" style="left:1792px;top:1001px;width:15px;height:15px;border-radius:8px;background:linear-gradient(#6e6e6e,#929292)"></div><div class="a" style="left:1817px;top:997.500px;width:33px;height:22.500px;border-radius:2px 2px 0 0;background:linear-gradient(#9a9a9a,#808080 50%,#6c6c6c)"></div><div class="a" style="left:1826px;top:1001px;width:15px;height:15px;border-radius:8px;background:linear-gradient(#6e6e6e,#929292)"></div><div class="a" style="left:1851px;top:997.500px;width:33px;height:22.500px;border-radius:2px 2px 0 0;background:linear-gradient(#9a9a9a,#808080 50%,#6c6c6c)"></div><div class="a" style="left:1860px;top:1001px;width:15px;height:15px;border-radius:8px;background:linear-gradient(#6e6e6e,#929292)"></div><div class="a" style="left:1884px;top:997.500px;width:36px;height:22.500px;background:linear-gradient(#3c3c3c,#2a2a2a)"></div><div class="a" style="left:1894.500px;top:1001px;width:15px;height:15px;border-radius:8px;background:#3a3a3a"></div><div class="a" style="left:1715px;top:1021px;width:101px;height:23px;border-radius:3px 0 0 0;background:linear-gradient(#9a9a9a,#808080 50%,#6c6c6c)"></div><div class="a" style="left:1817px;top:1021px;width:102px;height:23px;border-radius:0 3px 0 0;background:linear-gradient(#9a9a9a,#808080 50%,#6c6c6c)"></div><div class="a" style="left:1730.500px;top:1025px;width:15px;height:15px;border-radius:8px;background:linear-gradient(#6e6e6e,#929292)"></div><div class="a" style="left:1890px;top:1025px;width:15px;height:15px;border-radius:8px;background:linear-gradient(#6e6e6e,#929292)"></div><svg width="1920" height="1044"><path d="M1695.700 1002l3.500 3.600h-7z" fill="#262626"/><rect x="1728.700" y="1005.700" width="5.700" height="5.700" fill="#262626"/><path d="M1763.200 1004.800v7.400l6-3.700z" fill="#262626"/><text x="1799.5" y="1011.3" font-size="7.2" fill="#262626" text-anchor="middle" font-weight="bold">[··]</text><text x="1833.5" y="1012.3" font-size="13" fill="#262626" text-anchor="middle" font-weight="bold">∞</text><g transform="translate(1867.500 1008.500)" fill="none" stroke="#262626" stroke-width="1.700"><path d="M-3.600 -0.500a3.700 3.700 0 0 1 6.500 -2"/><path d="M3.600 0.500a3.700 3.700 0 0 1 -6.500 2"/></g><path d="M1871.700 1003.500v3.600h-3.600zM1863.300 1013.500v-3.600h3.600z" fill="#262626"/><text x="1757.5" y="1037.8" font-size="17.6" fill="#262626" textLength="38" lengthAdjust="spacingAndGlyphs" stroke="#262626" stroke-width=".5">Back</text><text x="1837.5" y="1037.8" font-size="17.6" fill="#262626" textLength="39" lengthAdjust="spacingAndGlyphs" stroke="#262626" stroke-width=".5">Next</text><text x="1737.8" y="1036.8" font-size="12.5" fill="#262626" text-anchor="middle">«</text><text x="1897.7" y="1036.8" font-size="12.5" fill="#262626" text-anchor="middle">»</text></svg>
</body></html>
